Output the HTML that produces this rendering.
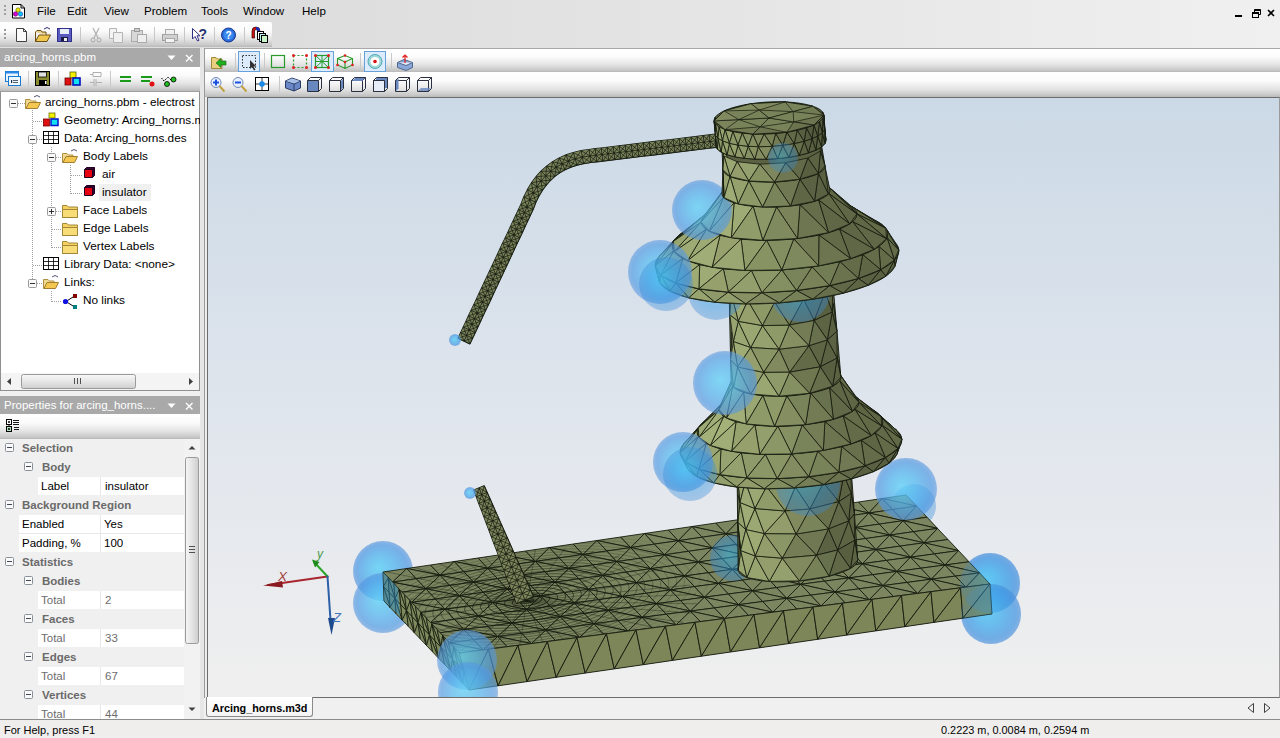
<!DOCTYPE html>
<html><head><meta charset="utf-8">
<style>
*{margin:0;padding:0;box-sizing:border-box}
html,body{width:1280px;height:738px;overflow:hidden;background:#f0f0f0;font-family:"Liberation Sans",sans-serif;font-size:12px;color:#000}
.a{position:absolute}
svg{overflow:visible}
.menu span{position:absolute;top:4px;font-size:11.6px;color:#000}
.tb{background:linear-gradient(#ffffff 0%,#fbfbfb 35%,#e4e4e4 68%,#c8c8c8 92%,#b8b8b8 100%)}
.hdr{background:#a9a9a9;color:#fff;font-size:11.5px}
.tree div{position:absolute;font-size:11.8px;white-space:nowrap;line-height:13px}
.pg div{position:absolute;white-space:nowrap;font-size:11.5px;line-height:14px}
.pg .cat{font-weight:bold;color:#6a6a6a}
.pg .val{color:#000}
.pg .dis{color:#6d6d6d}
.ico{position:absolute}
</style></head><body>
<!-- menu bar -->
<div class="a" style="left:0;top:0;width:1280px;height:48px;background:linear-gradient(90deg,#e2e2e2 0%,#dddddd 22%,#e6e6e6 60%,#f0f0f0 100%)"></div>
<div class="a" style="left:0;top:48px;width:1280px;height:1px;background:#a8a8a8"></div>
<div class="a menu" style="left:0;top:0;width:1280px;height:22px">
 <svg class="ico" style="left:4px;top:5px" width="3" height="12"><rect x="0" y="0" width="2" height="2" fill="#a0a0a0"/><rect x="0" y="4" width="2" height="2" fill="#a0a0a0"/><rect x="0" y="8" width="2" height="2" fill="#a0a0a0"/></svg>
 <svg class="ico" style="left:11px;top:3px" width="15" height="16" viewBox="0 0 15 16"><path d="M1.5 1.5H10L13.5 5V15H1.5Z" fill="#fff" stroke="#000"/><path d="M10 1.5V5H13.5" fill="none" stroke="#000"/><circle cx="7" cy="7" r="2.2" fill="#e8e800" stroke="#5a5a00" stroke-width=".6"/><circle cx="4.5" cy="11" r="2.2" fill="#d000d0" stroke="#600060" stroke-width=".6"/><circle cx="9.5" cy="11" r="2.2" fill="#10c0ff" stroke="#0040a0" stroke-width=".6"/></svg>
 <span style="left:37px">File</span>
 <span style="left:67px">Edit</span>
 <span style="left:104px">View</span>
 <span style="left:144px">Problem</span>
 <span style="left:201px">Tools</span>
 <span style="left:243px">Window</span>
 <span style="left:302px">Help</span>
 <!-- MDI buttons -->
 <svg class="ico" style="left:1234px;top:8px" width="44" height="12" viewBox="0 0 44 12">
  <rect x="1" y="7" width="7" height="2" fill="#000"/>
  <rect x="18.5" y="4.5" width="6" height="5" fill="none" stroke="#000"/><rect x="18.5" y="4.5" width="6" height="1.5" fill="#000"/>
  <path d="M20.5 4.5V1.5H26.5V6.5H24.5" fill="none" stroke="#000"/><rect x="20.5" y="1.5" width="6" height="1.5" fill="#000"/>
  <path d="M34 2L40 8M40 2L34 8" stroke="#000" stroke-width="1.6"/>
 </svg>
</div>

<!-- main toolbar -->
<div class="a tb" style="left:0;top:22px;width:272px;height:25px;border-radius:0 2px 0 0"></div>
<svg class="ico" style="left:0;top:22px" width="272" height="25" viewBox="0 0 272 25">
 <g fill="#9a9a9a"><rect x="4" y="7" width="2" height="2"/><rect x="4" y="11" width="2" height="2"/><rect x="4" y="15" width="2" height="2"/></g>
 <!-- new -->
 <path d="M16.5 6.5H23.5L26.5 9.5V19.5H16.5Z" fill="#fafafa" stroke="#404040"/><path d="M23.5 6.5V9.5H26.5" fill="none" stroke="#404040"/>
 <!-- open -->
 <path d="M35.5 10V19.5H47L50.5 13H39L35.5 19.5" fill="#f0c850" stroke="#705010"/><path d="M35.5 10L37 8.5H41L42 10H46V13" fill="#e8d090" stroke="#705010"/><path d="M44 7Q47 4 50 7" fill="none" stroke="#303070"/>
 <!-- save -->
 <rect x="57.5" y="6.5" width="14" height="13" fill="#5a5ac0" stroke="#30308a"/><rect x="60" y="7" width="9" height="5" fill="#e8eef8"/><rect x="61" y="15" width="7" height="4.5" fill="#1a1a40"/><rect x="64" y="16" width="3" height="3" fill="#eee"/>
 <rect x="80" y="5" width="1" height="16" fill="#c8c8c8"/>
 <!-- cut disabled -->
 <path d="M93 6L98 16M99 6L94 16" stroke="#b0b0b0" stroke-width="1.2"/><circle cx="93" cy="18" r="2" fill="none" stroke="#a8a8a8"/><circle cx="99" cy="18" r="2" fill="none" stroke="#a8a8a8"/>
 <!-- copy disabled -->
 <path d="M109.5 6.5H116.5V16.5H109.5Z" fill="#f4f4f4" stroke="#b4b4b4"/><path d="M113.5 10.5H122.5V20.5H113.5Z" fill="#f0f0f0" stroke="#b4b4b4"/>
 <!-- paste disabled -->
 <rect x="131.5" y="8.5" width="11" height="11" fill="#d8d8d8" stroke="#aaa"/><rect x="134.5" y="6.5" width="5" height="3" fill="#ccc" stroke="#999"/><rect x="137.5" y="12.5" width="9" height="8" fill="#eee" stroke="#aaa"/>
 <rect x="154" y="5" width="1" height="16" fill="#c8c8c8"/>
 <!-- print disabled -->
 <rect x="162.5" y="12.5" width="15" height="6" fill="#d0d0d0" stroke="#a0a0a0"/><rect x="165.5" y="7.5" width="9" height="5" fill="#f0f0f0" stroke="#a8a8a8"/><rect x="165.5" y="16.5" width="9" height="4" fill="#f4f4f4" stroke="#a8a8a8"/>
 <rect x="184" y="5" width="1" height="16" fill="#c8c8c8"/>
 <!-- help arrow -->
 <path d="M192.5 6.5V17L195 14.5L197.5 19L199 18.3L197 13.8H200Z" fill="#fff" stroke="#303080"/><text x="198.5" y="17" font-size="14" font-weight="bold" fill="#2a3470" font-family="Liberation Sans">?</text>
 <rect x="214" y="5" width="1" height="16" fill="#c8c8c8"/>
 <!-- help circle -->
 <circle cx="228.5" cy="13" r="7" fill="#2a6ad8" stroke="#1a3a90"/><circle cx="228.5" cy="13" r="5" fill="#3a8af0"/><text x="225.5" y="17" font-size="10" font-weight="bold" fill="#fff" font-family="Liberation Sans">?</text>
 <rect x="244" y="5" width="1" height="16" fill="#c8c8c8"/>
 <!-- app icon -->
 <path d="M252 16V9Q252 5 256 5Q260 5 260 9V12H257.5V9Q257.5 7.5 256 7.5Q254.5 7.5 254.5 9V16Z" fill="#d01010" stroke="#300" stroke-width=".7"/><path d="M256 5Q260 5 260 9V12H257.5V9Q257.5 7.5 256 7.5Z" fill="#1830c0"/>
 <rect x="257.5" y="9.5" width="6" height="8" fill="#fff" stroke="#000"/><rect x="259.5" y="11.5" width="6" height="8" fill="#b8f0f0" stroke="#000"/><rect x="261.5" y="13.5" width="6" height="7" fill="#c8f4c8" stroke="#000"/>
</svg>

<!-- left panel 1 -->
<div class="a hdr" style="left:0;top:48px;width:200px;height:19px"><span class="a" style="left:4px;top:3px">arcing_horns.pbm</span>
 <svg class="ico" style="left:166px;top:6px" width="30" height="9" viewBox="0 0 30 9"><path d="M1.5 1.5H9.5L5.5 6Z" fill="#fff"/><path d="M20 1L26.5 7.5M26.5 1L20 7.5" stroke="#fff" stroke-width="1.4"/></svg>
</div>
<div class="a tb" style="left:0;top:67px;width:200px;height:24px"></div>
<svg class="ico" style="left:0;top:67px" width="200" height="24" viewBox="0 0 200 24">
 <!-- window icon -->
 <rect x="5.5" y="4.5" width="13" height="10" fill="#e8f4ff" stroke="#1a7ad0"/><rect x="5.5" y="4.5" width="13" height="2" fill="#2a8ae8"/>
 <rect x="8.5" y="9.5" width="12" height="9" fill="#f0f8ff" stroke="#1a7ad0"/><rect x="11" y="13" width="1.2" height="3" fill="#203040"/><rect x="13" y="13" width="5" height="1" fill="#506070"/><rect x="13" y="15" width="5" height="1" fill="#506070"/>
 <rect x="28" y="4" width="1" height="16" fill="#cacaca"/>
 <!-- dark save -->
 <rect x="35.5" y="4.5" width="14" height="14" fill="#8a8a30" stroke="#000"/><rect x="38.5" y="5" width="8" height="5" fill="#e0e0e0" stroke="#000" stroke-width=".8"/><rect x="39" y="13" width="8" height="5.5" fill="#000"/><rect x="45" y="14" width="1.5" height="3" fill="#fff"/>
 <rect x="58" y="4" width="1" height="16" fill="#cacaca"/>
 <!-- cubes -->
 <rect x="70" y="5" width="6" height="6" fill="#f0f000" stroke="#606000" stroke-width=".8"/><rect x="65" y="11" width="6" height="7" fill="#e01010" stroke="#600" stroke-width=".8"/><rect x="73" y="11" width="7" height="7" fill="#10e0f0" stroke="#0010c0" stroke-width="1.6"/>
 <!-- disabled icon -->
 <path d="M90 7.5H93M93 5.5H101V9.5H93Z M90 15.5H94M94 12V19M96 12V19M96 15.5H102" fill="none" stroke="#b0b0b0"/>
 <rect x="110" y="4" width="1" height="16" fill="#cacaca"/>
 <!-- green = -->
 <rect x="120" y="9" width="11" height="2" fill="#1a9a1a"/><rect x="120" y="13" width="11" height="2" fill="#1a9a1a"/>
 <rect x="141" y="9" width="11" height="2" fill="#1a9a1a"/><rect x="141" y="13" width="9" height="2" fill="#1a9a1a"/><circle cx="152" cy="17" r="2.5" fill="#e01010"/>
 <!-- green links -->
 <path d="M161.5 11L164 14L168 10L172 14" fill="none" stroke="#000" stroke-dasharray="1.5 1"/><circle cx="167" cy="17" r="2.5" fill="#20c020" stroke="#000" stroke-width=".8"/><circle cx="173.5" cy="12.5" r="2.5" fill="#20c020" stroke="#000" stroke-width=".8"/>
</svg>
<div class="a" style="left:0;top:91px;width:200px;height:300px;background:#fff;border:1px solid #8e8f8f;border-top-color:#a0a0a0"></div>
<svg class="ico" style="left:0;top:91px" width="200" height="284" viewBox="0 0 200 284">
 <g stroke="#a0a0a0" stroke-dasharray="1 1" fill="none">
  <path d="M18 12.5H25"/>
  <path d="M32.5 19V190"/><path d="M33 30.5H43"/><path d="M37 48.5H43"/><path d="M33 174.5H43"/><path d="M37 192.5H43"/>
  <path d="M51.5 56V157"/><path d="M56 66.5H62"/><path d="M56 120.5H62"/><path d="M52 138.5H62"/><path d="M52 156.5H62"/>
  <path d="M70.5 74V103"/><path d="M71 84.5H83"/><path d="M71 102.5H83"/>
  <path d="M51.5 200V211"/><path d="M52 210.5H62"/>
 </g>
 <!-- expanders -->
 <g fill="#f8f8f8" stroke="#9a9a9a">
  <rect x="9.5" y="8.5" width="8" height="8" rx="1"/><rect x="28.5" y="44.5" width="8" height="8" rx="1"/><rect x="47.5" y="62.5" width="8" height="8" rx="1"/><rect x="47.5" y="116.5" width="8" height="8" rx="1"/><rect x="28.5" y="188.5" width="8" height="8" rx="1"/>
 </g>
 <g fill="#303030"><rect x="11" y="12" width="5" height="1"/><rect x="30" y="48" width="5" height="1"/><rect x="49" y="66" width="5" height="1"/><rect x="49" y="120" width="5" height="1"/><rect x="51" y="118" width="1" height="5"/><rect x="30" y="192" width="5" height="1"/></g>
 <!-- root open folder -->
 <g id="ofold"><path d="M25.5 8.5H30L31.5 10H36V17.5H25.5Z" fill="#f0d890" stroke="#b09040"/><path d="M26 17.5L29 11.5H40.5L37.5 17.5Z" fill="#f4c850" stroke="#a08030"/><path d="M34 6Q37 3 40 6" fill="none" stroke="#404060" stroke-width=".9"/></g>
 <!-- geometry cubes -->
 <rect x="49" y="22" width="6" height="5" fill="#f0f000" stroke="#707000" stroke-width=".8"/><rect x="43.5" y="28" width="6" height="7" fill="#e01010" stroke="#700" stroke-width=".8"/><rect x="51" y="28" width="7" height="6.5" fill="#10e0f0" stroke="#0010d0" stroke-width="1.5"/>
 <!-- data table -->
 <g fill="none" stroke="#000"><rect x="43.5" y="40.5" width="15" height="12"/><path d="M43.5 44.5H58.5M43.5 48.5H58.5M48.5 40.5V52.5M53.5 40.5V52.5" stroke-width=".8"/></g>
 <!-- body labels open folder -->
 <use href="#ofold" x="37" y="54"/>
 <!-- air / insulator cubes -->
 <g><path d="M84.5 78.5L86.5 76.5H94.5V84.5L92.5 86.5H84.5Z" fill="#3a0030" stroke="#200020"/><rect x="85" y="79" width="7" height="7" fill="#e80010"/><path d="M84.5 78.5H92.5V86.5M92.5 78.5L94.5 76.5" fill="none" stroke="#200020"/></g>
 <g><path d="M84.5 96.5L86.5 94.5H94.5V102.5L92.5 104.5H84.5Z" fill="#3a0030" stroke="#200020"/><rect x="85" y="97" width="7" height="7" fill="#e80010"/><path d="M84.5 96.5H92.5V104.5M92.5 96.5L94.5 94.5" fill="none" stroke="#200020"/></g>
 <rect x="99" y="93" width="52" height="17" fill="#ececec" opacity=".8"/>
 <!-- closed folders -->
 <g id="cfold"><path d="M62.5 114.5H67L68.5 116H77.5V126.5H62.5Z" fill="#f6d060" stroke="#a08838"/><path d="M62.5 118.5H77.5V126.5H62.5Z" fill="#f8dc78" stroke="#a08838"/></g>
 <use href="#cfold" x="0" y="18"/>
 <use href="#cfold" x="0" y="36"/>
 <!-- library data table -->
 <g fill="none" stroke="#000"><rect x="43.5" y="166.5" width="15" height="12"/><path d="M43.5 170.5H58.5M43.5 174.5H58.5M48.5 166.5V178.5M53.5 166.5V178.5" stroke-width=".8"/></g>
 <!-- links folder -->
 <use href="#ofold" x="18" y="180"/>
 <!-- no links icon -->
 <path d="M66 210.5L73 206M66 210.5L73 215" stroke="#000" fill="none"/><circle cx="65.5" cy="210.5" r="2.6" fill="#1010e0"/><rect x="73" y="203" width="4" height="4" fill="#800000"/><rect x="73" y="214" width="4" height="4" fill="#008080"/>
</svg>
<div class="a tree" style="left:0;top:91px;width:200px;height:280px;overflow:hidden">
 <div style="left:45px;top:5px">arcing_horns.pbm - electrost</div>
 <div style="left:64px;top:23px">Geometry: Arcing_horns.m</div>
 <div style="left:64px;top:41px">Data: Arcing_horns.des</div>
 <div style="left:83px;top:59px">Body Labels</div>
 <div style="left:102px;top:77px">air</div>
 <div style="left:102px;top:95px">insulator</div>
 <div style="left:83px;top:113px">Face Labels</div>
 <div style="left:83px;top:131px">Edge Labels</div>
 <div style="left:83px;top:149px">Vertex Labels</div>
 <div style="left:64px;top:167px">Library Data: &lt;none&gt;</div>
 <div style="left:64px;top:185px">Links:</div>
 <div style="left:83px;top:203px">No links</div>
</div>
<!-- horizontal scrollbar -->
<div class="a" style="left:1px;top:373px;width:198px;height:17px;background:#f4f4f4"></div>
<svg class="ico" style="left:1px;top:373px" width="198" height="17" viewBox="0 0 198 17">
 <path d="M6 8.5L10 5V12Z" fill="#404040"/>
 <path d="M192 8.5L188 5V12Z" fill="#404040"/>
 <rect x="20.5" y="1.5" width="114" height="14" rx="2" fill="url(#thumbg)" stroke="#9a9a9a"/>
 <defs><linearGradient id="thumbg" x1="0" y1="0" x2="0" y2="1"><stop offset="0" stop-color="#f8f8f8"/><stop offset=".5" stop-color="#e6e6e6"/><stop offset="1" stop-color="#cfcfcf"/></linearGradient>
 <linearGradient id="thumbv" x1="0" y1="0" x2="1" y2="0"><stop offset="0" stop-color="#f6f6f6"/><stop offset=".5" stop-color="#e4e4e4"/><stop offset="1" stop-color="#cdcdcd"/></linearGradient></defs>
 <path d="M73.5 5V11M76.5 5V11M79.5 5V11" stroke="#505050"/>
</svg>

<!-- properties panel -->
<div class="a hdr" style="left:0;top:396px;width:200px;height:18px"><span class="a" style="left:4px;top:3px">Properties for arcing_horns....</span>
 <svg class="ico" style="left:166px;top:6px" width="30" height="9" viewBox="0 0 30 9"><path d="M1.5 1.5H9.5L5.5 6Z" fill="#fff"/><path d="M20 1L26.5 7.5M26.5 1L20 7.5" stroke="#fff" stroke-width="1.4"/></svg>
</div>
<div class="a tb" style="left:0;top:414px;width:200px;height:25px"></div>
<svg class="ico" style="left:0;top:414px" width="30" height="25" viewBox="0 0 30 25">
 <rect x="6.5" y="5.5" width="5" height="5" fill="#fff" stroke="#000"/><path d="M8 8H10M9 7V9" stroke="#000"/>
 <rect x="6.5" y="12.5" width="5" height="5" fill="#b0e0c0" stroke="#000"/><path d="M8 15H10M9 14V16" stroke="#000"/>
 <path d="M9 10.5V12.5" stroke="#000"/>
 <path d="M13 6.5H19M13 8.5H19M13 10.5H19M14 13.5H19M14 15.5H19" stroke="#000" stroke-width=".9"/>
</svg>
<div class="a pg" style="left:0;top:439px;width:184px;height:280px;background:#f0f0f0;overflow:hidden">
 <svg class="ico" style="left:0;top:0" width="184" height="279" viewBox="0 0 184 279">
  <g fill="#fff">
   <rect x="38" y="38" width="146" height="18"/>
   <rect x="19" y="76" width="165" height="18"/><rect x="19" y="95" width="165" height="18"/>
   <rect x="38" y="152" width="146" height="18"/><rect x="38" y="190" width="146" height="18"/><rect x="38" y="228" width="146" height="18"/><rect x="38" y="266" width="146" height="18"/>
  </g>
  <g fill="#e8e8e8"><rect x="100" y="38" width="1" height="18"/><rect x="100" y="76" width="1" height="37"/><rect x="19" y="94" width="165" height="1"/><rect x="100" y="152" width="1" height="18"/><rect x="100" y="190" width="1" height="18"/><rect x="100" y="228" width="1" height="18"/><rect x="100" y="266" width="1" height="18"/></g>
  <g fill="#fafafa" stroke="#8a9098">
   <rect x="5.5" y="4.5" width="8" height="8" rx="1"/><rect x="24.5" y="23.5" width="8" height="8" rx="1"/><rect x="5.5" y="61.5" width="8" height="8" rx="1"/><rect x="5.5" y="118.5" width="8" height="8" rx="1"/>
   <rect x="24.5" y="137.5" width="8" height="8" rx="1"/><rect x="24.5" y="175.5" width="8" height="8" rx="1"/><rect x="24.5" y="213.5" width="8" height="8" rx="1"/><rect x="24.5" y="251.5" width="8" height="8" rx="1"/>
  </g>
  <g fill="#404858"><rect x="7" y="8" width="5" height="1"/><rect x="26" y="27" width="5" height="1"/><rect x="7" y="65" width="5" height="1"/><rect x="7" y="122" width="5" height="1"/><rect x="26" y="141" width="5" height="1"/><rect x="26" y="179" width="5" height="1"/><rect x="26" y="217" width="5" height="1"/><rect x="26" y="255" width="5" height="1"/></g>
 </svg>
 <div class="cat" style="left:22px;top:2px">Selection</div>
 <div class="cat" style="left:42px;top:21px">Body</div>
 <div class="val" style="left:41px;top:40px">Label</div>
 <div class="val" style="left:105px;top:40px">insulator</div>
 <div class="cat" style="left:22px;top:59px">Background Region</div>
 <div class="val" style="left:22px;top:78px">Enabled</div>
 <div class="val" style="left:104px;top:78px">Yes</div>
 <div class="val" style="left:22px;top:97px">Padding, %</div>
 <div class="val" style="left:104px;top:97px">100</div>
 <div class="cat" style="left:22px;top:116px">Statistics</div>
 <div class="cat" style="left:42px;top:135px">Bodies</div>
 <div class="dis" style="left:41px;top:154px">Total</div>
 <div class="dis" style="left:105px;top:154px">2</div>
 <div class="cat" style="left:42px;top:173px">Faces</div>
 <div class="dis" style="left:41px;top:192px">Total</div>
 <div class="dis" style="left:105px;top:192px">33</div>
 <div class="cat" style="left:42px;top:211px">Edges</div>
 <div class="dis" style="left:41px;top:230px">Total</div>
 <div class="dis" style="left:105px;top:230px">67</div>
 <div class="cat" style="left:42px;top:249px">Vertices</div>
 <div class="dis" style="left:41px;top:268px">Total</div>
 <div class="dis" style="left:105px;top:268px">44</div>
</div>
<!-- vertical scrollbar props -->
<div class="a" style="left:184px;top:439px;width:16px;height:280px;background:#f2f2f2"></div>
<svg class="ico" style="left:184px;top:439px" width="16" height="279" viewBox="0 0 16 279">
 <path d="M4.5 10.5L8 7L11.5 10.5Z" fill="#404040"/>
 <rect x="1.5" y="18.5" width="13" height="186" rx="2" fill="url(#thumbv)" stroke="#9a9a9a"/>
 <path d="M5 107.5H11M5 110.5H11M5 113.5H11" stroke="#505050"/>
 <path d="M4.5 268.5L8 272L11.5 268.5Z" fill="#404040"/>
</svg>

<!-- splitter -->
<div class="a" style="left:200px;top:48px;width:4px;height:671px;background:#e6e6e6"></div>
<div class="a" style="left:204px;top:48px;width:1px;height:651px;background:#9a9a9a"></div>

<!-- view frame -->
<div class="a tb" style="left:205px;top:49px;width:1075px;height:23px"></div>
<div class="a tb" style="left:205px;top:72px;width:1075px;height:25px"></div>
<svg class="ico" style="left:205px;top:49px" width="240" height="47" viewBox="205 49 240 47">
 <!-- folder with green arrow -->
 <path d="M211.5 57.5H216L217.5 59H222V68.5H211.5Z" fill="#e8d080" stroke="#a08838"/><path d="M216 63L221 58.5V61H226V65H221V67.5Z" fill="#20b020" stroke="#106010" stroke-width=".6"/>
 <rect x="235" y="53" width="1" height="16" fill="#c8c8c8"/>
 <!-- select (pressed) -->
 <rect x="238.5" y="51.5" width="21" height="20" fill="#dcecfc" stroke="#68a0d8"/>
 <rect x="242.5" y="55.5" width="13" height="12" fill="none" stroke="#303030" stroke-dasharray="1.5 1.5"/><path d="M250 60V69L252 67L254 70.5L255.5 69.7L253.5 66.5H256.5Z" fill="#303030"/>
 <rect x="264" y="53" width="1" height="16" fill="#c8c8c8"/>
 <rect x="271.5" y="55.5" width="13" height="12" fill="none" stroke="#2a9a2a" stroke-width="1.2"/>
 <rect x="293.5" y="55.5" width="13" height="12" fill="none" stroke="#2a9a2a" stroke-width="1.2" stroke-dasharray="2 2"/>
 <g fill="#e02020"><circle cx="293.5" cy="55.5" r="1.5"/><circle cx="306.5" cy="55.5" r="1.5"/><circle cx="293.5" cy="67.5" r="1.5"/><circle cx="306.5" cy="67.5" r="1.5"/></g>
 <rect x="311.5" y="51.5" width="22" height="20" fill="#dcecfc" stroke="#68a0d8"/>
 <rect x="315.5" y="55.5" width="13" height="12" fill="none" stroke="#2a9a2a" stroke-width="1.2"/><path d="M315.5 55.5L328.5 67.5M328.5 55.5L315.5 67.5M322 55.5V67.5M315.5 61.5H328.5" stroke="#2a9a2a"/>
 <g fill="#e02020"><circle cx="315.5" cy="55.5" r="1.5"/><circle cx="328.5" cy="55.5" r="1.5"/><circle cx="315.5" cy="67.5" r="1.5"/><circle cx="328.5" cy="67.5" r="1.5"/></g>
 <path d="M337.5 58.5L345 55.5L352.5 58.5V65L345 68.5L337.5 65Z M337.5 58.5L345 62L352.5 58.5M345 62V68.5" fill="none" stroke="#2a9a2a" stroke-width="1.1"/>
 <g fill="#e02020"><circle cx="345" cy="55.5" r="1.3"/><circle cx="345" cy="62" r="1.3"/><circle cx="337.5" cy="65" r="1.3"/><circle cx="352.5" cy="65" r="1.3"/></g>
 <rect x="360" y="53" width="1" height="16" fill="#c8c8c8"/>
 <rect x="364.5" y="51.5" width="21" height="20" fill="#dcecfc" stroke="#68a0d8"/>
 <circle cx="375" cy="61.5" r="7" fill="#a0d8d8" stroke="#50a8b8"/><circle cx="375" cy="61.5" r="4.5" fill="#fff"/><circle cx="375" cy="61.5" r="1.8" fill="#e01010"/>
 <rect x="391" y="53" width="1" height="16" fill="#c8c8c8"/>
 <path d="M397.5 62.5L404 59.5L412.5 62.5V67.5L406 70.5L397.5 67.5Z" fill="#8aa8d8" stroke="#506890"/><path d="M397.5 62.5L406 65.5L412.5 62.5" fill="#e8eef8" stroke="#506890"/>
 <path d="M405 63V55M402.5 57.5L405 55L407.5 57.5" stroke="#e02020" fill="none" stroke-width="1.2"/>
 <!-- row 2 -->
 <circle cx="216" cy="82.5" r="5" fill="#e8f0ff" stroke="#7088b0"/><path d="M213 82.5H219M216 79.5V85.5" stroke="#1a50e0" stroke-width="2"/><path d="M219.5 86L224.5 91.5" stroke="#c0a040" stroke-width="2"/>
 <circle cx="238" cy="82.5" r="5" fill="#e8f0ff" stroke="#7088b0"/><path d="M235 82.5H241" stroke="#1a50e0" stroke-width="2"/><path d="M241.5 86L246.5 91.5" stroke="#c0a040" stroke-width="2"/>
 <rect x="255.5" y="77.5" width="13" height="13" fill="#fff" stroke="#000"/><path d="M262 78V90M256 84H268" stroke="#000" stroke-width=".8"/><circle cx="262" cy="84" r="2.8" fill="#1a8ae8"/>
 <rect x="279" y="76" width="1" height="16" fill="#c8c8c8"/>
 <path d="M285.5 81L292 78L300.5 81V88L294 91L285.5 88Z" fill="#6a88c8" stroke="#2a3a60"/><path d="M285.5 81L294 84L300.5 81M294 84V91" fill="none" stroke="#2a3a60"/><path d="M286 81L292 78.5L300 81L294 83.5Z" fill="#a8c0e8"/>
 <g fill="none" stroke="#2a3040">
  <path d="M307.5 80.5H318.5V91.5H307.5Z M307.5 80.5L310.5 77.5H321.5V88.5L318.5 91.5M318.5 80.5L321.5 77.5"/>
  <path d="M329.5 80.5H340.5V91.5H329.5Z M329.5 80.5L332.5 77.5H343.5V88.5L340.5 91.5M340.5 80.5L343.5 77.5"/>
  <path d="M351.5 80.5H362.5V91.5H351.5Z M351.5 80.5L354.5 77.5H365.5V88.5L362.5 91.5M362.5 80.5L365.5 77.5"/>
  <path d="M373.5 80.5H384.5V91.5H373.5Z M373.5 80.5L376.5 77.5H387.5V88.5L384.5 91.5M384.5 80.5L387.5 77.5"/>
  <path d="M395.5 80.5H406.5V91.5H395.5Z M395.5 80.5L398.5 77.5H409.5V88.5L406.5 91.5M406.5 80.5L409.5 77.5"/>
  <path d="M417.5 80.5H428.5V91.5H417.5Z M417.5 80.5L420.5 77.5H431.5V88.5L428.5 91.5M428.5 80.5L431.5 77.5"/>
 </g>
 <rect x="308" y="81" width="10" height="10" fill="#6a88c0"/>
 <path d="M341 81L343 79V88L341 90Z" fill="#6a88c0"/>
 <path d="M352 81L355 78H365L362 81Z" fill="#6a88c0"/>
 <rect x="376" y="78" width="11" height="10" fill="#6a88c0"/><rect x="374" y="81" width="10" height="10" fill="#e8eef8"/><path d="M373.5 80.5H384.5V91.5H373.5Z" fill="none" stroke="#2a3040"/>
 <path d="M396 81V91L398.5 88.5V78Z" fill="#6a88c0"/>
 <path d="M418 91L421 88H431L428 91Z" fill="#6a88c0" opacity=".8"/>
</svg>
<div class="a" style="left:205px;top:97px;width:2px;height:602px;background:#ececec"></div>
<div class="a" style="left:207px;top:97px;width:1073px;height:601px;border:1px solid #6d6d6d;border-right-color:#9a9a9a;background:linear-gradient(#cbd9e6 0%,#dfe5ed 50%,#efefef 98%)"></div>
<svg class="a" style="left:0;top:0" width="1280" height="738" viewBox="0 0 1280 738"><defs>
<radialGradient id="sg" cx="0.5" cy="0.5" r="0.5" fx="0.42" fy="0.45">
<stop offset="0" stop-color="#62d2f7" stop-opacity="0.95"/>
<stop offset="0.45" stop-color="#55b8f0" stop-opacity="0.88"/>
<stop offset="0.85" stop-color="#4e9ae4" stop-opacity="0.82"/>
<stop offset="1" stop-color="#5a98de" stop-opacity="0.72"/>
</radialGradient>
<radialGradient id="sgt" cx="0.5" cy="0.5" r="0.5" fx="0.4" fy="0.42">
<stop offset="0" stop-color="#30b8f2" stop-opacity="0.7"/>
<stop offset="0.6" stop-color="#2a94e2" stop-opacity="0.6"/>
<stop offset="1" stop-color="#3a8ad8" stop-opacity="0.5"/>
</radialGradient>
<radialGradient id="dense"><stop offset="0" stop-color="#1a2010" stop-opacity="0.45"/><stop offset="0.6" stop-color="#1a2010" stop-opacity="0.25"/><stop offset="1" stop-color="#1a2010" stop-opacity="0"/></radialGradient>
<clipPath id="vc"><rect x="208" y="98" width="1071" height="599"/></clipPath>
</defs><g clip-path="url(#vc)"><circle cx="383" cy="571" r="30" fill="url(#sg)" opacity="0.9"/>
<circle cx="383" cy="603" r="30" fill="url(#sg)" opacity="0.85"/>
<circle cx="990" cy="583" r="30" fill="url(#sg)" opacity="0.9"/>
<circle cx="991" cy="614" r="30" fill="url(#sg)" opacity="0.85"/>
<circle cx="914" cy="506" r="22" fill="url(#sgt)" opacity="0.75"/>
<clipPath id="plateclip"><polygon points="383,572 906,495 990,584 459,653"/></clipPath>
<polygon points="383.0,572.0 906.0,495.0 990.0,584.0 459.0,653.0" fill="#7b8560"/>
<polygon points="383.0,572.0 406.8,568.5 392.5,582.1" fill="#7b8560" stroke="#141a0e" stroke-width="0.85" stroke-linejoin="round"/>
<polygon points="406.8,568.5 416.3,578.7 392.5,582.1" fill="#7b8560" stroke="#141a0e" stroke-width="0.85" stroke-linejoin="round"/>
<polygon points="392.5,582.1 416.3,578.7 425.9,588.8" fill="#7b8560" stroke="#141a0e" stroke-width="0.85" stroke-linejoin="round"/>
<polygon points="392.5,582.1 425.9,588.8 402.0,592.2" fill="#7b8560" stroke="#141a0e" stroke-width="0.85" stroke-linejoin="round"/>
<polygon points="402.0,592.2 425.9,588.8 411.5,602.4" fill="#7b8560" stroke="#141a0e" stroke-width="0.85" stroke-linejoin="round"/>
<polygon points="425.9,588.8 435.4,599.0 411.5,602.4" fill="#7b8560" stroke="#141a0e" stroke-width="0.85" stroke-linejoin="round"/>
<polygon points="411.5,602.4 435.4,599.0 445.0,609.2" fill="#7b8560" stroke="#141a0e" stroke-width="0.85" stroke-linejoin="round"/>
<polygon points="411.5,602.4 445.0,609.2 421.0,612.5" fill="#7b8560" stroke="#141a0e" stroke-width="0.85" stroke-linejoin="round"/>
<polygon points="421.0,612.5 445.0,609.2 430.5,622.6" fill="#7b8560" stroke="#141a0e" stroke-width="0.85" stroke-linejoin="round"/>
<polygon points="445.0,609.2 454.5,619.4 430.5,622.6" fill="#7b8560" stroke="#141a0e" stroke-width="0.85" stroke-linejoin="round"/>
<polygon points="430.5,622.6 454.5,619.4 464.0,629.5" fill="#7b8560" stroke="#141a0e" stroke-width="0.85" stroke-linejoin="round"/>
<polygon points="430.5,622.6 464.0,629.5 440.0,632.8" fill="#7b8560" stroke="#141a0e" stroke-width="0.85" stroke-linejoin="round"/>
<polygon points="440.0,632.8 464.0,629.5 449.5,642.9" fill="#7b8560" stroke="#141a0e" stroke-width="0.85" stroke-linejoin="round"/>
<polygon points="464.0,629.5 473.6,639.7 449.5,642.9" fill="#7b8560" stroke="#141a0e" stroke-width="0.85" stroke-linejoin="round"/>
<polygon points="449.5,642.9 473.6,639.7 483.1,649.9" fill="#7b8560" stroke="#141a0e" stroke-width="0.85" stroke-linejoin="round"/>
<polygon points="449.5,642.9 483.1,649.9 459.0,653.0" fill="#7b8560" stroke="#141a0e" stroke-width="0.85" stroke-linejoin="round"/>
<polygon points="406.8,568.5 430.5,565.0 440.1,575.2" fill="#7b8560" stroke="#141a0e" stroke-width="0.85" stroke-linejoin="round"/>
<polygon points="406.8,568.5 440.1,575.2 416.3,578.7" fill="#7b8560" stroke="#141a0e" stroke-width="0.85" stroke-linejoin="round"/>
<polygon points="416.3,578.7 440.1,575.2 425.9,588.8" fill="#7b8560" stroke="#141a0e" stroke-width="0.85" stroke-linejoin="round"/>
<polygon points="440.1,575.2 449.7,585.4 425.9,588.8" fill="#7b8560" stroke="#141a0e" stroke-width="0.85" stroke-linejoin="round"/>
<polygon points="425.9,588.8 449.7,585.4 459.3,595.6" fill="#7b8560" stroke="#141a0e" stroke-width="0.85" stroke-linejoin="round"/>
<polygon points="425.9,588.8 459.3,595.6 435.4,599.0" fill="#7b8560" stroke="#141a0e" stroke-width="0.85" stroke-linejoin="round"/>
<polygon points="435.4,599.0 459.3,595.6 445.0,609.2" fill="#7b8560" stroke="#141a0e" stroke-width="0.85" stroke-linejoin="round"/>
<polygon points="459.3,595.6 468.9,605.9 445.0,609.2" fill="#7b8560" stroke="#141a0e" stroke-width="0.85" stroke-linejoin="round"/>
<polygon points="445.0,609.2 468.9,605.9 478.5,616.1" fill="#7b8560" stroke="#141a0e" stroke-width="0.85" stroke-linejoin="round"/>
<polygon points="445.0,609.2 478.5,616.1 454.5,619.4" fill="#7b8560" stroke="#141a0e" stroke-width="0.85" stroke-linejoin="round"/>
<polygon points="454.5,619.4 478.5,616.1 464.0,629.5" fill="#7b8560" stroke="#141a0e" stroke-width="0.85" stroke-linejoin="round"/>
<polygon points="478.5,616.1 488.1,626.3 464.0,629.5" fill="#7b8560" stroke="#141a0e" stroke-width="0.85" stroke-linejoin="round"/>
<polygon points="464.0,629.5 488.1,626.3 497.7,636.5" fill="#7b8560" stroke="#141a0e" stroke-width="0.85" stroke-linejoin="round"/>
<polygon points="464.0,629.5 497.7,636.5 473.6,639.7" fill="#7b8560" stroke="#141a0e" stroke-width="0.85" stroke-linejoin="round"/>
<polygon points="473.6,639.7 497.7,636.5 483.1,649.9" fill="#7b8560" stroke="#141a0e" stroke-width="0.85" stroke-linejoin="round"/>
<polygon points="497.7,636.5 507.3,646.7 483.1,649.9" fill="#7b8560" stroke="#141a0e" stroke-width="0.85" stroke-linejoin="round"/>
<polygon points="430.5,565.0 454.3,561.5 440.1,575.2" fill="#7b8560" stroke="#141a0e" stroke-width="0.85" stroke-linejoin="round"/>
<polygon points="454.3,561.5 464.0,571.8 440.1,575.2" fill="#7b8560" stroke="#141a0e" stroke-width="0.85" stroke-linejoin="round"/>
<polygon points="440.1,575.2 464.0,571.8 473.6,582.0" fill="#7b8560" stroke="#141a0e" stroke-width="0.85" stroke-linejoin="round"/>
<polygon points="440.1,575.2 473.6,582.0 449.7,585.4" fill="#7b8560" stroke="#141a0e" stroke-width="0.85" stroke-linejoin="round"/>
<polygon points="449.7,585.4 473.6,582.0 459.3,595.6" fill="#7b8560" stroke="#141a0e" stroke-width="0.85" stroke-linejoin="round"/>
<polygon points="473.6,582.0 483.2,592.3 459.3,595.6" fill="#7b8560" stroke="#141a0e" stroke-width="0.85" stroke-linejoin="round"/>
<polygon points="459.3,595.6 483.2,592.3 492.9,602.5" fill="#7b8560" stroke="#141a0e" stroke-width="0.85" stroke-linejoin="round"/>
<polygon points="459.3,595.6 492.9,602.5 468.9,605.9" fill="#7b8560" stroke="#141a0e" stroke-width="0.85" stroke-linejoin="round"/>
<polygon points="468.9,605.9 492.9,602.5 478.5,616.1" fill="#7b8560" stroke="#141a0e" stroke-width="0.85" stroke-linejoin="round"/>
<polygon points="492.9,602.5 502.5,612.8 478.5,616.1" fill="#7b8560" stroke="#141a0e" stroke-width="0.85" stroke-linejoin="round"/>
<polygon points="478.5,616.1 502.5,612.8 512.1,623.1" fill="#7b8560" stroke="#141a0e" stroke-width="0.85" stroke-linejoin="round"/>
<polygon points="478.5,616.1 512.1,623.1 488.1,626.3" fill="#7b8560" stroke="#141a0e" stroke-width="0.85" stroke-linejoin="round"/>
<polygon points="488.1,626.3 512.1,623.1 497.7,636.5" fill="#7b8560" stroke="#141a0e" stroke-width="0.85" stroke-linejoin="round"/>
<polygon points="512.1,623.1 521.8,633.3 497.7,636.5" fill="#7b8560" stroke="#141a0e" stroke-width="0.85" stroke-linejoin="round"/>
<polygon points="497.7,636.5 521.8,633.3 531.4,643.6" fill="#7b8560" stroke="#141a0e" stroke-width="0.85" stroke-linejoin="round"/>
<polygon points="497.7,636.5 531.4,643.6 507.3,646.7" fill="#7b8560" stroke="#141a0e" stroke-width="0.85" stroke-linejoin="round"/>
<polygon points="454.3,561.5 478.1,558.0 487.8,568.3" fill="#7b8560" stroke="#141a0e" stroke-width="0.85" stroke-linejoin="round"/>
<polygon points="454.3,561.5 487.8,568.3 464.0,571.8" fill="#7b8560" stroke="#141a0e" stroke-width="0.85" stroke-linejoin="round"/>
<polygon points="464.0,571.8 487.8,568.3 473.6,582.0" fill="#7b8560" stroke="#141a0e" stroke-width="0.85" stroke-linejoin="round"/>
<polygon points="487.8,568.3 497.5,578.6 473.6,582.0" fill="#7b8560" stroke="#141a0e" stroke-width="0.85" stroke-linejoin="round"/>
<polygon points="473.6,582.0 497.5,578.6 507.1,588.9" fill="#7b8560" stroke="#141a0e" stroke-width="0.85" stroke-linejoin="round"/>
<polygon points="473.6,582.0 507.1,588.9 483.2,592.3" fill="#7b8560" stroke="#141a0e" stroke-width="0.85" stroke-linejoin="round"/>
<polygon points="483.2,592.3 507.1,588.9 492.9,602.5" fill="#7b8560" stroke="#141a0e" stroke-width="0.85" stroke-linejoin="round"/>
<polygon points="507.1,588.9 516.8,599.2 492.9,602.5" fill="#7b8560" stroke="#141a0e" stroke-width="0.85" stroke-linejoin="round"/>
<polygon points="492.9,602.5 516.8,599.2 526.5,609.5" fill="#7b8560" stroke="#141a0e" stroke-width="0.85" stroke-linejoin="round"/>
<polygon points="492.9,602.5 526.5,609.5 502.5,612.8" fill="#7b8560" stroke="#141a0e" stroke-width="0.85" stroke-linejoin="round"/>
<polygon points="502.5,612.8 526.5,609.5 512.1,623.1" fill="#7b8560" stroke="#141a0e" stroke-width="0.85" stroke-linejoin="round"/>
<polygon points="526.5,609.5 536.2,619.8 512.1,623.1" fill="#7b8560" stroke="#141a0e" stroke-width="0.85" stroke-linejoin="round"/>
<polygon points="512.1,623.1 536.2,619.8 545.9,630.1" fill="#7b8560" stroke="#141a0e" stroke-width="0.85" stroke-linejoin="round"/>
<polygon points="512.1,623.1 545.9,630.1 521.8,633.3" fill="#7b8560" stroke="#141a0e" stroke-width="0.85" stroke-linejoin="round"/>
<polygon points="521.8,633.3 545.9,630.1 531.4,643.6" fill="#7b8560" stroke="#141a0e" stroke-width="0.85" stroke-linejoin="round"/>
<polygon points="545.9,630.1 555.5,640.5 531.4,643.6" fill="#7b8560" stroke="#141a0e" stroke-width="0.85" stroke-linejoin="round"/>
<polygon points="478.1,558.0 501.9,554.5 487.8,568.3" fill="#7b8560" stroke="#141a0e" stroke-width="0.85" stroke-linejoin="round"/>
<polygon points="501.9,554.5 511.6,564.9 487.8,568.3" fill="#7b8560" stroke="#141a0e" stroke-width="0.85" stroke-linejoin="round"/>
<polygon points="487.8,568.3 511.6,564.9 521.3,575.2" fill="#7b8560" stroke="#141a0e" stroke-width="0.85" stroke-linejoin="round"/>
<polygon points="487.8,568.3 521.3,575.2 497.5,578.6" fill="#7b8560" stroke="#141a0e" stroke-width="0.85" stroke-linejoin="round"/>
<polygon points="497.5,578.6 521.3,575.2 507.1,588.9" fill="#7b8560" stroke="#141a0e" stroke-width="0.85" stroke-linejoin="round"/>
<polygon points="521.3,575.2 531.0,585.6 507.1,588.9" fill="#7b8560" stroke="#141a0e" stroke-width="0.85" stroke-linejoin="round"/>
<polygon points="507.1,588.9 531.0,585.6 540.8,595.9" fill="#7b8560" stroke="#141a0e" stroke-width="0.85" stroke-linejoin="round"/>
<polygon points="507.1,588.9 540.8,595.9 516.8,599.2" fill="#7b8560" stroke="#141a0e" stroke-width="0.85" stroke-linejoin="round"/>
<polygon points="516.8,599.2 540.8,595.9 526.5,609.5" fill="#7b8560" stroke="#141a0e" stroke-width="0.85" stroke-linejoin="round"/>
<polygon points="540.8,595.9 550.5,606.3 526.5,609.5" fill="#7b8560" stroke="#141a0e" stroke-width="0.85" stroke-linejoin="round"/>
<polygon points="526.5,609.5 550.5,606.3 560.2,616.6" fill="#7b8560" stroke="#141a0e" stroke-width="0.85" stroke-linejoin="round"/>
<polygon points="526.5,609.5 560.2,616.6 536.2,619.8" fill="#7b8560" stroke="#141a0e" stroke-width="0.85" stroke-linejoin="round"/>
<polygon points="536.2,619.8 560.2,616.6 545.9,630.1" fill="#7b8560" stroke="#141a0e" stroke-width="0.85" stroke-linejoin="round"/>
<polygon points="560.2,616.6 570.0,627.0 545.9,630.1" fill="#7b8560" stroke="#141a0e" stroke-width="0.85" stroke-linejoin="round"/>
<polygon points="545.9,630.1 570.0,627.0 579.7,637.3" fill="#7b8560" stroke="#141a0e" stroke-width="0.85" stroke-linejoin="round"/>
<polygon points="545.9,630.1 579.7,637.3 555.5,640.5" fill="#7b8560" stroke="#141a0e" stroke-width="0.85" stroke-linejoin="round"/>
<polygon points="501.9,554.5 525.6,551.0 535.4,561.4" fill="#7b8560" stroke="#141a0e" stroke-width="0.85" stroke-linejoin="round"/>
<polygon points="501.9,554.5 535.4,561.4 511.6,564.9" fill="#7b8560" stroke="#141a0e" stroke-width="0.85" stroke-linejoin="round"/>
<polygon points="511.6,564.9 535.4,561.4 521.3,575.2" fill="#7b8560" stroke="#141a0e" stroke-width="0.85" stroke-linejoin="round"/>
<polygon points="535.4,561.4 545.2,571.8 521.3,575.2" fill="#7b8560" stroke="#141a0e" stroke-width="0.85" stroke-linejoin="round"/>
<polygon points="521.3,575.2 545.2,571.8 555.0,582.2" fill="#7b8560" stroke="#141a0e" stroke-width="0.85" stroke-linejoin="round"/>
<polygon points="521.3,575.2 555.0,582.2 531.0,585.6" fill="#7b8560" stroke="#141a0e" stroke-width="0.85" stroke-linejoin="round"/>
<polygon points="531.0,585.6 555.0,582.2 540.8,595.9" fill="#7b8560" stroke="#141a0e" stroke-width="0.85" stroke-linejoin="round"/>
<polygon points="555.0,582.2 564.7,592.6 540.8,595.9" fill="#7b8560" stroke="#141a0e" stroke-width="0.85" stroke-linejoin="round"/>
<polygon points="540.8,595.9 564.7,592.6 574.5,603.0" fill="#7b8560" stroke="#141a0e" stroke-width="0.85" stroke-linejoin="round"/>
<polygon points="540.8,595.9 574.5,603.0 550.5,606.3" fill="#7b8560" stroke="#141a0e" stroke-width="0.85" stroke-linejoin="round"/>
<polygon points="550.5,606.3 574.5,603.0 560.2,616.6" fill="#7b8560" stroke="#141a0e" stroke-width="0.85" stroke-linejoin="round"/>
<polygon points="574.5,603.0 584.3,613.4 560.2,616.6" fill="#7b8560" stroke="#141a0e" stroke-width="0.85" stroke-linejoin="round"/>
<polygon points="560.2,616.6 584.3,613.4 594.0,623.8" fill="#7b8560" stroke="#141a0e" stroke-width="0.85" stroke-linejoin="round"/>
<polygon points="560.2,616.6 594.0,623.8 570.0,627.0" fill="#7b8560" stroke="#141a0e" stroke-width="0.85" stroke-linejoin="round"/>
<polygon points="570.0,627.0 594.0,623.8 579.7,637.3" fill="#7b8560" stroke="#141a0e" stroke-width="0.85" stroke-linejoin="round"/>
<polygon points="594.0,623.8 603.8,634.2 579.7,637.3" fill="#7b8560" stroke="#141a0e" stroke-width="0.85" stroke-linejoin="round"/>
<polygon points="525.6,551.0 549.4,547.5 535.4,561.4" fill="#7b8560" stroke="#141a0e" stroke-width="0.85" stroke-linejoin="round"/>
<polygon points="549.4,547.5 559.2,557.9 535.4,561.4" fill="#7b8560" stroke="#141a0e" stroke-width="0.85" stroke-linejoin="round"/>
<polygon points="535.4,561.4 559.2,557.9 569.0,568.4" fill="#7b8560" stroke="#141a0e" stroke-width="0.85" stroke-linejoin="round"/>
<polygon points="535.4,561.4 569.0,568.4 545.2,571.8" fill="#7b8560" stroke="#141a0e" stroke-width="0.85" stroke-linejoin="round"/>
<polygon points="545.2,571.8 569.0,568.4 555.0,582.2" fill="#7b8560" stroke="#141a0e" stroke-width="0.85" stroke-linejoin="round"/>
<polygon points="569.0,568.4 578.9,578.8 555.0,582.2" fill="#7b8560" stroke="#141a0e" stroke-width="0.85" stroke-linejoin="round"/>
<polygon points="555.0,582.2 578.9,578.8 588.7,589.3" fill="#7b8560" stroke="#141a0e" stroke-width="0.85" stroke-linejoin="round"/>
<polygon points="555.0,582.2 588.7,589.3 564.7,592.6" fill="#7b8560" stroke="#141a0e" stroke-width="0.85" stroke-linejoin="round"/>
<polygon points="564.7,592.6 588.7,589.3 574.5,603.0" fill="#7b8560" stroke="#141a0e" stroke-width="0.85" stroke-linejoin="round"/>
<polygon points="588.7,589.3 598.5,599.7 574.5,603.0" fill="#7b8560" stroke="#141a0e" stroke-width="0.85" stroke-linejoin="round"/>
<polygon points="574.5,603.0 598.5,599.7 608.3,610.2" fill="#7b8560" stroke="#141a0e" stroke-width="0.85" stroke-linejoin="round"/>
<polygon points="574.5,603.0 608.3,610.2 584.3,613.4" fill="#7b8560" stroke="#141a0e" stroke-width="0.85" stroke-linejoin="round"/>
<polygon points="584.3,613.4 608.3,610.2 594.0,623.8" fill="#7b8560" stroke="#141a0e" stroke-width="0.85" stroke-linejoin="round"/>
<polygon points="608.3,610.2 618.1,620.6 594.0,623.8" fill="#7b8560" stroke="#141a0e" stroke-width="0.85" stroke-linejoin="round"/>
<polygon points="594.0,623.8 618.1,620.6 628.0,631.0" fill="#7b8560" stroke="#141a0e" stroke-width="0.85" stroke-linejoin="round"/>
<polygon points="594.0,623.8 628.0,631.0 603.8,634.2" fill="#7b8560" stroke="#141a0e" stroke-width="0.85" stroke-linejoin="round"/>
<polygon points="549.4,547.5 573.2,544.0 583.0,554.5" fill="#7b8560" stroke="#141a0e" stroke-width="0.85" stroke-linejoin="round"/>
<polygon points="549.4,547.5 583.0,554.5 559.2,557.9" fill="#7b8560" stroke="#141a0e" stroke-width="0.85" stroke-linejoin="round"/>
<polygon points="559.2,557.9 583.0,554.5 569.0,568.4" fill="#7b8560" stroke="#141a0e" stroke-width="0.85" stroke-linejoin="round"/>
<polygon points="583.0,554.5 592.9,565.0 569.0,568.4" fill="#7b8560" stroke="#141a0e" stroke-width="0.85" stroke-linejoin="round"/>
<polygon points="569.0,568.4 592.9,565.0 602.8,575.5" fill="#7b8560" stroke="#141a0e" stroke-width="0.85" stroke-linejoin="round"/>
<polygon points="569.0,568.4 602.8,575.5 578.9,578.8" fill="#7b8560" stroke="#141a0e" stroke-width="0.85" stroke-linejoin="round"/>
<polygon points="578.9,578.8 602.8,575.5 588.7,589.3" fill="#7b8560" stroke="#141a0e" stroke-width="0.85" stroke-linejoin="round"/>
<polygon points="602.8,575.5 612.6,586.0 588.7,589.3" fill="#7b8560" stroke="#141a0e" stroke-width="0.85" stroke-linejoin="round"/>
<polygon points="588.7,589.3 612.6,586.0 622.5,596.4" fill="#7b8560" stroke="#141a0e" stroke-width="0.85" stroke-linejoin="round"/>
<polygon points="588.7,589.3 622.5,596.4 598.5,599.7" fill="#7b8560" stroke="#141a0e" stroke-width="0.85" stroke-linejoin="round"/>
<polygon points="598.5,599.7 622.5,596.4 608.3,610.2" fill="#7b8560" stroke="#141a0e" stroke-width="0.85" stroke-linejoin="round"/>
<polygon points="622.5,596.4 632.4,606.9 608.3,610.2" fill="#7b8560" stroke="#141a0e" stroke-width="0.85" stroke-linejoin="round"/>
<polygon points="608.3,610.2 632.4,606.9 642.2,617.4" fill="#7b8560" stroke="#141a0e" stroke-width="0.85" stroke-linejoin="round"/>
<polygon points="608.3,610.2 642.2,617.4 618.1,620.6" fill="#7b8560" stroke="#141a0e" stroke-width="0.85" stroke-linejoin="round"/>
<polygon points="618.1,620.6 642.2,617.4 628.0,631.0" fill="#7b8560" stroke="#141a0e" stroke-width="0.85" stroke-linejoin="round"/>
<polygon points="642.2,617.4 652.1,627.9 628.0,631.0" fill="#7b8560" stroke="#141a0e" stroke-width="0.85" stroke-linejoin="round"/>
<polygon points="573.2,544.0 597.0,540.5 583.0,554.5" fill="#7b8560" stroke="#141a0e" stroke-width="0.85" stroke-linejoin="round"/>
<polygon points="597.0,540.5 606.9,551.0 583.0,554.5" fill="#7b8560" stroke="#141a0e" stroke-width="0.85" stroke-linejoin="round"/>
<polygon points="583.0,554.5 606.9,551.0 616.8,561.6" fill="#7b8560" stroke="#141a0e" stroke-width="0.85" stroke-linejoin="round"/>
<polygon points="583.0,554.5 616.8,561.6 592.9,565.0" fill="#7b8560" stroke="#141a0e" stroke-width="0.85" stroke-linejoin="round"/>
<polygon points="592.9,565.0 616.8,561.6 602.8,575.5" fill="#7b8560" stroke="#141a0e" stroke-width="0.85" stroke-linejoin="round"/>
<polygon points="616.8,561.6 626.7,572.1 602.8,575.5" fill="#7b8560" stroke="#141a0e" stroke-width="0.85" stroke-linejoin="round"/>
<polygon points="602.8,575.5 626.7,572.1 636.6,582.6" fill="#7b8560" stroke="#141a0e" stroke-width="0.85" stroke-linejoin="round"/>
<polygon points="602.8,575.5 636.6,582.6 612.6,586.0" fill="#7b8560" stroke="#141a0e" stroke-width="0.85" stroke-linejoin="round"/>
<polygon points="612.6,586.0 636.6,582.6 622.5,596.4" fill="#7b8560" stroke="#141a0e" stroke-width="0.85" stroke-linejoin="round"/>
<polygon points="636.6,582.6 646.5,593.2 622.5,596.4" fill="#7b8560" stroke="#141a0e" stroke-width="0.85" stroke-linejoin="round"/>
<polygon points="622.5,596.4 646.5,593.2 656.4,603.7" fill="#7b8560" stroke="#141a0e" stroke-width="0.85" stroke-linejoin="round"/>
<polygon points="622.5,596.4 656.4,603.7 632.4,606.9" fill="#7b8560" stroke="#141a0e" stroke-width="0.85" stroke-linejoin="round"/>
<polygon points="632.4,606.9 656.4,603.7 642.2,617.4" fill="#7b8560" stroke="#141a0e" stroke-width="0.85" stroke-linejoin="round"/>
<polygon points="656.4,603.7 666.3,614.2 642.2,617.4" fill="#7b8560" stroke="#141a0e" stroke-width="0.85" stroke-linejoin="round"/>
<polygon points="642.2,617.4 666.3,614.2 676.2,624.8" fill="#7b8560" stroke="#141a0e" stroke-width="0.85" stroke-linejoin="round"/>
<polygon points="642.2,617.4 676.2,624.8 652.1,627.9" fill="#7b8560" stroke="#141a0e" stroke-width="0.85" stroke-linejoin="round"/>
<polygon points="597.0,540.5 620.7,537.0 630.7,547.6" fill="#7b8560" stroke="#141a0e" stroke-width="0.85" stroke-linejoin="round"/>
<polygon points="597.0,540.5 630.7,547.6 606.9,551.0" fill="#7b8560" stroke="#141a0e" stroke-width="0.85" stroke-linejoin="round"/>
<polygon points="606.9,551.0 630.7,547.6 616.8,561.6" fill="#7b8560" stroke="#141a0e" stroke-width="0.85" stroke-linejoin="round"/>
<polygon points="630.7,547.6 640.6,558.2 616.8,561.6" fill="#7b8560" stroke="#141a0e" stroke-width="0.85" stroke-linejoin="round"/>
<polygon points="616.8,561.6 640.6,558.2 650.6,568.7" fill="#7b8560" stroke="#141a0e" stroke-width="0.85" stroke-linejoin="round"/>
<polygon points="616.8,561.6 650.6,568.7 626.7,572.1" fill="#7b8560" stroke="#141a0e" stroke-width="0.85" stroke-linejoin="round"/>
<polygon points="626.7,572.1 650.6,568.7 636.6,582.6" fill="#7b8560" stroke="#141a0e" stroke-width="0.85" stroke-linejoin="round"/>
<polygon points="650.6,568.7 660.5,579.3 636.6,582.6" fill="#7b8560" stroke="#141a0e" stroke-width="0.85" stroke-linejoin="round"/>
<polygon points="636.6,582.6 660.5,579.3 670.5,589.9" fill="#7b8560" stroke="#141a0e" stroke-width="0.85" stroke-linejoin="round"/>
<polygon points="636.6,582.6 670.5,589.9 646.5,593.2" fill="#7b8560" stroke="#141a0e" stroke-width="0.85" stroke-linejoin="round"/>
<polygon points="646.5,593.2 670.5,589.9 656.4,603.7" fill="#7b8560" stroke="#141a0e" stroke-width="0.85" stroke-linejoin="round"/>
<polygon points="670.5,589.9 680.5,600.5 656.4,603.7" fill="#7b8560" stroke="#141a0e" stroke-width="0.85" stroke-linejoin="round"/>
<polygon points="656.4,603.7 680.5,600.5 690.4,611.1" fill="#7b8560" stroke="#141a0e" stroke-width="0.85" stroke-linejoin="round"/>
<polygon points="656.4,603.7 690.4,611.1 666.3,614.2" fill="#7b8560" stroke="#141a0e" stroke-width="0.85" stroke-linejoin="round"/>
<polygon points="666.3,614.2 690.4,611.1 676.2,624.8" fill="#7b8560" stroke="#141a0e" stroke-width="0.85" stroke-linejoin="round"/>
<polygon points="690.4,611.1 700.4,621.6 676.2,624.8" fill="#7b8560" stroke="#141a0e" stroke-width="0.85" stroke-linejoin="round"/>
<polygon points="620.7,537.0 644.5,533.5 630.7,547.6" fill="#7b8560" stroke="#141a0e" stroke-width="0.85" stroke-linejoin="round"/>
<polygon points="644.5,533.5 654.5,544.1 630.7,547.6" fill="#7b8560" stroke="#141a0e" stroke-width="0.85" stroke-linejoin="round"/>
<polygon points="630.7,547.6 654.5,544.1 664.5,554.8" fill="#7b8560" stroke="#141a0e" stroke-width="0.85" stroke-linejoin="round"/>
<polygon points="630.7,547.6 664.5,554.8 640.6,558.2" fill="#7b8560" stroke="#141a0e" stroke-width="0.85" stroke-linejoin="round"/>
<polygon points="640.6,558.2 664.5,554.8 650.6,568.7" fill="#7b8560" stroke="#141a0e" stroke-width="0.85" stroke-linejoin="round"/>
<polygon points="664.5,554.8 674.5,565.4 650.6,568.7" fill="#7b8560" stroke="#141a0e" stroke-width="0.85" stroke-linejoin="round"/>
<polygon points="650.6,568.7 674.5,565.4 684.5,576.0" fill="#7b8560" stroke="#141a0e" stroke-width="0.85" stroke-linejoin="round"/>
<polygon points="650.6,568.7 684.5,576.0 660.5,579.3" fill="#7b8560" stroke="#141a0e" stroke-width="0.85" stroke-linejoin="round"/>
<polygon points="660.5,579.3 684.5,576.0 670.5,589.9" fill="#7b8560" stroke="#141a0e" stroke-width="0.85" stroke-linejoin="round"/>
<polygon points="684.5,576.0 694.5,586.6 670.5,589.9" fill="#7b8560" stroke="#141a0e" stroke-width="0.85" stroke-linejoin="round"/>
<polygon points="670.5,589.9 694.5,586.6 704.5,597.2" fill="#7b8560" stroke="#141a0e" stroke-width="0.85" stroke-linejoin="round"/>
<polygon points="670.5,589.9 704.5,597.2 680.5,600.5" fill="#7b8560" stroke="#141a0e" stroke-width="0.85" stroke-linejoin="round"/>
<polygon points="680.5,600.5 704.5,597.2 690.4,611.1" fill="#7b8560" stroke="#141a0e" stroke-width="0.85" stroke-linejoin="round"/>
<polygon points="704.5,597.2 714.5,607.9 690.4,611.1" fill="#7b8560" stroke="#141a0e" stroke-width="0.85" stroke-linejoin="round"/>
<polygon points="690.4,611.1 714.5,607.9 724.5,618.5" fill="#7b8560" stroke="#141a0e" stroke-width="0.85" stroke-linejoin="round"/>
<polygon points="690.4,611.1 724.5,618.5 700.4,621.6" fill="#7b8560" stroke="#141a0e" stroke-width="0.85" stroke-linejoin="round"/>
<polygon points="644.5,533.5 668.3,530.0 678.3,540.7" fill="#7b8560" stroke="#141a0e" stroke-width="0.85" stroke-linejoin="round"/>
<polygon points="644.5,533.5 678.3,540.7 654.5,544.1" fill="#7b8560" stroke="#141a0e" stroke-width="0.85" stroke-linejoin="round"/>
<polygon points="654.5,544.1 678.3,540.7 664.5,554.8" fill="#7b8560" stroke="#141a0e" stroke-width="0.85" stroke-linejoin="round"/>
<polygon points="678.3,540.7 688.4,551.3 664.5,554.8" fill="#7b8560" stroke="#141a0e" stroke-width="0.85" stroke-linejoin="round"/>
<polygon points="664.5,554.8 688.4,551.3 698.4,562.0" fill="#7b8560" stroke="#141a0e" stroke-width="0.85" stroke-linejoin="round"/>
<polygon points="664.5,554.8 698.4,562.0 674.5,565.4" fill="#7b8560" stroke="#141a0e" stroke-width="0.85" stroke-linejoin="round"/>
<polygon points="674.5,565.4 698.4,562.0 684.5,576.0" fill="#7b8560" stroke="#141a0e" stroke-width="0.85" stroke-linejoin="round"/>
<polygon points="698.4,562.0 708.5,572.7 684.5,576.0" fill="#7b8560" stroke="#141a0e" stroke-width="0.85" stroke-linejoin="round"/>
<polygon points="684.5,576.0 708.5,572.7 718.5,583.4" fill="#7b8560" stroke="#141a0e" stroke-width="0.85" stroke-linejoin="round"/>
<polygon points="684.5,576.0 718.5,583.4 694.5,586.6" fill="#7b8560" stroke="#141a0e" stroke-width="0.85" stroke-linejoin="round"/>
<polygon points="694.5,586.6 718.5,583.4 704.5,597.2" fill="#7b8560" stroke="#141a0e" stroke-width="0.85" stroke-linejoin="round"/>
<polygon points="718.5,583.4 728.5,594.0 704.5,597.2" fill="#7b8560" stroke="#141a0e" stroke-width="0.85" stroke-linejoin="round"/>
<polygon points="704.5,597.2 728.5,594.0 738.6,604.7" fill="#7b8560" stroke="#141a0e" stroke-width="0.85" stroke-linejoin="round"/>
<polygon points="704.5,597.2 738.6,604.7 714.5,607.9" fill="#7b8560" stroke="#141a0e" stroke-width="0.85" stroke-linejoin="round"/>
<polygon points="714.5,607.9 738.6,604.7 724.5,618.5" fill="#7b8560" stroke="#141a0e" stroke-width="0.85" stroke-linejoin="round"/>
<polygon points="738.6,604.7 748.6,615.4 724.5,618.5" fill="#7b8560" stroke="#141a0e" stroke-width="0.85" stroke-linejoin="round"/>
<polygon points="668.3,530.0 692.0,526.5 678.3,540.7" fill="#7b8560" stroke="#141a0e" stroke-width="0.85" stroke-linejoin="round"/>
<polygon points="692.0,526.5 702.1,537.2 678.3,540.7" fill="#7b8560" stroke="#141a0e" stroke-width="0.85" stroke-linejoin="round"/>
<polygon points="678.3,540.7 702.1,537.2 712.2,547.9" fill="#7b8560" stroke="#141a0e" stroke-width="0.85" stroke-linejoin="round"/>
<polygon points="678.3,540.7 712.2,547.9 688.4,551.3" fill="#7b8560" stroke="#141a0e" stroke-width="0.85" stroke-linejoin="round"/>
<polygon points="688.4,551.3 712.2,547.9 698.4,562.0" fill="#7b8560" stroke="#141a0e" stroke-width="0.85" stroke-linejoin="round"/>
<polygon points="712.2,547.9 722.3,558.6 698.4,562.0" fill="#7b8560" stroke="#141a0e" stroke-width="0.85" stroke-linejoin="round"/>
<polygon points="698.4,562.0 722.3,558.6 732.4,569.4" fill="#7b8560" stroke="#141a0e" stroke-width="0.85" stroke-linejoin="round"/>
<polygon points="698.4,562.0 732.4,569.4 708.5,572.7" fill="#7b8560" stroke="#141a0e" stroke-width="0.85" stroke-linejoin="round"/>
<polygon points="708.5,572.7 732.4,569.4 718.5,583.4" fill="#7b8560" stroke="#141a0e" stroke-width="0.85" stroke-linejoin="round"/>
<polygon points="732.4,569.4 742.5,580.1 718.5,583.4" fill="#7b8560" stroke="#141a0e" stroke-width="0.85" stroke-linejoin="round"/>
<polygon points="718.5,583.4 742.5,580.1 752.6,590.8" fill="#7b8560" stroke="#141a0e" stroke-width="0.85" stroke-linejoin="round"/>
<polygon points="718.5,583.4 752.6,590.8 728.5,594.0" fill="#7b8560" stroke="#141a0e" stroke-width="0.85" stroke-linejoin="round"/>
<polygon points="728.5,594.0 752.6,590.8 738.6,604.7" fill="#7b8560" stroke="#141a0e" stroke-width="0.85" stroke-linejoin="round"/>
<polygon points="752.6,590.8 762.7,601.5 738.6,604.7" fill="#7b8560" stroke="#141a0e" stroke-width="0.85" stroke-linejoin="round"/>
<polygon points="738.6,604.7 762.7,601.5 772.8,612.2" fill="#7b8560" stroke="#141a0e" stroke-width="0.85" stroke-linejoin="round"/>
<polygon points="738.6,604.7 772.8,612.2 748.6,615.4" fill="#7b8560" stroke="#141a0e" stroke-width="0.85" stroke-linejoin="round"/>
<polygon points="692.0,526.5 715.8,523.0 726.0,533.8" fill="#7b8560" stroke="#141a0e" stroke-width="0.85" stroke-linejoin="round"/>
<polygon points="692.0,526.5 726.0,533.8 702.1,537.2" fill="#7b8560" stroke="#141a0e" stroke-width="0.85" stroke-linejoin="round"/>
<polygon points="702.1,537.2 726.0,533.8 712.2,547.9" fill="#7b8560" stroke="#141a0e" stroke-width="0.85" stroke-linejoin="round"/>
<polygon points="726.0,533.8 736.1,544.5 712.2,547.9" fill="#7b8560" stroke="#141a0e" stroke-width="0.85" stroke-linejoin="round"/>
<polygon points="712.2,547.9 736.1,544.5 746.2,555.3" fill="#7b8560" stroke="#141a0e" stroke-width="0.85" stroke-linejoin="round"/>
<polygon points="712.2,547.9 746.2,555.3 722.3,558.6" fill="#7b8560" stroke="#141a0e" stroke-width="0.85" stroke-linejoin="round"/>
<polygon points="722.3,558.6 746.2,555.3 732.4,569.4" fill="#7b8560" stroke="#141a0e" stroke-width="0.85" stroke-linejoin="round"/>
<polygon points="746.2,555.3 756.4,566.0 732.4,569.4" fill="#7b8560" stroke="#141a0e" stroke-width="0.85" stroke-linejoin="round"/>
<polygon points="732.4,569.4 756.4,566.0 766.5,576.8" fill="#7b8560" stroke="#141a0e" stroke-width="0.85" stroke-linejoin="round"/>
<polygon points="732.4,569.4 766.5,576.8 742.5,580.1" fill="#7b8560" stroke="#141a0e" stroke-width="0.85" stroke-linejoin="round"/>
<polygon points="742.5,580.1 766.5,576.8 752.6,590.8" fill="#7b8560" stroke="#141a0e" stroke-width="0.85" stroke-linejoin="round"/>
<polygon points="766.5,576.8 776.6,587.6 752.6,590.8" fill="#7b8560" stroke="#141a0e" stroke-width="0.85" stroke-linejoin="round"/>
<polygon points="752.6,590.8 776.6,587.6 786.8,598.3" fill="#7b8560" stroke="#141a0e" stroke-width="0.85" stroke-linejoin="round"/>
<polygon points="752.6,590.8 786.8,598.3 762.7,601.5" fill="#7b8560" stroke="#141a0e" stroke-width="0.85" stroke-linejoin="round"/>
<polygon points="762.7,601.5 786.8,598.3 772.8,612.2" fill="#7b8560" stroke="#141a0e" stroke-width="0.85" stroke-linejoin="round"/>
<polygon points="786.8,598.3 796.9,609.1 772.8,612.2" fill="#7b8560" stroke="#141a0e" stroke-width="0.85" stroke-linejoin="round"/>
<polygon points="715.8,523.0 739.6,519.5 726.0,533.8" fill="#7b8560" stroke="#141a0e" stroke-width="0.85" stroke-linejoin="round"/>
<polygon points="739.6,519.5 749.8,530.3 726.0,533.8" fill="#7b8560" stroke="#141a0e" stroke-width="0.85" stroke-linejoin="round"/>
<polygon points="726.0,533.8 749.8,530.3 760.0,541.1" fill="#7b8560" stroke="#141a0e" stroke-width="0.85" stroke-linejoin="round"/>
<polygon points="726.0,533.8 760.0,541.1 736.1,544.5" fill="#7b8560" stroke="#141a0e" stroke-width="0.85" stroke-linejoin="round"/>
<polygon points="736.1,544.5 760.0,541.1 746.2,555.3" fill="#7b8560" stroke="#141a0e" stroke-width="0.85" stroke-linejoin="round"/>
<polygon points="760.0,541.1 770.1,551.9 746.2,555.3" fill="#7b8560" stroke="#141a0e" stroke-width="0.85" stroke-linejoin="round"/>
<polygon points="746.2,555.3 770.1,551.9 780.3,562.7" fill="#7b8560" stroke="#141a0e" stroke-width="0.85" stroke-linejoin="round"/>
<polygon points="746.2,555.3 780.3,562.7 756.4,566.0" fill="#7b8560" stroke="#141a0e" stroke-width="0.85" stroke-linejoin="round"/>
<polygon points="756.4,566.0 780.3,562.7 766.5,576.8" fill="#7b8560" stroke="#141a0e" stroke-width="0.85" stroke-linejoin="round"/>
<polygon points="780.3,562.7 790.5,573.5 766.5,576.8" fill="#7b8560" stroke="#141a0e" stroke-width="0.85" stroke-linejoin="round"/>
<polygon points="766.5,576.8 790.5,573.5 800.7,584.3" fill="#7b8560" stroke="#141a0e" stroke-width="0.85" stroke-linejoin="round"/>
<polygon points="766.5,576.8 800.7,584.3 776.6,587.6" fill="#7b8560" stroke="#141a0e" stroke-width="0.85" stroke-linejoin="round"/>
<polygon points="776.6,587.6 800.7,584.3 786.8,598.3" fill="#7b8560" stroke="#141a0e" stroke-width="0.85" stroke-linejoin="round"/>
<polygon points="800.7,584.3 810.9,595.1 786.8,598.3" fill="#7b8560" stroke="#141a0e" stroke-width="0.85" stroke-linejoin="round"/>
<polygon points="786.8,598.3 810.9,595.1 821.0,606.0" fill="#7b8560" stroke="#141a0e" stroke-width="0.85" stroke-linejoin="round"/>
<polygon points="786.8,598.3 821.0,606.0 796.9,609.1" fill="#7b8560" stroke="#141a0e" stroke-width="0.85" stroke-linejoin="round"/>
<polygon points="739.6,519.5 763.4,516.0 773.6,526.9" fill="#7b8560" stroke="#141a0e" stroke-width="0.85" stroke-linejoin="round"/>
<polygon points="739.6,519.5 773.6,526.9 749.8,530.3" fill="#7b8560" stroke="#141a0e" stroke-width="0.85" stroke-linejoin="round"/>
<polygon points="749.8,530.3 773.6,526.9 760.0,541.1" fill="#7b8560" stroke="#141a0e" stroke-width="0.85" stroke-linejoin="round"/>
<polygon points="773.6,526.9 783.8,537.7 760.0,541.1" fill="#7b8560" stroke="#141a0e" stroke-width="0.85" stroke-linejoin="round"/>
<polygon points="760.0,541.1 783.8,537.7 794.0,548.6" fill="#7b8560" stroke="#141a0e" stroke-width="0.85" stroke-linejoin="round"/>
<polygon points="760.0,541.1 794.0,548.6 770.1,551.9" fill="#7b8560" stroke="#141a0e" stroke-width="0.85" stroke-linejoin="round"/>
<polygon points="770.1,551.9 794.0,548.6 780.3,562.7" fill="#7b8560" stroke="#141a0e" stroke-width="0.85" stroke-linejoin="round"/>
<polygon points="794.0,548.6 804.3,559.4 780.3,562.7" fill="#7b8560" stroke="#141a0e" stroke-width="0.85" stroke-linejoin="round"/>
<polygon points="780.3,562.7 804.3,559.4 814.5,570.3" fill="#7b8560" stroke="#141a0e" stroke-width="0.85" stroke-linejoin="round"/>
<polygon points="780.3,562.7 814.5,570.3 790.5,573.5" fill="#7b8560" stroke="#141a0e" stroke-width="0.85" stroke-linejoin="round"/>
<polygon points="790.5,573.5 814.5,570.3 800.7,584.3" fill="#7b8560" stroke="#141a0e" stroke-width="0.85" stroke-linejoin="round"/>
<polygon points="814.5,570.3 824.7,581.1 800.7,584.3" fill="#7b8560" stroke="#141a0e" stroke-width="0.85" stroke-linejoin="round"/>
<polygon points="800.7,584.3 824.7,581.1 835.0,592.0" fill="#7b8560" stroke="#141a0e" stroke-width="0.85" stroke-linejoin="round"/>
<polygon points="800.7,584.3 835.0,592.0 810.9,595.1" fill="#7b8560" stroke="#141a0e" stroke-width="0.85" stroke-linejoin="round"/>
<polygon points="810.9,595.1 835.0,592.0 821.0,606.0" fill="#7b8560" stroke="#141a0e" stroke-width="0.85" stroke-linejoin="round"/>
<polygon points="835.0,592.0 845.2,602.8 821.0,606.0" fill="#7b8560" stroke="#141a0e" stroke-width="0.85" stroke-linejoin="round"/>
<polygon points="763.4,516.0 787.1,512.5 773.6,526.9" fill="#7b8560" stroke="#141a0e" stroke-width="0.85" stroke-linejoin="round"/>
<polygon points="787.1,512.5 797.4,523.4 773.6,526.9" fill="#7b8560" stroke="#141a0e" stroke-width="0.85" stroke-linejoin="round"/>
<polygon points="773.6,526.9 797.4,523.4 807.7,534.3" fill="#7b8560" stroke="#141a0e" stroke-width="0.85" stroke-linejoin="round"/>
<polygon points="773.6,526.9 807.7,534.3 783.8,537.7" fill="#7b8560" stroke="#141a0e" stroke-width="0.85" stroke-linejoin="round"/>
<polygon points="783.8,537.7 807.7,534.3 794.0,548.6" fill="#7b8560" stroke="#141a0e" stroke-width="0.85" stroke-linejoin="round"/>
<polygon points="807.7,534.3 818.0,545.2 794.0,548.6" fill="#7b8560" stroke="#141a0e" stroke-width="0.85" stroke-linejoin="round"/>
<polygon points="794.0,548.6 818.0,545.2 828.2,556.1" fill="#7b8560" stroke="#141a0e" stroke-width="0.85" stroke-linejoin="round"/>
<polygon points="794.0,548.6 828.2,556.1 804.3,559.4" fill="#7b8560" stroke="#141a0e" stroke-width="0.85" stroke-linejoin="round"/>
<polygon points="804.3,559.4 828.2,556.1 814.5,570.3" fill="#7b8560" stroke="#141a0e" stroke-width="0.85" stroke-linejoin="round"/>
<polygon points="828.2,556.1 838.5,567.0 814.5,570.3" fill="#7b8560" stroke="#141a0e" stroke-width="0.85" stroke-linejoin="round"/>
<polygon points="814.5,570.3 838.5,567.0 848.8,577.9" fill="#7b8560" stroke="#141a0e" stroke-width="0.85" stroke-linejoin="round"/>
<polygon points="814.5,570.3 848.8,577.9 824.7,581.1" fill="#7b8560" stroke="#141a0e" stroke-width="0.85" stroke-linejoin="round"/>
<polygon points="824.7,581.1 848.8,577.9 835.0,592.0" fill="#7b8560" stroke="#141a0e" stroke-width="0.85" stroke-linejoin="round"/>
<polygon points="848.8,577.9 859.0,588.8 835.0,592.0" fill="#7b8560" stroke="#141a0e" stroke-width="0.85" stroke-linejoin="round"/>
<polygon points="835.0,592.0 859.0,588.8 869.3,599.7" fill="#7b8560" stroke="#141a0e" stroke-width="0.85" stroke-linejoin="round"/>
<polygon points="835.0,592.0 869.3,599.7 845.2,602.8" fill="#7b8560" stroke="#141a0e" stroke-width="0.85" stroke-linejoin="round"/>
<polygon points="787.1,512.5 810.9,509.0 821.2,519.9" fill="#7b8560" stroke="#141a0e" stroke-width="0.85" stroke-linejoin="round"/>
<polygon points="787.1,512.5 821.2,519.9 797.4,523.4" fill="#7b8560" stroke="#141a0e" stroke-width="0.85" stroke-linejoin="round"/>
<polygon points="797.4,523.4 821.2,519.9 807.7,534.3" fill="#7b8560" stroke="#141a0e" stroke-width="0.85" stroke-linejoin="round"/>
<polygon points="821.2,519.9 831.5,530.9 807.7,534.3" fill="#7b8560" stroke="#141a0e" stroke-width="0.85" stroke-linejoin="round"/>
<polygon points="807.7,534.3 831.5,530.9 841.9,541.8" fill="#7b8560" stroke="#141a0e" stroke-width="0.85" stroke-linejoin="round"/>
<polygon points="807.7,534.3 841.9,541.8 818.0,545.2" fill="#7b8560" stroke="#141a0e" stroke-width="0.85" stroke-linejoin="round"/>
<polygon points="818.0,545.2 841.9,541.8 828.2,556.1" fill="#7b8560" stroke="#141a0e" stroke-width="0.85" stroke-linejoin="round"/>
<polygon points="841.9,541.8 852.2,552.8 828.2,556.1" fill="#7b8560" stroke="#141a0e" stroke-width="0.85" stroke-linejoin="round"/>
<polygon points="828.2,556.1 852.2,552.8 862.5,563.7" fill="#7b8560" stroke="#141a0e" stroke-width="0.85" stroke-linejoin="round"/>
<polygon points="828.2,556.1 862.5,563.7 838.5,567.0" fill="#7b8560" stroke="#141a0e" stroke-width="0.85" stroke-linejoin="round"/>
<polygon points="838.5,567.0 862.5,563.7 848.8,577.9" fill="#7b8560" stroke="#141a0e" stroke-width="0.85" stroke-linejoin="round"/>
<polygon points="862.5,563.7 872.8,574.7 848.8,577.9" fill="#7b8560" stroke="#141a0e" stroke-width="0.85" stroke-linejoin="round"/>
<polygon points="848.8,577.9 872.8,574.7 883.1,585.6" fill="#7b8560" stroke="#141a0e" stroke-width="0.85" stroke-linejoin="round"/>
<polygon points="848.8,577.9 883.1,585.6 859.0,588.8" fill="#7b8560" stroke="#141a0e" stroke-width="0.85" stroke-linejoin="round"/>
<polygon points="859.0,588.8 883.1,585.6 869.3,599.7" fill="#7b8560" stroke="#141a0e" stroke-width="0.85" stroke-linejoin="round"/>
<polygon points="883.1,585.6 893.5,596.5 869.3,599.7" fill="#7b8560" stroke="#141a0e" stroke-width="0.85" stroke-linejoin="round"/>
<polygon points="810.9,509.0 834.7,505.5 821.2,519.9" fill="#7b8560" stroke="#141a0e" stroke-width="0.85" stroke-linejoin="round"/>
<polygon points="834.7,505.5 845.0,516.5 821.2,519.9" fill="#7b8560" stroke="#141a0e" stroke-width="0.85" stroke-linejoin="round"/>
<polygon points="821.2,519.9 845.0,516.5 855.4,527.5" fill="#7b8560" stroke="#141a0e" stroke-width="0.85" stroke-linejoin="round"/>
<polygon points="821.2,519.9 855.4,527.5 831.5,530.9" fill="#7b8560" stroke="#141a0e" stroke-width="0.85" stroke-linejoin="round"/>
<polygon points="831.5,530.9 855.4,527.5 841.9,541.8" fill="#7b8560" stroke="#141a0e" stroke-width="0.85" stroke-linejoin="round"/>
<polygon points="855.4,527.5 865.8,538.5 841.9,541.8" fill="#7b8560" stroke="#141a0e" stroke-width="0.85" stroke-linejoin="round"/>
<polygon points="841.9,541.8 865.8,538.5 876.1,549.5" fill="#7b8560" stroke="#141a0e" stroke-width="0.85" stroke-linejoin="round"/>
<polygon points="841.9,541.8 876.1,549.5 852.2,552.8" fill="#7b8560" stroke="#141a0e" stroke-width="0.85" stroke-linejoin="round"/>
<polygon points="852.2,552.8 876.1,549.5 862.5,563.7" fill="#7b8560" stroke="#141a0e" stroke-width="0.85" stroke-linejoin="round"/>
<polygon points="876.1,549.5 886.5,560.4 862.5,563.7" fill="#7b8560" stroke="#141a0e" stroke-width="0.85" stroke-linejoin="round"/>
<polygon points="862.5,563.7 886.5,560.4 896.9,571.4" fill="#7b8560" stroke="#141a0e" stroke-width="0.85" stroke-linejoin="round"/>
<polygon points="862.5,563.7 896.9,571.4 872.8,574.7" fill="#7b8560" stroke="#141a0e" stroke-width="0.85" stroke-linejoin="round"/>
<polygon points="872.8,574.7 896.9,571.4 883.1,585.6" fill="#7b8560" stroke="#141a0e" stroke-width="0.85" stroke-linejoin="round"/>
<polygon points="896.9,571.4 907.2,582.4 883.1,585.6" fill="#7b8560" stroke="#141a0e" stroke-width="0.85" stroke-linejoin="round"/>
<polygon points="883.1,585.6 907.2,582.4 917.6,593.4" fill="#7b8560" stroke="#141a0e" stroke-width="0.85" stroke-linejoin="round"/>
<polygon points="883.1,585.6 917.6,593.4 893.5,596.5" fill="#7b8560" stroke="#141a0e" stroke-width="0.85" stroke-linejoin="round"/>
<polygon points="834.7,505.5 858.5,502.0 868.9,513.0" fill="#7b8560" stroke="#141a0e" stroke-width="0.85" stroke-linejoin="round"/>
<polygon points="834.7,505.5 868.9,513.0 845.0,516.5" fill="#7b8560" stroke="#141a0e" stroke-width="0.85" stroke-linejoin="round"/>
<polygon points="845.0,516.5 868.9,513.0 855.4,527.5" fill="#7b8560" stroke="#141a0e" stroke-width="0.85" stroke-linejoin="round"/>
<polygon points="868.9,513.0 879.3,524.1 855.4,527.5" fill="#7b8560" stroke="#141a0e" stroke-width="0.85" stroke-linejoin="round"/>
<polygon points="855.4,527.5 879.3,524.1 889.7,535.1" fill="#7b8560" stroke="#141a0e" stroke-width="0.85" stroke-linejoin="round"/>
<polygon points="855.4,527.5 889.7,535.1 865.8,538.5" fill="#7b8560" stroke="#141a0e" stroke-width="0.85" stroke-linejoin="round"/>
<polygon points="865.8,538.5 889.7,535.1 876.1,549.5" fill="#7b8560" stroke="#141a0e" stroke-width="0.85" stroke-linejoin="round"/>
<polygon points="889.7,535.1 900.1,546.1 876.1,549.5" fill="#7b8560" stroke="#141a0e" stroke-width="0.85" stroke-linejoin="round"/>
<polygon points="876.1,549.5 900.1,546.1 910.5,557.2" fill="#7b8560" stroke="#141a0e" stroke-width="0.85" stroke-linejoin="round"/>
<polygon points="876.1,549.5 910.5,557.2 886.5,560.4" fill="#7b8560" stroke="#141a0e" stroke-width="0.85" stroke-linejoin="round"/>
<polygon points="886.5,560.4 910.5,557.2 896.9,571.4" fill="#7b8560" stroke="#141a0e" stroke-width="0.85" stroke-linejoin="round"/>
<polygon points="910.5,557.2 920.9,568.2 896.9,571.4" fill="#7b8560" stroke="#141a0e" stroke-width="0.85" stroke-linejoin="round"/>
<polygon points="896.9,571.4 920.9,568.2 931.3,579.2" fill="#7b8560" stroke="#141a0e" stroke-width="0.85" stroke-linejoin="round"/>
<polygon points="896.9,571.4 931.3,579.2 907.2,582.4" fill="#7b8560" stroke="#141a0e" stroke-width="0.85" stroke-linejoin="round"/>
<polygon points="907.2,582.4 931.3,579.2 917.6,593.4" fill="#7b8560" stroke="#141a0e" stroke-width="0.85" stroke-linejoin="round"/>
<polygon points="931.3,579.2 941.7,590.3 917.6,593.4" fill="#7b8560" stroke="#141a0e" stroke-width="0.85" stroke-linejoin="round"/>
<polygon points="858.5,502.0 882.2,498.5 868.9,513.0" fill="#7b8560" stroke="#141a0e" stroke-width="0.85" stroke-linejoin="round"/>
<polygon points="882.2,498.5 892.7,509.6 868.9,513.0" fill="#7b8560" stroke="#141a0e" stroke-width="0.85" stroke-linejoin="round"/>
<polygon points="868.9,513.0 892.7,509.6 903.1,520.7" fill="#7b8560" stroke="#141a0e" stroke-width="0.85" stroke-linejoin="round"/>
<polygon points="868.9,513.0 903.1,520.7 879.3,524.1" fill="#7b8560" stroke="#141a0e" stroke-width="0.85" stroke-linejoin="round"/>
<polygon points="879.3,524.1 903.1,520.7 889.7,535.1" fill="#7b8560" stroke="#141a0e" stroke-width="0.85" stroke-linejoin="round"/>
<polygon points="903.1,520.7 913.6,531.7 889.7,535.1" fill="#7b8560" stroke="#141a0e" stroke-width="0.85" stroke-linejoin="round"/>
<polygon points="889.7,535.1 913.6,531.7 924.0,542.8" fill="#7b8560" stroke="#141a0e" stroke-width="0.85" stroke-linejoin="round"/>
<polygon points="889.7,535.1 924.0,542.8 900.1,546.1" fill="#7b8560" stroke="#141a0e" stroke-width="0.85" stroke-linejoin="round"/>
<polygon points="900.1,546.1 924.0,542.8 910.5,557.2" fill="#7b8560" stroke="#141a0e" stroke-width="0.85" stroke-linejoin="round"/>
<polygon points="924.0,542.8 934.5,553.9 910.5,557.2" fill="#7b8560" stroke="#141a0e" stroke-width="0.85" stroke-linejoin="round"/>
<polygon points="910.5,557.2 934.5,553.9 945.0,565.0" fill="#7b8560" stroke="#141a0e" stroke-width="0.85" stroke-linejoin="round"/>
<polygon points="910.5,557.2 945.0,565.0 920.9,568.2" fill="#7b8560" stroke="#141a0e" stroke-width="0.85" stroke-linejoin="round"/>
<polygon points="920.9,568.2 945.0,565.0 931.3,579.2" fill="#7b8560" stroke="#141a0e" stroke-width="0.85" stroke-linejoin="round"/>
<polygon points="945.0,565.0 955.4,576.1 931.3,579.2" fill="#7b8560" stroke="#141a0e" stroke-width="0.85" stroke-linejoin="round"/>
<polygon points="931.3,579.2 955.4,576.1 965.9,587.1" fill="#7b8560" stroke="#141a0e" stroke-width="0.85" stroke-linejoin="round"/>
<polygon points="931.3,579.2 965.9,587.1 941.7,590.3" fill="#7b8560" stroke="#141a0e" stroke-width="0.85" stroke-linejoin="round"/>
<polygon points="882.2,498.5 906.0,495.0 916.5,506.1" fill="#7b8560" stroke="#141a0e" stroke-width="0.85" stroke-linejoin="round"/>
<polygon points="882.2,498.5 916.5,506.1 892.7,509.6" fill="#7b8560" stroke="#141a0e" stroke-width="0.85" stroke-linejoin="round"/>
<polygon points="892.7,509.6 916.5,506.1 903.1,520.7" fill="#7b8560" stroke="#141a0e" stroke-width="0.85" stroke-linejoin="round"/>
<polygon points="916.5,506.1 927.0,517.2 903.1,520.7" fill="#7b8560" stroke="#141a0e" stroke-width="0.85" stroke-linejoin="round"/>
<polygon points="903.1,520.7 927.0,517.2 937.5,528.4" fill="#7b8560" stroke="#141a0e" stroke-width="0.85" stroke-linejoin="round"/>
<polygon points="903.1,520.7 937.5,528.4 913.6,531.7" fill="#7b8560" stroke="#141a0e" stroke-width="0.85" stroke-linejoin="round"/>
<polygon points="913.6,531.7 937.5,528.4 924.0,542.8" fill="#7b8560" stroke="#141a0e" stroke-width="0.85" stroke-linejoin="round"/>
<polygon points="937.5,528.4 948.0,539.5 924.0,542.8" fill="#7b8560" stroke="#141a0e" stroke-width="0.85" stroke-linejoin="round"/>
<polygon points="924.0,542.8 948.0,539.5 958.5,550.6" fill="#7b8560" stroke="#141a0e" stroke-width="0.85" stroke-linejoin="round"/>
<polygon points="924.0,542.8 958.5,550.6 934.5,553.9" fill="#7b8560" stroke="#141a0e" stroke-width="0.85" stroke-linejoin="round"/>
<polygon points="934.5,553.9 958.5,550.6 945.0,565.0" fill="#7b8560" stroke="#141a0e" stroke-width="0.85" stroke-linejoin="round"/>
<polygon points="958.5,550.6 969.0,561.8 945.0,565.0" fill="#7b8560" stroke="#141a0e" stroke-width="0.85" stroke-linejoin="round"/>
<polygon points="945.0,565.0 969.0,561.8 979.5,572.9" fill="#7b8560" stroke="#141a0e" stroke-width="0.85" stroke-linejoin="round"/>
<polygon points="945.0,565.0 979.5,572.9 955.4,576.1" fill="#7b8560" stroke="#141a0e" stroke-width="0.85" stroke-linejoin="round"/>
<polygon points="955.4,576.1 979.5,572.9 965.9,587.1" fill="#7b8560" stroke="#141a0e" stroke-width="0.85" stroke-linejoin="round"/>
<polygon points="979.5,572.9 990.0,584.0 965.9,587.1" fill="#7b8560" stroke="#141a0e" stroke-width="0.85" stroke-linejoin="round"/>
<g clip-path="url(#plateclip)" fill="none" stroke="#141a0e"><ellipse cx="527" cy="601" rx="7" ry="2.2" transform="rotate(-8 527 601)" stroke-width="0.8" opacity="0.96"/><ellipse cx="527" cy="601" rx="15" ry="4.8" transform="rotate(-8 527 601)" stroke-width="0.8" opacity="0.93"/><ellipse cx="527" cy="601" rx="23" ry="7.4" transform="rotate(-8 527 601)" stroke-width="0.8" opacity="0.89"/><ellipse cx="527" cy="601" rx="31" ry="9.9" transform="rotate(-8 527 601)" stroke-width="0.8" opacity="0.84"/><ellipse cx="527" cy="601" rx="39" ry="12.5" transform="rotate(-8 527 601)" stroke-width="0.8" opacity="0.80"/><ellipse cx="527" cy="601" rx="47" ry="15.0" transform="rotate(-8 527 601)" stroke-width="0.8" opacity="0.77"/><ellipse cx="527" cy="601" rx="55" ry="17.6" transform="rotate(-8 527 601)" stroke-width="0.8" opacity="0.72"/><ellipse cx="527" cy="601" rx="63" ry="20.2" transform="rotate(-8 527 601)" stroke-width="0.8" opacity="0.69"/><ellipse cx="527" cy="601" rx="71" ry="22.7" transform="rotate(-8 527 601)" stroke-width="0.8" opacity="0.65"/><ellipse cx="527" cy="601" rx="79" ry="25.3" transform="rotate(-8 527 601)" stroke-width="0.8" opacity="0.60"/><ellipse cx="527" cy="601" rx="87" ry="27.8" transform="rotate(-8 527 601)" stroke-width="0.8" opacity="0.56"/><ellipse cx="527" cy="601" rx="95" ry="30.4" transform="rotate(-8 527 601)" stroke-width="0.8" opacity="0.53"/><ellipse cx="527" cy="601" rx="103" ry="33.0" transform="rotate(-8 527 601)" stroke-width="0.8" opacity="0.48"/><ellipse cx="527" cy="601" rx="111" ry="35.5" transform="rotate(-8 527 601)" stroke-width="0.8" opacity="0.44"/><ellipse cx="527" cy="601" rx="119" ry="38.1" transform="rotate(-8 527 601)" stroke-width="0.8" opacity="0.41"/><ellipse cx="527" cy="601" rx="127" ry="40.6" transform="rotate(-8 527 601)" stroke-width="0.8" opacity="0.36"/><ellipse cx="527" cy="601" rx="135" ry="43.2" transform="rotate(-8 527 601)" stroke-width="0.8" opacity="0.32"/><ellipse cx="527" cy="601" rx="143" ry="45.8" transform="rotate(-8 527 601)" stroke-width="0.8" opacity="0.29"/><ellipse cx="527" cy="601" rx="151" ry="48.3" transform="rotate(-8 527 601)" stroke-width="0.8" opacity="0.24"/><ellipse cx="527" cy="601" rx="159" ry="50.9" transform="rotate(-8 527 601)" stroke-width="0.8" opacity="0.20"/><ellipse cx="527" cy="601" rx="167" ry="53.4" transform="rotate(-8 527 601)" stroke-width="0.8" opacity="0.17"/><ellipse cx="527" cy="601" rx="175" ry="56.0" transform="rotate(-8 527 601)" stroke-width="0.8" opacity="0.12"/><ellipse cx="527" cy="601" rx="183" ry="58.6" transform="rotate(-8 527 601)" stroke-width="0.8" opacity="0.08"/><line x1="527" y1="601" x2="696.8" y2="603.8" stroke-width="0.7" opacity="0.5"/><line x1="527" y1="601" x2="692.6" y2="613.2" stroke-width="0.7" opacity="0.5"/><line x1="527" y1="601" x2="683.5" y2="622.3" stroke-width="0.7" opacity="0.5"/><line x1="527" y1="601" x2="669.6" y2="630.6" stroke-width="0.7" opacity="0.5"/><line x1="527" y1="601" x2="651.3" y2="638.1" stroke-width="0.7" opacity="0.5"/><line x1="527" y1="601" x2="629.3" y2="644.4" stroke-width="0.7" opacity="0.5"/><line x1="527" y1="601" x2="604.2" y2="649.5" stroke-width="0.7" opacity="0.5"/><line x1="527" y1="601" x2="576.7" y2="653.0" stroke-width="0.7" opacity="0.5"/><line x1="527" y1="601" x2="547.7" y2="655.0" stroke-width="0.7" opacity="0.5"/><line x1="527" y1="601" x2="518.1" y2="655.3" stroke-width="0.7" opacity="0.5"/><line x1="527" y1="601" x2="488.8" y2="654.0" stroke-width="0.7" opacity="0.5"/><line x1="527" y1="601" x2="460.6" y2="651.1" stroke-width="0.7" opacity="0.5"/><line x1="527" y1="601" x2="434.4" y2="646.6" stroke-width="0.7" opacity="0.5"/><line x1="527" y1="601" x2="411.1" y2="640.8" stroke-width="0.7" opacity="0.5"/><line x1="527" y1="601" x2="391.2" y2="633.7" stroke-width="0.7" opacity="0.5"/><line x1="527" y1="601" x2="375.5" y2="625.7" stroke-width="0.7" opacity="0.5"/><line x1="527" y1="601" x2="364.4" y2="616.9" stroke-width="0.7" opacity="0.5"/><line x1="527" y1="601" x2="358.3" y2="607.6" stroke-width="0.7" opacity="0.5"/><line x1="527" y1="601" x2="357.2" y2="598.2" stroke-width="0.7" opacity="0.5"/><line x1="527" y1="601" x2="361.4" y2="588.8" stroke-width="0.7" opacity="0.5"/><line x1="527" y1="601" x2="370.5" y2="579.7" stroke-width="0.7" opacity="0.5"/><line x1="527" y1="601" x2="384.4" y2="571.4" stroke-width="0.7" opacity="0.5"/><line x1="527" y1="601" x2="402.7" y2="563.9" stroke-width="0.7" opacity="0.5"/><line x1="527" y1="601" x2="424.7" y2="557.6" stroke-width="0.7" opacity="0.5"/><line x1="527" y1="601" x2="449.8" y2="552.5" stroke-width="0.7" opacity="0.5"/><line x1="527" y1="601" x2="477.3" y2="549.0" stroke-width="0.7" opacity="0.5"/><line x1="527" y1="601" x2="506.3" y2="547.0" stroke-width="0.7" opacity="0.5"/><line x1="527" y1="601" x2="535.9" y2="546.7" stroke-width="0.7" opacity="0.5"/><line x1="527" y1="601" x2="565.2" y2="548.0" stroke-width="0.7" opacity="0.5"/><line x1="527" y1="601" x2="593.4" y2="550.9" stroke-width="0.7" opacity="0.5"/><line x1="527" y1="601" x2="619.6" y2="555.4" stroke-width="0.7" opacity="0.5"/><line x1="527" y1="601" x2="642.9" y2="561.2" stroke-width="0.7" opacity="0.5"/><line x1="527" y1="601" x2="662.8" y2="568.3" stroke-width="0.7" opacity="0.5"/><line x1="527" y1="601" x2="678.5" y2="576.3" stroke-width="0.7" opacity="0.5"/><line x1="527" y1="601" x2="689.6" y2="585.1" stroke-width="0.7" opacity="0.5"/><line x1="527" y1="601" x2="695.7" y2="594.4" stroke-width="0.7" opacity="0.5"/></g>
<polygon points="459.0,653.0 990.0,584.0 992.0,614.0 469.0,690.0" fill="#7d8659"/>
<polygon points="459.0,653.0 488.5,649.2 469.0,690.0" fill="#7d8659" stroke="#141a0e" stroke-width="0.9" stroke-linejoin="round"/>
<polygon points="488.5,649.2 498.1,685.8 469.0,690.0" fill="#7d8659" stroke="#141a0e" stroke-width="0.9" stroke-linejoin="round"/>
<polygon points="488.5,649.2 518.0,645.3 498.1,685.8" fill="#7d8659" stroke="#141a0e" stroke-width="0.9" stroke-linejoin="round"/>
<polygon points="518.0,645.3 527.1,681.6 498.1,685.8" fill="#7d8659" stroke="#141a0e" stroke-width="0.9" stroke-linejoin="round"/>
<polygon points="518.0,645.3 547.5,641.5 527.1,681.6" fill="#7d8659" stroke="#141a0e" stroke-width="0.9" stroke-linejoin="round"/>
<polygon points="547.5,641.5 556.2,677.3 527.1,681.6" fill="#7d8659" stroke="#141a0e" stroke-width="0.9" stroke-linejoin="round"/>
<polygon points="547.5,641.5 577.0,637.7 556.2,677.3" fill="#7d8659" stroke="#141a0e" stroke-width="0.9" stroke-linejoin="round"/>
<polygon points="577.0,637.7 585.2,673.1 556.2,677.3" fill="#7d8659" stroke="#141a0e" stroke-width="0.9" stroke-linejoin="round"/>
<polygon points="577.0,637.7 606.5,633.8 585.2,673.1" fill="#7d8659" stroke="#141a0e" stroke-width="0.9" stroke-linejoin="round"/>
<polygon points="606.5,633.8 614.3,668.9 585.2,673.1" fill="#7d8659" stroke="#141a0e" stroke-width="0.9" stroke-linejoin="round"/>
<polygon points="606.5,633.8 636.0,630.0 614.3,668.9" fill="#7d8659" stroke="#141a0e" stroke-width="0.9" stroke-linejoin="round"/>
<polygon points="636.0,630.0 643.3,664.7 614.3,668.9" fill="#7d8659" stroke="#141a0e" stroke-width="0.9" stroke-linejoin="round"/>
<polygon points="636.0,630.0 665.5,626.2 643.3,664.7" fill="#7d8659" stroke="#141a0e" stroke-width="0.9" stroke-linejoin="round"/>
<polygon points="665.5,626.2 672.4,660.4 643.3,664.7" fill="#7d8659" stroke="#141a0e" stroke-width="0.9" stroke-linejoin="round"/>
<polygon points="665.5,626.2 695.0,622.3 672.4,660.4" fill="#7d8659" stroke="#141a0e" stroke-width="0.9" stroke-linejoin="round"/>
<polygon points="695.0,622.3 701.4,656.2 672.4,660.4" fill="#7d8659" stroke="#141a0e" stroke-width="0.9" stroke-linejoin="round"/>
<polygon points="695.0,622.3 724.5,618.5 701.4,656.2" fill="#7d8659" stroke="#141a0e" stroke-width="0.9" stroke-linejoin="round"/>
<polygon points="724.5,618.5 730.5,652.0 701.4,656.2" fill="#7d8659" stroke="#141a0e" stroke-width="0.9" stroke-linejoin="round"/>
<polygon points="724.5,618.5 754.0,614.7 730.5,652.0" fill="#7d8659" stroke="#141a0e" stroke-width="0.9" stroke-linejoin="round"/>
<polygon points="754.0,614.7 759.6,647.8 730.5,652.0" fill="#7d8659" stroke="#141a0e" stroke-width="0.9" stroke-linejoin="round"/>
<polygon points="754.0,614.7 783.5,610.8 759.6,647.8" fill="#7d8659" stroke="#141a0e" stroke-width="0.9" stroke-linejoin="round"/>
<polygon points="783.5,610.8 788.6,643.6 759.6,647.8" fill="#7d8659" stroke="#141a0e" stroke-width="0.9" stroke-linejoin="round"/>
<polygon points="783.5,610.8 813.0,607.0 788.6,643.6" fill="#7d8659" stroke="#141a0e" stroke-width="0.9" stroke-linejoin="round"/>
<polygon points="813.0,607.0 817.7,639.3 788.6,643.6" fill="#7d8659" stroke="#141a0e" stroke-width="0.9" stroke-linejoin="round"/>
<polygon points="813.0,607.0 842.5,603.2 817.7,639.3" fill="#7d8659" stroke="#141a0e" stroke-width="0.9" stroke-linejoin="round"/>
<polygon points="842.5,603.2 846.7,635.1 817.7,639.3" fill="#7d8659" stroke="#141a0e" stroke-width="0.9" stroke-linejoin="round"/>
<polygon points="842.5,603.2 872.0,599.3 846.7,635.1" fill="#7d8659" stroke="#141a0e" stroke-width="0.9" stroke-linejoin="round"/>
<polygon points="872.0,599.3 875.8,630.9 846.7,635.1" fill="#7d8659" stroke="#141a0e" stroke-width="0.9" stroke-linejoin="round"/>
<polygon points="872.0,599.3 901.5,595.5 875.8,630.9" fill="#7d8659" stroke="#141a0e" stroke-width="0.9" stroke-linejoin="round"/>
<polygon points="901.5,595.5 904.8,626.7 875.8,630.9" fill="#7d8659" stroke="#141a0e" stroke-width="0.9" stroke-linejoin="round"/>
<polygon points="901.5,595.5 931.0,591.7 904.8,626.7" fill="#7d8659" stroke="#141a0e" stroke-width="0.9" stroke-linejoin="round"/>
<polygon points="931.0,591.7 933.9,622.4 904.8,626.7" fill="#7d8659" stroke="#141a0e" stroke-width="0.9" stroke-linejoin="round"/>
<polygon points="931.0,591.7 960.5,587.8 933.9,622.4" fill="#7d8659" stroke="#141a0e" stroke-width="0.9" stroke-linejoin="round"/>
<polygon points="960.5,587.8 962.9,618.2 933.9,622.4" fill="#7d8659" stroke="#141a0e" stroke-width="0.9" stroke-linejoin="round"/>
<polygon points="960.5,587.8 990.0,584.0 962.9,618.2" fill="#7d8659" stroke="#141a0e" stroke-width="0.9" stroke-linejoin="round"/>
<polygon points="990.0,584.0 992.0,614.0 962.9,618.2" fill="#7d8659" stroke="#141a0e" stroke-width="0.9" stroke-linejoin="round"/>
<polygon points="383.0,572.0 459.0,653.0 469.0,690.0 384.0,601.0" fill="#7f8b5e"/>
<polygon points="383.0,572.0 388.4,577.8 383.5,586.5" fill="#7f8b5e" stroke="#141a0e" stroke-width="0.8" stroke-linejoin="round"/>
<polygon points="388.4,577.8 389.2,592.6 383.5,586.5" fill="#7f8b5e" stroke="#141a0e" stroke-width="0.8" stroke-linejoin="round"/>
<polygon points="383.5,586.5 389.2,592.6 390.1,607.4" fill="#7f8b5e" stroke="#141a0e" stroke-width="0.8" stroke-linejoin="round"/>
<polygon points="383.5,586.5 390.1,607.4 384.0,601.0" fill="#7f8b5e" stroke="#141a0e" stroke-width="0.8" stroke-linejoin="round"/>
<polygon points="388.4,577.8 393.9,583.6 395.0,598.6" fill="#7f8b5e" stroke="#141a0e" stroke-width="0.8" stroke-linejoin="round"/>
<polygon points="388.4,577.8 395.0,598.6 389.2,592.6" fill="#7f8b5e" stroke="#141a0e" stroke-width="0.8" stroke-linejoin="round"/>
<polygon points="389.2,592.6 395.0,598.6 390.1,607.4" fill="#7f8b5e" stroke="#141a0e" stroke-width="0.8" stroke-linejoin="round"/>
<polygon points="395.0,598.6 396.1,613.7 390.1,607.4" fill="#7f8b5e" stroke="#141a0e" stroke-width="0.8" stroke-linejoin="round"/>
<polygon points="393.9,583.6 399.3,589.4 395.0,598.6" fill="#7f8b5e" stroke="#141a0e" stroke-width="0.8" stroke-linejoin="round"/>
<polygon points="399.3,589.4 400.8,604.7 395.0,598.6" fill="#7f8b5e" stroke="#141a0e" stroke-width="0.8" stroke-linejoin="round"/>
<polygon points="395.0,598.6 400.8,604.7 402.2,620.1" fill="#7f8b5e" stroke="#141a0e" stroke-width="0.8" stroke-linejoin="round"/>
<polygon points="395.0,598.6 402.2,620.1 396.1,613.7" fill="#7f8b5e" stroke="#141a0e" stroke-width="0.8" stroke-linejoin="round"/>
<polygon points="399.3,589.4 404.7,595.1 406.5,610.8" fill="#7f8b5e" stroke="#141a0e" stroke-width="0.8" stroke-linejoin="round"/>
<polygon points="399.3,589.4 406.5,610.8 400.8,604.7" fill="#7f8b5e" stroke="#141a0e" stroke-width="0.8" stroke-linejoin="round"/>
<polygon points="400.8,604.7 406.5,610.8 402.2,620.1" fill="#7f8b5e" stroke="#141a0e" stroke-width="0.8" stroke-linejoin="round"/>
<polygon points="406.5,610.8 408.3,626.4 402.2,620.1" fill="#7f8b5e" stroke="#141a0e" stroke-width="0.8" stroke-linejoin="round"/>
<polygon points="404.7,595.1 410.1,600.9 406.5,610.8" fill="#7f8b5e" stroke="#141a0e" stroke-width="0.8" stroke-linejoin="round"/>
<polygon points="410.1,600.9 412.2,616.9 406.5,610.8" fill="#7f8b5e" stroke="#141a0e" stroke-width="0.8" stroke-linejoin="round"/>
<polygon points="406.5,610.8 412.2,616.9 414.4,632.8" fill="#7f8b5e" stroke="#141a0e" stroke-width="0.8" stroke-linejoin="round"/>
<polygon points="406.5,610.8 414.4,632.8 408.3,626.4" fill="#7f8b5e" stroke="#141a0e" stroke-width="0.8" stroke-linejoin="round"/>
<polygon points="410.1,600.9 415.6,606.7 418.0,622.9" fill="#7f8b5e" stroke="#141a0e" stroke-width="0.8" stroke-linejoin="round"/>
<polygon points="410.1,600.9 418.0,622.9 412.2,616.9" fill="#7f8b5e" stroke="#141a0e" stroke-width="0.8" stroke-linejoin="round"/>
<polygon points="412.2,616.9 418.0,622.9 414.4,632.8" fill="#7f8b5e" stroke="#141a0e" stroke-width="0.8" stroke-linejoin="round"/>
<polygon points="418.0,622.9 420.4,639.1 414.4,632.8" fill="#7f8b5e" stroke="#141a0e" stroke-width="0.8" stroke-linejoin="round"/>
<polygon points="415.6,606.7 421.0,612.5 418.0,622.9" fill="#7f8b5e" stroke="#141a0e" stroke-width="0.8" stroke-linejoin="round"/>
<polygon points="421.0,612.5 423.8,629.0 418.0,622.9" fill="#7f8b5e" stroke="#141a0e" stroke-width="0.8" stroke-linejoin="round"/>
<polygon points="418.0,622.9 423.8,629.0 426.5,645.5" fill="#7f8b5e" stroke="#141a0e" stroke-width="0.8" stroke-linejoin="round"/>
<polygon points="418.0,622.9 426.5,645.5 420.4,639.1" fill="#7f8b5e" stroke="#141a0e" stroke-width="0.8" stroke-linejoin="round"/>
<polygon points="421.0,612.5 426.4,618.3 429.5,635.1" fill="#7f8b5e" stroke="#141a0e" stroke-width="0.8" stroke-linejoin="round"/>
<polygon points="421.0,612.5 429.5,635.1 423.8,629.0" fill="#7f8b5e" stroke="#141a0e" stroke-width="0.8" stroke-linejoin="round"/>
<polygon points="423.8,629.0 429.5,635.1 426.5,645.5" fill="#7f8b5e" stroke="#141a0e" stroke-width="0.8" stroke-linejoin="round"/>
<polygon points="429.5,635.1 432.6,651.9 426.5,645.5" fill="#7f8b5e" stroke="#141a0e" stroke-width="0.8" stroke-linejoin="round"/>
<polygon points="426.4,618.3 431.9,624.1 429.5,635.1" fill="#7f8b5e" stroke="#141a0e" stroke-width="0.8" stroke-linejoin="round"/>
<polygon points="431.9,624.1 435.2,641.1 429.5,635.1" fill="#7f8b5e" stroke="#141a0e" stroke-width="0.8" stroke-linejoin="round"/>
<polygon points="429.5,635.1 435.2,641.1 438.6,658.2" fill="#7f8b5e" stroke="#141a0e" stroke-width="0.8" stroke-linejoin="round"/>
<polygon points="429.5,635.1 438.6,658.2 432.6,651.9" fill="#7f8b5e" stroke="#141a0e" stroke-width="0.8" stroke-linejoin="round"/>
<polygon points="431.9,624.1 437.3,629.9 441.0,647.2" fill="#7f8b5e" stroke="#141a0e" stroke-width="0.8" stroke-linejoin="round"/>
<polygon points="431.9,624.1 441.0,647.2 435.2,641.1" fill="#7f8b5e" stroke="#141a0e" stroke-width="0.8" stroke-linejoin="round"/>
<polygon points="435.2,641.1 441.0,647.2 438.6,658.2" fill="#7f8b5e" stroke="#141a0e" stroke-width="0.8" stroke-linejoin="round"/>
<polygon points="441.0,647.2 444.7,664.6 438.6,658.2" fill="#7f8b5e" stroke="#141a0e" stroke-width="0.8" stroke-linejoin="round"/>
<polygon points="437.3,629.9 442.7,635.6 441.0,647.2" fill="#7f8b5e" stroke="#141a0e" stroke-width="0.8" stroke-linejoin="round"/>
<polygon points="442.7,635.6 446.8,653.3 441.0,647.2" fill="#7f8b5e" stroke="#141a0e" stroke-width="0.8" stroke-linejoin="round"/>
<polygon points="441.0,647.2 446.8,653.3 450.8,670.9" fill="#7f8b5e" stroke="#141a0e" stroke-width="0.8" stroke-linejoin="round"/>
<polygon points="441.0,647.2 450.8,670.9 444.7,664.6" fill="#7f8b5e" stroke="#141a0e" stroke-width="0.8" stroke-linejoin="round"/>
<polygon points="442.7,635.6 448.1,641.4 452.5,659.4" fill="#7f8b5e" stroke="#141a0e" stroke-width="0.8" stroke-linejoin="round"/>
<polygon points="442.7,635.6 452.5,659.4 446.8,653.3" fill="#7f8b5e" stroke="#141a0e" stroke-width="0.8" stroke-linejoin="round"/>
<polygon points="446.8,653.3 452.5,659.4 450.8,670.9" fill="#7f8b5e" stroke="#141a0e" stroke-width="0.8" stroke-linejoin="round"/>
<polygon points="452.5,659.4 456.9,677.3 450.8,670.9" fill="#7f8b5e" stroke="#141a0e" stroke-width="0.8" stroke-linejoin="round"/>
<polygon points="448.1,641.4 453.6,647.2 452.5,659.4" fill="#7f8b5e" stroke="#141a0e" stroke-width="0.8" stroke-linejoin="round"/>
<polygon points="453.6,647.2 458.2,665.4 452.5,659.4" fill="#7f8b5e" stroke="#141a0e" stroke-width="0.8" stroke-linejoin="round"/>
<polygon points="452.5,659.4 458.2,665.4 462.9,683.6" fill="#7f8b5e" stroke="#141a0e" stroke-width="0.8" stroke-linejoin="round"/>
<polygon points="452.5,659.4 462.9,683.6 456.9,677.3" fill="#7f8b5e" stroke="#141a0e" stroke-width="0.8" stroke-linejoin="round"/>
<polygon points="453.6,647.2 459.0,653.0 464.0,671.5" fill="#7f8b5e" stroke="#141a0e" stroke-width="0.8" stroke-linejoin="round"/>
<polygon points="453.6,647.2 464.0,671.5 458.2,665.4" fill="#7f8b5e" stroke="#141a0e" stroke-width="0.8" stroke-linejoin="round"/>
<polygon points="458.2,665.4 464.0,671.5 462.9,683.6" fill="#7f8b5e" stroke="#141a0e" stroke-width="0.8" stroke-linejoin="round"/>
<polygon points="464.0,671.5 469.0,690.0 462.9,683.6" fill="#7f8b5e" stroke="#141a0e" stroke-width="0.8" stroke-linejoin="round"/>
<polygon points="383,572 398,588 400,616 384,601" fill="#2a90d8" opacity="0.45"/>
<circle cx="990" cy="583" r="30" fill="url(#sgt)" opacity="0.45"/>
<circle cx="991" cy="614" r="30" fill="url(#sgt)" opacity="0.35"/>
<circle cx="906" cy="489" r="31" fill="url(#sg)" opacity="0.85"/>
<polygon points="484.1,485.9 487.0,492.4 489.9,498.9 492.8,505.4 495.7,512.0 498.6,518.5 501.5,525.0 504.4,531.5 507.3,538.0 510.2,544.5 513.1,551.0 515.9,557.5 518.8,564.0 521.7,570.5 524.6,577.1 527.5,583.6 530.4,590.1 533.3,596.6 516.7,603.4 514.2,596.8 511.6,590.1 509.1,583.4 506.6,576.8 504.1,570.1 501.6,563.4 499.1,556.8 496.6,550.1 494.0,543.4 491.5,536.8 489.0,530.1 486.5,523.4 484.0,516.8 481.5,510.1 478.9,503.4 476.4,496.8 473.9,490.1" fill="#1a2012" stroke="#141a0e" stroke-width="1.4" stroke-linejoin="round"/>
<polygon points="484.1,485.9 479.0,488.0 481.7,494.6 487.0,492.4" fill="#7d875c"/>
<polygon points="479.0,488.0 473.9,490.1 476.4,496.8 481.7,494.6" fill="#7a835b"/>
<polygon points="487.0,492.4 481.7,494.6 484.4,501.2 489.9,498.9" fill="#7a835b"/>
<polygon points="481.7,494.6 476.4,496.8 478.9,503.4 484.4,501.2" fill="#7d875c"/>
<polygon points="489.9,498.9 484.4,501.2 487.1,507.8 492.8,505.4" fill="#7d875c"/>
<polygon points="484.4,501.2 478.9,503.4 481.5,510.1 487.1,507.8" fill="#7a835b"/>
<polygon points="492.8,505.4 487.1,507.8 489.8,514.4 495.7,512.0" fill="#7a835b"/>
<polygon points="487.1,507.8 481.5,510.1 484.0,516.8 489.8,514.4" fill="#7d875c"/>
<polygon points="495.7,512.0 489.8,514.4 492.5,520.9 498.6,518.5" fill="#7d875c"/>
<polygon points="489.8,514.4 484.0,516.8 486.5,523.4 492.5,520.9" fill="#7a835b"/>
<polygon points="498.6,518.5 492.5,520.9 495.2,527.5 501.5,525.0" fill="#7a835b"/>
<polygon points="492.5,520.9 486.5,523.4 489.0,530.1 495.2,527.5" fill="#7d875c"/>
<polygon points="501.5,525.0 495.2,527.5 497.9,534.1 504.4,531.5" fill="#7d875c"/>
<polygon points="495.2,527.5 489.0,530.1 491.5,536.8 497.9,534.1" fill="#7a835b"/>
<polygon points="504.4,531.5 497.9,534.1 500.6,540.7 507.3,538.0" fill="#7a835b"/>
<polygon points="497.9,534.1 491.5,536.8 494.0,543.4 500.6,540.7" fill="#7d875c"/>
<polygon points="507.3,538.0 500.6,540.7 503.4,547.3 510.2,544.5" fill="#7d875c"/>
<polygon points="500.6,540.7 494.0,543.4 496.6,550.1 503.4,547.3" fill="#7a835b"/>
<polygon points="510.2,544.5 503.4,547.3 506.1,553.9 513.1,551.0" fill="#7a835b"/>
<polygon points="503.4,547.3 496.6,550.1 499.1,556.8 506.1,553.9" fill="#7d875c"/>
<polygon points="513.1,551.0 506.1,553.9 508.8,560.5 515.9,557.5" fill="#7d875c"/>
<polygon points="506.1,553.9 499.1,556.8 501.6,563.4 508.8,560.5" fill="#7a835b"/>
<polygon points="515.9,557.5 508.8,560.5 511.5,567.1 518.8,564.0" fill="#7a835b"/>
<polygon points="508.8,560.5 501.6,563.4 504.1,570.1 511.5,567.1" fill="#7d875c"/>
<polygon points="518.8,564.0 511.5,567.1 514.2,573.6 521.7,570.5" fill="#7d875c"/>
<polygon points="511.5,567.1 504.1,570.1 506.6,576.8 514.2,573.6" fill="#7a835b"/>
<polygon points="521.7,570.5 514.2,573.6 516.9,580.2 524.6,577.1" fill="#7a835b"/>
<polygon points="514.2,573.6 506.6,576.8 509.1,583.4 516.9,580.2" fill="#7d875c"/>
<polygon points="524.6,577.1 516.9,580.2 519.6,586.8 527.5,583.6" fill="#7d875c"/>
<polygon points="516.9,580.2 509.1,583.4 511.6,590.1 519.6,586.8" fill="#7a835b"/>
<polygon points="527.5,583.6 519.6,586.8 522.3,593.4 530.4,590.1" fill="#7a835b"/>
<polygon points="519.6,586.8 511.6,590.1 514.2,596.8 522.3,593.4" fill="#7d875c"/>
<polygon points="530.4,590.1 522.3,593.4 525.0,600.0 533.3,596.6" fill="#7d875c"/>
<polygon points="522.3,593.4 514.2,596.8 516.7,603.4 525.0,600.0" fill="#7a835b"/>
<path d="M484.1,485.9L487.0,492.4L481.7,494.6M484.1,485.9L481.7,494.6M479.0,488.0L487.0,492.4M479.0,488.0L481.7,494.6L476.4,496.8M479.0,488.0L476.4,496.8M473.9,490.1L481.7,494.6M487.0,492.4L489.9,498.9L484.4,501.2M487.0,492.4L484.4,501.2M481.7,494.6L489.9,498.9M481.7,494.6L484.4,501.2L478.9,503.4M481.7,494.6L478.9,503.4M476.4,496.8L484.4,501.2M489.9,498.9L492.8,505.4L487.1,507.8M489.9,498.9L487.1,507.8M484.4,501.2L492.8,505.4M484.4,501.2L487.1,507.8L481.5,510.1M484.4,501.2L481.5,510.1M478.9,503.4L487.1,507.8M492.8,505.4L495.7,512.0L489.8,514.4M492.8,505.4L489.8,514.4M487.1,507.8L495.7,512.0M487.1,507.8L489.8,514.4L484.0,516.8M487.1,507.8L484.0,516.8M481.5,510.1L489.8,514.4M495.7,512.0L498.6,518.5L492.5,520.9M495.7,512.0L492.5,520.9M489.8,514.4L498.6,518.5M489.8,514.4L492.5,520.9L486.5,523.4M489.8,514.4L486.5,523.4M484.0,516.8L492.5,520.9M498.6,518.5L501.5,525.0L495.2,527.5M498.6,518.5L495.2,527.5M492.5,520.9L501.5,525.0M492.5,520.9L495.2,527.5L489.0,530.1M492.5,520.9L489.0,530.1M486.5,523.4L495.2,527.5M501.5,525.0L504.4,531.5L497.9,534.1M501.5,525.0L497.9,534.1M495.2,527.5L504.4,531.5M495.2,527.5L497.9,534.1L491.5,536.8M495.2,527.5L491.5,536.8M489.0,530.1L497.9,534.1M504.4,531.5L507.3,538.0L500.6,540.7M504.4,531.5L500.6,540.7M497.9,534.1L507.3,538.0M497.9,534.1L500.6,540.7L494.0,543.4M497.9,534.1L494.0,543.4M491.5,536.8L500.6,540.7M507.3,538.0L510.2,544.5L503.4,547.3M507.3,538.0L503.4,547.3M500.6,540.7L510.2,544.5M500.6,540.7L503.4,547.3L496.6,550.1M500.6,540.7L496.6,550.1M494.0,543.4L503.4,547.3M510.2,544.5L513.1,551.0L506.1,553.9M510.2,544.5L506.1,553.9M503.4,547.3L513.1,551.0M503.4,547.3L506.1,553.9L499.1,556.8M503.4,547.3L499.1,556.8M496.6,550.1L506.1,553.9M513.1,551.0L515.9,557.5L508.8,560.5M513.1,551.0L508.8,560.5M506.1,553.9L515.9,557.5M506.1,553.9L508.8,560.5L501.6,563.4M506.1,553.9L501.6,563.4M499.1,556.8L508.8,560.5M515.9,557.5L518.8,564.0L511.5,567.1M515.9,557.5L511.5,567.1M508.8,560.5L518.8,564.0M508.8,560.5L511.5,567.1L504.1,570.1M508.8,560.5L504.1,570.1M501.6,563.4L511.5,567.1M518.8,564.0L521.7,570.5L514.2,573.6M518.8,564.0L514.2,573.6M511.5,567.1L521.7,570.5M511.5,567.1L514.2,573.6L506.6,576.8M511.5,567.1L506.6,576.8M504.1,570.1L514.2,573.6M521.7,570.5L524.6,577.1L516.9,580.2M521.7,570.5L516.9,580.2M514.2,573.6L524.6,577.1M514.2,573.6L516.9,580.2L509.1,583.4M514.2,573.6L509.1,583.4M506.6,576.8L516.9,580.2M524.6,577.1L527.5,583.6L519.6,586.8M524.6,577.1L519.6,586.8M516.9,580.2L527.5,583.6M516.9,580.2L519.6,586.8L511.6,590.1M516.9,580.2L511.6,590.1M509.1,583.4L519.6,586.8M527.5,583.6L530.4,590.1L522.3,593.4M527.5,583.6L522.3,593.4M519.6,586.8L530.4,590.1M519.6,586.8L522.3,593.4L514.2,596.8M519.6,586.8L514.2,596.8M511.6,590.1L522.3,593.4M530.4,590.1L533.3,596.6L525.0,600.0M530.4,590.1L525.0,600.0M522.3,593.4L533.3,596.6M522.3,593.4L525.0,600.0L516.7,603.4M522.3,593.4L516.7,603.4M514.2,596.8L525.0,600.0" fill="none" stroke="#141a0e" stroke-width="0.7"/>
<circle cx="733" cy="558" r="23" fill="url(#sgt)" opacity="0.75"/>
<polygon points="737.1,474.0 737.2,472.5 737.8,471.0 738.8,469.4 740.2,467.9 742.0,466.4 744.2,465.0 746.7,463.5 749.7,462.1 753.0,460.8 756.5,459.6 760.4,458.4 764.5,457.3 768.9,456.3 773.4,455.4 778.1,454.6 783.0,454.0 787.9,453.4 792.8,453.0 797.8,452.8 802.7,452.6 807.6,452.6 812.3,452.7 817.0,452.9 821.4,453.3 825.6,453.8 829.6,454.4 833.4,455.2 836.8,456.1 839.9,457.0 842.6,458.1 845.0,459.2 847.0,460.5 848.6,461.8 849.8,463.1 850.5,464.6 850.9,466.0 857.8,559.8 857.7,561.2 857.1,562.6 856.1,564.1 854.6,565.5 852.8,567.0 850.5,568.4 847.8,569.9 844.7,571.2 841.2,572.6 837.5,573.9 833.4,575.1 829.1,576.2 824.5,577.2 819.8,578.2 814.8,579.0 809.8,579.8 804.6,580.4 799.4,580.9 794.2,581.3 789.0,581.6 783.9,581.8 778.9,581.8 774.0,581.7 769.3,581.4 764.9,581.1 760.6,580.6 756.7,580.0 753.1,579.2 749.8,578.4 746.9,577.5 744.4,576.5 742.3,575.4 740.6,574.2 739.4,572.9 738.6,571.6 738.2,570.2" fill="#5b6243" stroke="#141a0e" stroke-width="0.9" stroke-linejoin="round"/>
<polygon points="849.2,484.3 854.3,513.8 844.1,504.7" fill="#5b6343" stroke="#141a0e" stroke-width="0.8" stroke-linejoin="round"/>
<polygon points="849.2,484.3 851.3,493.5 854.3,513.8" fill="#5b6243" stroke="#141a0e" stroke-width="0.8" stroke-linejoin="round"/>
<polygon points="853.5,532.2 857.8,559.8 849.1,552.5" fill="#5a6242" stroke="#141a0e" stroke-width="0.8" stroke-linejoin="round"/>
<polygon points="853.5,532.2 854.8,540.2 857.8,559.8" fill="#5b6243" stroke="#141a0e" stroke-width="0.8" stroke-linejoin="round"/>
<polygon points="740.7,550.5 738.2,570.2 746.9,577.5" fill="#9ba772" stroke="#141a0e" stroke-width="0.8" stroke-linejoin="round"/>
<polygon points="740.7,550.5 739.7,541.7 738.2,570.2" fill="#8e9968" stroke="#141a0e" stroke-width="0.8" stroke-linejoin="round"/>
<polygon points="740.0,502.5 737.7,522.4 745.8,529.6" fill="#96a26e" stroke="#141a0e" stroke-width="0.8" stroke-linejoin="round"/>
<polygon points="740.0,502.5 738.2,494.8 737.7,522.4" fill="#95a16e" stroke="#141a0e" stroke-width="0.8" stroke-linejoin="round"/>
<polygon points="854.3,513.8 848.7,520.8 854.8,540.2" fill="#5a6242" stroke="#141a0e" stroke-width="0.8" stroke-linejoin="round"/>
<polygon points="848.7,520.8 837.6,550.0 854.8,540.2" fill="#5d6444" stroke="#141a0e" stroke-width="0.8" stroke-linejoin="round"/>
<polygon points="745.3,481.9 737.1,474.0 740.0,502.5" fill="#98a470" stroke="#141a0e" stroke-width="0.8" stroke-linejoin="round"/>
<polygon points="737.1,474.0 738.2,494.8 740.0,502.5" fill="#9daa74" stroke="#141a0e" stroke-width="0.8" stroke-linejoin="round"/>
<polygon points="850.9,466.0 843.8,475.0 851.3,493.5" fill="#5b6243" stroke="#141a0e" stroke-width="0.8" stroke-linejoin="round"/>
<polygon points="843.8,475.0 838.7,501.7 851.3,493.5" fill="#5a6242" stroke="#141a0e" stroke-width="0.8" stroke-linejoin="round"/>
<polygon points="745.8,529.6 737.7,522.4 740.7,550.5" fill="#98a470" stroke="#141a0e" stroke-width="0.8" stroke-linejoin="round"/>
<polygon points="737.7,522.4 739.7,541.7 740.7,550.5" fill="#97a36f" stroke="#141a0e" stroke-width="0.8" stroke-linejoin="round"/>
<polygon points="851.3,493.5 848.7,520.8 854.3,513.8" fill="#585f41" stroke="#141a0e" stroke-width="0.8" stroke-linejoin="round"/>
<polygon points="851.3,493.5 838.7,501.7 848.7,520.8" fill="#5a6142" stroke="#141a0e" stroke-width="0.8" stroke-linejoin="round"/>
<polygon points="755.3,556.0 746.9,577.5 769.3,581.4" fill="#98a470" stroke="#141a0e" stroke-width="0.8" stroke-linejoin="round"/>
<polygon points="755.3,556.0 740.7,550.5 746.9,577.5" fill="#9aa671" stroke="#141a0e" stroke-width="0.8" stroke-linejoin="round"/>
<polygon points="754.9,508.5 745.8,529.6 764.4,533.7" fill="#9ca873" stroke="#141a0e" stroke-width="0.8" stroke-linejoin="round"/>
<polygon points="754.9,508.5 740.0,502.5 745.8,529.6" fill="#9fac75" stroke="#141a0e" stroke-width="0.8" stroke-linejoin="round"/>
<polygon points="854.8,540.2 850.5,568.4 857.8,559.8" fill="#5c6343" stroke="#141a0e" stroke-width="0.8" stroke-linejoin="round"/>
<polygon points="854.8,540.2 837.6,550.0 850.5,568.4" fill="#585f40" stroke="#141a0e" stroke-width="0.8" stroke-linejoin="round"/>
<polygon points="848.7,520.8 828.4,528.9 837.6,550.0" fill="#5e6545" stroke="#141a0e" stroke-width="0.8" stroke-linejoin="round"/>
<polygon points="828.4,528.9 816.4,555.2 837.6,550.0" fill="#5b6243" stroke="#141a0e" stroke-width="0.8" stroke-linejoin="round"/>
<polygon points="764.4,533.7 745.8,529.6 755.3,556.0" fill="#9eaa74" stroke="#141a0e" stroke-width="0.8" stroke-linejoin="round"/>
<polygon points="745.8,529.6 740.7,550.5 755.3,556.0" fill="#9eab75" stroke="#141a0e" stroke-width="0.8" stroke-linejoin="round"/>
<polygon points="843.8,475.0 823.5,482.7 838.7,501.7" fill="#596142" stroke="#141a0e" stroke-width="0.8" stroke-linejoin="round"/>
<polygon points="823.5,482.7 809.8,509.0 838.7,501.7" fill="#5f6746" stroke="#141a0e" stroke-width="0.8" stroke-linejoin="round"/>
<polygon points="766.6,486.7 745.3,481.9 754.9,508.5" fill="#9ca873" stroke="#141a0e" stroke-width="0.8" stroke-linejoin="round"/>
<polygon points="745.3,481.9 740.0,502.5 754.9,508.5" fill="#9da974" stroke="#141a0e" stroke-width="0.8" stroke-linejoin="round"/>
<polygon points="782.3,558.2 769.3,581.4 799.4,580.9" fill="#94a06d" stroke="#141a0e" stroke-width="0.8" stroke-linejoin="round"/>
<polygon points="782.3,558.2 755.3,556.0 769.3,581.4" fill="#939e6c" stroke="#141a0e" stroke-width="0.8" stroke-linejoin="round"/>
<polygon points="838.7,501.7 828.4,528.9 848.7,520.8" fill="#616948" stroke="#141a0e" stroke-width="0.8" stroke-linejoin="round"/>
<polygon points="838.7,501.7 809.8,509.0 828.4,528.9" fill="#68704c" stroke="#141a0e" stroke-width="0.8" stroke-linejoin="round"/>
<polygon points="837.6,550.0 829.1,576.2 850.5,568.4" fill="#606847" stroke="#141a0e" stroke-width="0.8" stroke-linejoin="round"/>
<polygon points="837.6,550.0 816.4,555.2 829.1,576.2" fill="#68714d" stroke="#141a0e" stroke-width="0.8" stroke-linejoin="round"/>
<polygon points="785.1,511.0 764.4,533.7 796.1,534.0" fill="#929d6b" stroke="#141a0e" stroke-width="0.8" stroke-linejoin="round"/>
<polygon points="785.1,511.0 754.9,508.5 764.4,533.7" fill="#98a470" stroke="#141a0e" stroke-width="0.8" stroke-linejoin="round"/>
<polygon points="796.1,534.0 764.4,533.7 782.3,558.2" fill="#8b9666" stroke="#141a0e" stroke-width="0.8" stroke-linejoin="round"/>
<polygon points="764.4,533.7 755.3,556.0 782.3,558.2" fill="#929d6b" stroke="#141a0e" stroke-width="0.8" stroke-linejoin="round"/>
<polygon points="828.4,528.9 796.1,534.0 816.4,555.2" fill="#6f7852" stroke="#141a0e" stroke-width="0.8" stroke-linejoin="round"/>
<polygon points="796.1,534.0 782.3,558.2 816.4,555.2" fill="#747d55" stroke="#141a0e" stroke-width="0.8" stroke-linejoin="round"/>
<polygon points="823.5,482.7 795.2,487.0 809.8,509.0" fill="#707952" stroke="#141a0e" stroke-width="0.8" stroke-linejoin="round"/>
<polygon points="795.2,487.0 785.1,511.0 809.8,509.0" fill="#768057" stroke="#141a0e" stroke-width="0.8" stroke-linejoin="round"/>
<polygon points="795.2,487.0 766.6,486.7 785.1,511.0" fill="#889364" stroke="#141a0e" stroke-width="0.8" stroke-linejoin="round"/>
<polygon points="766.6,486.7 754.9,508.5 785.1,511.0" fill="#8f9b69" stroke="#141a0e" stroke-width="0.8" stroke-linejoin="round"/>
<polygon points="809.8,509.0 796.1,534.0 828.4,528.9" fill="#7a845a" stroke="#141a0e" stroke-width="0.8" stroke-linejoin="round"/>
<polygon points="809.8,509.0 785.1,511.0 796.1,534.0" fill="#808a5e" stroke="#141a0e" stroke-width="0.8" stroke-linejoin="round"/>
<polygon points="816.4,555.2 799.4,580.9 829.1,576.2" fill="#778158" stroke="#141a0e" stroke-width="0.8" stroke-linejoin="round"/>
<polygon points="816.4,555.2 782.3,558.2 799.4,580.9" fill="#808a5e" stroke="#141a0e" stroke-width="0.8" stroke-linejoin="round"/>
<circle cx="808" cy="484" r="32" fill="url(#sgt)" opacity="0.7"/>
<polygon points="680.2,452.8 680.5,450.0 681.5,447.1 683.5,444.3 686.2,441.4 689.8,438.6 694.1,435.9 699.1,433.2 704.9,430.7 711.3,428.2 718.3,425.9 725.9,423.7 733.9,421.7 742.4,419.9 751.3,418.3 760.4,416.9 769.8,415.7 779.4,414.8 789.0,414.1 798.7,413.6 808.3,413.4 817.8,413.4 827.1,413.7 836.0,414.2 844.7,414.9 853.0,415.9 860.7,417.2 868.0,418.6 874.6,420.3 880.6,422.1 886.0,424.2 890.6,426.4 894.4,428.7 897.5,431.2 899.8,433.8 901.2,436.5 901.8,439.2 901.5,442.0 900.5,444.9 896.5,455.1 894.7,457.9 892.1,460.6 888.8,463.4 884.7,466.1 879.9,468.7 874.4,471.2 868.3,473.6 861.6,475.9 854.4,478.1 846.7,480.1 838.6,481.9 830.2,483.5 821.5,485.0 812.5,486.2 803.4,487.2 794.2,487.9 784.9,488.4 775.8,488.7 766.7,488.8 757.9,488.6 749.3,488.1 741.0,487.5 733.1,486.6 725.7,485.4 718.8,484.1 712.4,482.5 706.6,480.8 701.5,478.9 697.1,476.8 693.4,474.5 690.4,472.1 688.2,469.6 686.9,467.1 680.8,455.5" fill="#5b6243" stroke="#141a0e" stroke-width="0.9" stroke-linejoin="round"/>
<polygon points="901.8,439.2 897.9,448.5 897.0,454.1" fill="#5d6545" stroke="#141a0e" stroke-width="0.8" stroke-linejoin="round"/>
<polygon points="897.9,448.5 889.1,463.1 897.0,454.1" fill="#5d6444" stroke="#141a0e" stroke-width="0.8" stroke-linejoin="round"/>
<polygon points="685.2,461.5 680.2,452.8 687.6,468.7" fill="#9ba872" stroke="#141a0e" stroke-width="0.8" stroke-linejoin="round"/>
<polygon points="680.2,452.8 687.0,459.9 687.6,468.7" fill="#96a26e" stroke="#141a0e" stroke-width="0.8" stroke-linejoin="round"/>
<polygon points="698.9,469.0 685.2,461.5 696.7,476.6" fill="#9ca873" stroke="#141a0e" stroke-width="0.8" stroke-linejoin="round"/>
<polygon points="685.2,461.5 687.6,468.7 696.7,476.6" fill="#9fac75" stroke="#141a0e" stroke-width="0.8" stroke-linejoin="round"/>
<polygon points="897.9,448.5 885.3,457.6 889.1,463.1" fill="#5d6444" stroke="#141a0e" stroke-width="0.8" stroke-linejoin="round"/>
<polygon points="885.3,457.6 873.3,471.7 889.1,463.1" fill="#596042" stroke="#141a0e" stroke-width="0.8" stroke-linejoin="round"/>
<polygon points="885.3,457.6 865.0,465.7 873.3,471.7" fill="#5a6142" stroke="#141a0e" stroke-width="0.8" stroke-linejoin="round"/>
<polygon points="865.0,465.7 851.0,479.0 873.3,471.7" fill="#5a6142" stroke="#141a0e" stroke-width="0.8" stroke-linejoin="round"/>
<polygon points="719.9,474.6 698.9,469.0 713.5,482.8" fill="#98a470" stroke="#141a0e" stroke-width="0.8" stroke-linejoin="round"/>
<polygon points="698.9,469.0 696.7,476.6 713.5,482.8" fill="#9aa671" stroke="#141a0e" stroke-width="0.8" stroke-linejoin="round"/>
<polygon points="865.0,465.7 838.8,472.2 851.0,479.0" fill="#606847" stroke="#141a0e" stroke-width="0.8" stroke-linejoin="round"/>
<polygon points="838.8,472.2 823.9,484.6 851.0,479.0" fill="#6c744f" stroke="#141a0e" stroke-width="0.8" stroke-linejoin="round"/>
<polygon points="746.8,477.9 719.9,474.6 736.7,487.0" fill="#909b6a" stroke="#141a0e" stroke-width="0.8" stroke-linejoin="round"/>
<polygon points="719.9,474.6 713.5,482.8 736.7,487.0" fill="#929e6c" stroke="#141a0e" stroke-width="0.8" stroke-linejoin="round"/>
<polygon points="838.8,472.2 808.7,476.7 823.9,484.6" fill="#6a734e" stroke="#141a0e" stroke-width="0.8" stroke-linejoin="round"/>
<polygon points="808.7,476.7 794.2,487.9 823.9,484.6" fill="#757e56" stroke="#141a0e" stroke-width="0.8" stroke-linejoin="round"/>
<polygon points="777.2,478.6 746.8,477.9 764.3,488.8" fill="#889364" stroke="#141a0e" stroke-width="0.8" stroke-linejoin="round"/>
<polygon points="746.8,477.9 736.7,487.0 764.3,488.8" fill="#919c6a" stroke="#141a0e" stroke-width="0.8" stroke-linejoin="round"/>
<polygon points="808.7,476.7 777.2,478.6 794.2,487.9" fill="#798359" stroke="#141a0e" stroke-width="0.8" stroke-linejoin="round"/>
<polygon points="777.2,478.6 764.3,488.8 794.2,487.9" fill="#828d60" stroke="#141a0e" stroke-width="0.8" stroke-linejoin="round"/>
<polygon points="680.2,452.8 680.5,450.0 681.5,447.1 683.5,444.3 699.9,425.5 702.2,423.1 705.2,420.8 708.8,418.4 713.0,416.2 717.8,414.0 723.2,412.0 729.1,410.0 735.4,408.2 742.2,406.5 749.3,405.0 756.7,403.6 764.4,402.4 772.3,401.4 780.3,400.6 788.4,400.1 796.5,399.7 804.5,399.5 812.4,399.5 820.2,399.7 827.7,400.2 835.0,400.8 841.9,401.7 848.4,402.7 854.5,403.9 860.0,405.3 865.1,406.9 869.6,408.6 873.4,410.5 876.7,412.4 879.2,414.5 897.5,431.2 899.8,433.8 901.2,436.5 901.8,439.2 901.5,442.0 900.5,444.9 898.5,447.7 895.8,450.6 892.2,453.4 887.9,456.1 882.9,458.8 877.1,461.3 870.7,463.8 863.7,466.1 856.1,468.3 848.1,470.3 839.6,472.1 830.7,473.7 821.6,475.1 812.2,476.3 802.6,477.2 793.0,477.9 783.3,478.4 773.7,478.6 764.2,478.6 754.9,478.3 746.0,477.8 737.3,477.1 729.0,476.1 721.3,474.8 714.0,473.4 707.4,471.7 701.4,469.9 696.0,467.8 691.4,465.6 687.6,463.3 684.5,460.8 682.2,458.2 680.8,455.5" fill="#5b6243" stroke="#141a0e" stroke-width="0.9" stroke-linejoin="round"/>
<polygon points="788.4,400.1 814.6,399.5 804.8,413.4" fill="#616847" stroke="#141a0e" stroke-width="0.8" stroke-linejoin="round"/>
<polygon points="814.6,399.5 835.2,414.1 804.8,413.4" fill="#5e6545" stroke="#141a0e" stroke-width="0.8" stroke-linejoin="round"/>
<polygon points="762.3,402.7 788.4,400.1 773.3,415.3" fill="#6c744f" stroke="#141a0e" stroke-width="0.8" stroke-linejoin="round"/>
<polygon points="788.4,400.1 804.8,413.4 773.3,415.3" fill="#616847" stroke="#141a0e" stroke-width="0.8" stroke-linejoin="round"/>
<polygon points="738.4,407.4 762.3,402.7 743.2,419.8" fill="#717a53" stroke="#141a0e" stroke-width="0.8" stroke-linejoin="round"/>
<polygon points="762.3,402.7 773.3,415.3 743.2,419.8" fill="#6e7751" stroke="#141a0e" stroke-width="0.8" stroke-linejoin="round"/>
<polygon points="814.6,399.5 838.8,401.3 835.2,414.1" fill="#5e6645" stroke="#141a0e" stroke-width="0.8" stroke-linejoin="round"/>
<polygon points="838.8,401.3 862.1,417.4 835.2,414.1" fill="#606746" stroke="#141a0e" stroke-width="0.8" stroke-linejoin="round"/>
<polygon points="718.8,413.6 738.4,407.4 717.0,426.3" fill="#7f8a5e" stroke="#141a0e" stroke-width="0.8" stroke-linejoin="round"/>
<polygon points="738.4,407.4 743.2,419.8 717.0,426.3" fill="#778158" stroke="#141a0e" stroke-width="0.8" stroke-linejoin="round"/>
<polygon points="838.8,401.3 859.1,405.1 862.1,417.4" fill="#5f6746" stroke="#141a0e" stroke-width="0.8" stroke-linejoin="round"/>
<polygon points="859.1,405.1 883.1,423.0 862.1,417.4" fill="#636b49" stroke="#141a0e" stroke-width="0.8" stroke-linejoin="round"/>
<polygon points="859.1,405.1 873.8,410.6 883.1,423.0" fill="#5e6645" stroke="#141a0e" stroke-width="0.8" stroke-linejoin="round"/>
<polygon points="873.8,410.6 896.8,430.5 883.1,423.0" fill="#5e6545" stroke="#141a0e" stroke-width="0.8" stroke-linejoin="round"/>
<polygon points="704.9,421.0 718.8,413.6 696.7,434.4" fill="#899364" stroke="#141a0e" stroke-width="0.8" stroke-linejoin="round"/>
<polygon points="718.8,413.6 717.0,426.3 696.7,434.4" fill="#828c60" stroke="#141a0e" stroke-width="0.8" stroke-linejoin="round"/>
<polygon points="873.8,410.6 881.6,417.5 896.8,430.5" fill="#646c49" stroke="#141a0e" stroke-width="0.8" stroke-linejoin="round"/>
<polygon points="881.6,417.5 901.8,439.2 896.8,430.5" fill="#616947" stroke="#141a0e" stroke-width="0.8" stroke-linejoin="round"/>
<polygon points="697.9,428.8 704.9,421.0 684.1,443.5" fill="#99a571" stroke="#141a0e" stroke-width="0.8" stroke-linejoin="round"/>
<polygon points="704.9,421.0 696.7,434.4 684.1,443.5" fill="#909c6a" stroke="#141a0e" stroke-width="0.8" stroke-linejoin="round"/>
<polygon points="881.6,417.5 882.1,425.2 901.8,439.2" fill="#5e6645" stroke="#141a0e" stroke-width="0.8" stroke-linejoin="round"/>
<polygon points="882.1,425.2 897.9,448.5 901.8,439.2" fill="#616947" stroke="#141a0e" stroke-width="0.8" stroke-linejoin="round"/>
<polygon points="698.4,436.5 697.9,428.8 680.2,452.8" fill="#9aa671" stroke="#141a0e" stroke-width="0.8" stroke-linejoin="round"/>
<polygon points="697.9,428.8 684.1,443.5 680.2,452.8" fill="#929e6c" stroke="#141a0e" stroke-width="0.8" stroke-linejoin="round"/>
<polygon points="882.1,425.2 875.1,433.0 897.9,448.5" fill="#626948" stroke="#141a0e" stroke-width="0.8" stroke-linejoin="round"/>
<polygon points="875.1,433.0 885.3,457.6 897.9,448.5" fill="#626a48" stroke="#141a0e" stroke-width="0.8" stroke-linejoin="round"/>
<polygon points="706.2,443.4 698.4,436.5 685.2,461.5" fill="#9ba772" stroke="#141a0e" stroke-width="0.8" stroke-linejoin="round"/>
<polygon points="698.4,436.5 680.2,452.8 685.2,461.5" fill="#98a470" stroke="#141a0e" stroke-width="0.8" stroke-linejoin="round"/>
<polygon points="875.1,433.0 861.2,440.4 885.3,457.6" fill="#5e6545" stroke="#141a0e" stroke-width="0.8" stroke-linejoin="round"/>
<polygon points="861.2,440.4 865.0,465.7 885.3,457.6" fill="#646c4a" stroke="#141a0e" stroke-width="0.8" stroke-linejoin="round"/>
<polygon points="720.9,448.9 706.2,443.4 698.9,469.0" fill="#99a571" stroke="#141a0e" stroke-width="0.8" stroke-linejoin="round"/>
<polygon points="706.2,443.4 685.2,461.5 698.9,469.0" fill="#99a571" stroke="#141a0e" stroke-width="0.8" stroke-linejoin="round"/>
<polygon points="861.2,440.4 841.6,446.6 865.0,465.7" fill="#676f4c" stroke="#141a0e" stroke-width="0.8" stroke-linejoin="round"/>
<polygon points="841.6,446.6 838.8,472.2 865.0,465.7" fill="#707953" stroke="#141a0e" stroke-width="0.8" stroke-linejoin="round"/>
<polygon points="741.2,452.7 720.9,448.9 719.9,474.6" fill="#96a26f" stroke="#141a0e" stroke-width="0.8" stroke-linejoin="round"/>
<polygon points="720.9,448.9 698.9,469.0 719.9,474.6" fill="#9ba872" stroke="#141a0e" stroke-width="0.8" stroke-linejoin="round"/>
<polygon points="841.6,446.6 817.7,451.3 838.8,472.2" fill="#747d55" stroke="#141a0e" stroke-width="0.8" stroke-linejoin="round"/>
<polygon points="817.7,451.3 808.7,476.7 838.8,472.2" fill="#798359" stroke="#141a0e" stroke-width="0.8" stroke-linejoin="round"/>
<polygon points="765.4,454.5 741.2,452.7 746.8,477.9" fill="#8e9a69" stroke="#141a0e" stroke-width="0.8" stroke-linejoin="round"/>
<polygon points="741.2,452.7 719.9,474.6 746.8,477.9" fill="#95a16e" stroke="#141a0e" stroke-width="0.8" stroke-linejoin="round"/>
<polygon points="817.7,451.3 791.6,453.9 808.7,476.7" fill="#7d875c" stroke="#141a0e" stroke-width="0.8" stroke-linejoin="round"/>
<polygon points="791.6,453.9 777.2,478.6 808.7,476.7" fill="#828c60" stroke="#141a0e" stroke-width="0.8" stroke-linejoin="round"/>
<polygon points="791.6,453.9 765.4,454.5 777.2,478.6" fill="#8a9566" stroke="#141a0e" stroke-width="0.8" stroke-linejoin="round"/>
<polygon points="765.4,454.5 746.8,477.9 777.2,478.6" fill="#8c9767" stroke="#141a0e" stroke-width="0.8" stroke-linejoin="round"/>
<polygon points="697.2,432.7 697.4,430.3 698.3,427.9 699.9,425.5 702.2,423.1 723.0,402.6 725.2,400.9 727.9,399.2 731.1,397.6 734.8,396.0 738.8,394.5 743.3,393.1 748.0,391.7 753.1,390.5 758.5,389.4 764.1,388.5 769.9,387.7 775.8,387.0 781.9,386.4 788.0,386.0 794.0,385.8 800.1,385.7 806.1,385.8 811.9,386.0 817.6,386.4 823.0,386.9 828.2,387.5 833.1,388.4 837.7,389.3 841.9,390.4 845.7,391.5 849.0,392.8 851.9,394.2 854.3,395.7 876.7,412.4 879.2,414.5 881.1,416.7 882.3,419.0 882.8,421.3 882.6,423.7 881.7,426.1 880.1,428.5 877.8,430.9 874.8,433.2 871.2,435.6 867.0,437.8 862.2,440.0 856.8,442.0 850.9,444.0 844.6,445.8 837.8,447.5 830.7,449.0 823.3,450.4 815.6,451.6 807.7,452.6 799.7,453.4 791.6,453.9 783.5,454.3 775.5,454.5 767.6,454.5 759.8,454.3 752.3,453.8 745.0,453.2 738.1,452.3 731.6,451.3 725.5,450.1 720.0,448.7 714.9,447.1 710.4,445.4 706.6,443.5 703.3,441.6 700.8,439.5 698.9,437.3 697.7,435.0" fill="#5b6243" stroke="#141a0e" stroke-width="0.9" stroke-linejoin="round"/>
<polygon points="775.8,387.0 800.1,385.7 788.4,400.1" fill="#636b49" stroke="#141a0e" stroke-width="0.8" stroke-linejoin="round"/>
<polygon points="800.1,385.7 820.2,399.7 788.4,400.1" fill="#646c49" stroke="#141a0e" stroke-width="0.8" stroke-linejoin="round"/>
<polygon points="800.1,385.7 823.0,386.9 820.2,399.7" fill="#606847" stroke="#141a0e" stroke-width="0.8" stroke-linejoin="round"/>
<polygon points="823.0,386.9 848.4,402.7 820.2,399.7" fill="#646c49" stroke="#141a0e" stroke-width="0.8" stroke-linejoin="round"/>
<polygon points="753.1,390.5 775.8,387.0 756.7,403.6" fill="#6f7852" stroke="#141a0e" stroke-width="0.8" stroke-linejoin="round"/>
<polygon points="775.8,387.0 788.4,400.1 756.7,403.6" fill="#676f4b" stroke="#141a0e" stroke-width="0.8" stroke-linejoin="round"/>
<polygon points="823.0,386.9 841.9,390.4 848.4,402.7" fill="#646c4a" stroke="#141a0e" stroke-width="0.8" stroke-linejoin="round"/>
<polygon points="841.9,390.4 869.6,408.6 848.4,402.7" fill="#646c49" stroke="#141a0e" stroke-width="0.8" stroke-linejoin="round"/>
<polygon points="734.8,396.0 753.1,390.5 729.1,410.0" fill="#7c865b" stroke="#141a0e" stroke-width="0.8" stroke-linejoin="round"/>
<polygon points="753.1,390.5 756.7,403.6 729.1,410.0" fill="#747d55" stroke="#141a0e" stroke-width="0.8" stroke-linejoin="round"/>
<polygon points="723.0,402.6 734.8,396.0 708.8,418.4" fill="#8e9968" stroke="#141a0e" stroke-width="0.8" stroke-linejoin="round"/>
<polygon points="734.8,396.0 729.1,410.0 708.8,418.4" fill="#858f62" stroke="#141a0e" stroke-width="0.8" stroke-linejoin="round"/>
<polygon points="841.9,390.4 854.3,395.7 869.6,408.6" fill="#606747" stroke="#141a0e" stroke-width="0.8" stroke-linejoin="round"/>
<polygon points="854.3,395.7 881.1,416.7 869.6,408.6" fill="#5f6646" stroke="#141a0e" stroke-width="0.8" stroke-linejoin="round"/>
<polygon points="854.3,395.7 858.9,402.3 881.1,416.7" fill="#5f6646" stroke="#141a0e" stroke-width="0.8" stroke-linejoin="round"/>
<polygon points="858.9,402.3 881.7,426.1 881.1,416.7" fill="#5f6646" stroke="#141a0e" stroke-width="0.8" stroke-linejoin="round"/>
<polygon points="719.1,409.7 723.0,402.6 698.3,427.9" fill="#9ba772" stroke="#141a0e" stroke-width="0.8" stroke-linejoin="round"/>
<polygon points="723.0,402.6 708.8,418.4 698.3,427.9" fill="#909b6a" stroke="#141a0e" stroke-width="0.8" stroke-linejoin="round"/>
<polygon points="723.7,416.3 719.1,409.7 698.9,437.3" fill="#a1ae77" stroke="#141a0e" stroke-width="0.8" stroke-linejoin="round"/>
<polygon points="719.1,409.7 698.3,427.9 698.9,437.3" fill="#9fab75" stroke="#141a0e" stroke-width="0.8" stroke-linejoin="round"/>
<polygon points="858.9,402.3 855.0,409.4 881.7,426.1" fill="#5e6545" stroke="#141a0e" stroke-width="0.8" stroke-linejoin="round"/>
<polygon points="855.0,409.4 871.2,435.6 881.7,426.1" fill="#616947" stroke="#141a0e" stroke-width="0.8" stroke-linejoin="round"/>
<polygon points="855.0,409.4 843.2,416.0 871.2,435.6" fill="#646c4a" stroke="#141a0e" stroke-width="0.8" stroke-linejoin="round"/>
<polygon points="843.2,416.0 850.9,444.0 871.2,435.6" fill="#636b49" stroke="#141a0e" stroke-width="0.8" stroke-linejoin="round"/>
<polygon points="736.1,421.6 723.7,416.3 710.4,445.4" fill="#a4b179" stroke="#141a0e" stroke-width="0.8" stroke-linejoin="round"/>
<polygon points="723.7,416.3 698.9,437.3 710.4,445.4" fill="#a3b078" stroke="#141a0e" stroke-width="0.8" stroke-linejoin="round"/>
<polygon points="843.2,416.0 824.9,421.5 850.9,444.0" fill="#676f4c" stroke="#141a0e" stroke-width="0.8" stroke-linejoin="round"/>
<polygon points="824.9,421.5 823.3,450.4 850.9,444.0" fill="#6c7550" stroke="#141a0e" stroke-width="0.8" stroke-linejoin="round"/>
<polygon points="755.0,425.1 736.1,421.6 731.6,451.3" fill="#97a36f" stroke="#141a0e" stroke-width="0.8" stroke-linejoin="round"/>
<polygon points="736.1,421.6 710.4,445.4 731.6,451.3" fill="#a0ad76" stroke="#141a0e" stroke-width="0.8" stroke-linejoin="round"/>
<polygon points="824.9,421.5 802.2,425.0 823.3,450.4" fill="#747d55" stroke="#141a0e" stroke-width="0.8" stroke-linejoin="round"/>
<polygon points="802.2,425.0 791.6,453.9 823.3,450.4" fill="#7a845a" stroke="#141a0e" stroke-width="0.8" stroke-linejoin="round"/>
<polygon points="777.9,426.3 755.0,425.1 759.8,454.3" fill="#939f6c" stroke="#141a0e" stroke-width="0.8" stroke-linejoin="round"/>
<polygon points="755.0,425.1 731.6,451.3 759.8,454.3" fill="#95a06d" stroke="#141a0e" stroke-width="0.8" stroke-linejoin="round"/>
<polygon points="802.2,425.0 777.9,426.3 791.6,453.9" fill="#869163" stroke="#141a0e" stroke-width="0.8" stroke-linejoin="round"/>
<polygon points="777.9,426.3 759.8,454.3 791.6,453.9" fill="#8c9767" stroke="#141a0e" stroke-width="0.8" stroke-linejoin="round"/>
<polygon points="719.1,409.7 719.3,407.9 720.0,406.1 731.8,380.1 732.7,378.6 734.1,377.2 735.9,375.9 738.0,374.5 740.5,373.2 743.4,371.9 746.6,370.7 750.0,369.6 753.8,368.6 757.8,367.6 762.0,366.7 766.4,366.0 771.0,365.3 775.6,364.8 780.4,364.3 785.2,364.0 790.0,363.8 794.7,363.8 799.4,363.8 804.0,364.0 808.5,364.3 812.7,364.7 816.8,365.3 820.7,365.9 824.2,366.7 827.5,367.5 830.5,368.5 833.1,369.5 835.4,370.6 837.3,371.8 838.8,373.1 839.9,374.4 857.7,398.9 858.5,400.6 858.9,402.3 858.7,404.1 858.0,405.9 856.8,407.6 855.0,409.4 852.8,411.1 850.1,412.8 846.9,414.4 843.2,416.0 839.2,417.5 834.7,418.9 830.0,420.3 824.9,421.5 819.5,422.6 813.9,423.5 808.1,424.3 802.2,425.0 796.1,425.6 790.0,426.0 784.0,426.2 777.9,426.3 771.9,426.2 766.1,426.0 760.4,425.6 755.0,425.1 749.8,424.5 744.9,423.6 740.3,422.7 736.1,421.6 732.3,420.5 729.0,419.2 726.1,417.8 723.7,416.3 721.8,414.7 720.3,413.1 719.5,411.4" fill="#5b6243" stroke="#141a0e" stroke-width="0.9" stroke-linejoin="round"/>
<polygon points="761.4,366.9 785.2,364.0 772.4,387.3" fill="#6b734f" stroke="#141a0e" stroke-width="0.8" stroke-linejoin="round"/>
<polygon points="785.2,364.0 803.5,385.7 772.4,387.3" fill="#626a48" stroke="#141a0e" stroke-width="0.8" stroke-linejoin="round"/>
<polygon points="785.2,364.0 809.1,364.4 803.5,385.7" fill="#646c49" stroke="#141a0e" stroke-width="0.8" stroke-linejoin="round"/>
<polygon points="809.1,364.4 831.8,388.1 803.5,385.7" fill="#626a48" stroke="#141a0e" stroke-width="0.8" stroke-linejoin="round"/>
<polygon points="809.1,364.4 828.4,367.8 831.8,388.1" fill="#5f6646" stroke="#141a0e" stroke-width="0.8" stroke-linejoin="round"/>
<polygon points="828.4,367.8 851.5,394.0 831.8,388.1" fill="#5e6645" stroke="#141a0e" stroke-width="0.8" stroke-linejoin="round"/>
<polygon points="742.5,372.3 761.4,366.9 744.6,392.7" fill="#828c60" stroke="#141a0e" stroke-width="0.8" stroke-linejoin="round"/>
<polygon points="761.4,366.9 772.4,387.3 744.6,392.7" fill="#7a845a" stroke="#141a0e" stroke-width="0.8" stroke-linejoin="round"/>
<polygon points="828.4,367.8 839.4,373.6 851.5,394.0" fill="#5e6645" stroke="#141a0e" stroke-width="0.8" stroke-linejoin="round"/>
<polygon points="839.4,373.6 858.9,402.3 851.5,394.0" fill="#646b49" stroke="#141a0e" stroke-width="0.8" stroke-linejoin="round"/>
<polygon points="732.3,379.3 742.5,372.3 725.6,400.6" fill="#939f6c" stroke="#141a0e" stroke-width="0.8" stroke-linejoin="round"/>
<polygon points="742.5,372.3 744.6,392.7 725.6,400.6" fill="#889264" stroke="#141a0e" stroke-width="0.8" stroke-linejoin="round"/>
<polygon points="839.4,373.6 839.7,380.7 858.9,402.3" fill="#636b49" stroke="#141a0e" stroke-width="0.8" stroke-linejoin="round"/>
<polygon points="839.7,380.7 852.4,411.4 858.9,402.3" fill="#5e6645" stroke="#141a0e" stroke-width="0.8" stroke-linejoin="round"/>
<polygon points="732.6,386.4 732.3,379.3 719.1,409.7" fill="#9ba872" stroke="#141a0e" stroke-width="0.8" stroke-linejoin="round"/>
<polygon points="732.3,379.3 725.6,400.6 719.1,409.7" fill="#94a06d" stroke="#141a0e" stroke-width="0.8" stroke-linejoin="round"/>
<polygon points="839.7,380.7 829.5,387.7 852.4,411.4" fill="#5f6646" stroke="#141a0e" stroke-width="0.8" stroke-linejoin="round"/>
<polygon points="829.5,387.7 833.4,419.3 852.4,411.4" fill="#626948" stroke="#141a0e" stroke-width="0.8" stroke-linejoin="round"/>
<polygon points="743.6,392.2 732.6,386.4 726.5,418.0" fill="#a2af77" stroke="#141a0e" stroke-width="0.8" stroke-linejoin="round"/>
<polygon points="732.6,386.4 719.1,409.7 726.5,418.0" fill="#a1ae77" stroke="#141a0e" stroke-width="0.8" stroke-linejoin="round"/>
<polygon points="829.5,387.7 810.6,393.1 833.4,419.3" fill="#69724e" stroke="#141a0e" stroke-width="0.8" stroke-linejoin="round"/>
<polygon points="810.6,393.1 805.6,424.7 833.4,419.3" fill="#727b54" stroke="#141a0e" stroke-width="0.8" stroke-linejoin="round"/>
<polygon points="762.9,395.6 743.6,392.2 746.2,423.9" fill="#9ba772" stroke="#141a0e" stroke-width="0.8" stroke-linejoin="round"/>
<polygon points="743.6,392.2 726.5,418.0 746.2,423.9" fill="#a1ae77" stroke="#141a0e" stroke-width="0.8" stroke-linejoin="round"/>
<polygon points="810.6,393.1 786.8,396.0 805.6,424.7" fill="#7a845a" stroke="#141a0e" stroke-width="0.8" stroke-linejoin="round"/>
<polygon points="786.8,396.0 774.5,426.3 805.6,424.7" fill="#848e61" stroke="#141a0e" stroke-width="0.8" stroke-linejoin="round"/>
<polygon points="786.8,396.0 762.9,395.6 774.5,426.3" fill="#8f9a69" stroke="#141a0e" stroke-width="0.8" stroke-linejoin="round"/>
<polygon points="762.9,395.6 746.2,423.9 774.5,426.3" fill="#8f9a69" stroke="#141a0e" stroke-width="0.8" stroke-linejoin="round"/>
<circle cx="683" cy="462" r="30" fill="url(#sg)" opacity="0.8"/>
<circle cx="690" cy="474" r="27" fill="url(#sgt)" opacity="0.75"/>
<polygon points="729.1,290.6 729.2,289.3 729.7,288.0 730.6,286.6 731.9,285.3 733.5,284.0 735.5,282.7 737.9,281.4 740.6,280.2 743.6,279.0 746.9,277.9 750.4,276.8 754.2,275.9 758.1,275.0 762.3,274.2 766.6,273.5 771.0,272.9 775.4,272.4 780.0,272.0 784.5,271.8 789.0,271.6 793.4,271.6 797.8,271.7 802.0,271.9 806.0,272.2 809.9,272.7 813.5,273.2 816.9,273.9 820.1,274.6 822.9,275.4 825.4,276.4 827.6,277.4 829.4,278.5 830.8,279.6 831.9,280.8 832.6,282.1 832.9,283.4 840.9,377.1 840.8,378.5 840.2,379.9 839.3,381.4 837.9,382.8 836.1,384.1 834.0,385.5 831.5,386.8 828.6,388.1 825.4,389.3 822.0,390.4 818.2,391.4 814.2,392.4 810.0,393.3 805.6,394.0 801.0,394.7 796.4,395.2 791.6,395.7 786.8,396.0 782.0,396.2 777.3,396.2 772.6,396.2 768.0,396.0 763.5,395.7 759.3,395.3 755.2,394.7 751.3,394.1 747.8,393.3 744.5,392.5 741.5,391.5 738.9,390.5 736.6,389.4 734.7,388.2 733.2,386.9 732.1,385.6 731.4,384.3 731.1,382.9" fill="#5b6243" stroke="#141a0e" stroke-width="0.9" stroke-linejoin="round"/>
<polygon points="835.5,348.6 840.9,377.1 831.8,368.9" fill="#585f41" stroke="#141a0e" stroke-width="0.8" stroke-linejoin="round"/>
<polygon points="835.5,348.6 837.1,358.1 840.9,377.1" fill="#5d6545" stroke="#141a0e" stroke-width="0.8" stroke-linejoin="round"/>
<polygon points="731.5,294.7 730.9,286.3 729.8,314.7" fill="#97a36f" stroke="#141a0e" stroke-width="0.8" stroke-linejoin="round"/>
<polygon points="730.9,286.3 735.3,306.2 729.8,314.7" fill="#8f9a69" stroke="#141a0e" stroke-width="0.8" stroke-linejoin="round"/>
<polygon points="733.3,341.6 732.2,332.0 730.6,359.8" fill="#939f6c" stroke="#141a0e" stroke-width="0.8" stroke-linejoin="round"/>
<polygon points="732.2,332.0 738.9,350.8 730.6,359.8" fill="#8e9969" stroke="#141a0e" stroke-width="0.8" stroke-linejoin="round"/>
<polygon points="833.5,303.7 836.9,331.2 829.9,323.2" fill="#5c6344" stroke="#141a0e" stroke-width="0.8" stroke-linejoin="round"/>
<polygon points="833.5,303.7 832.2,312.1 836.9,331.2" fill="#5a6242" stroke="#141a0e" stroke-width="0.8" stroke-linejoin="round"/>
<polygon points="737.6,367.0 733.5,387.3 750.7,394.0" fill="#9da973" stroke="#141a0e" stroke-width="0.8" stroke-linejoin="round"/>
<polygon points="737.6,367.0 730.6,359.8 733.5,387.3" fill="#9aa671" stroke="#141a0e" stroke-width="0.8" stroke-linejoin="round"/>
<polygon points="832.9,283.4 825.2,292.0 832.2,312.1" fill="#5d6444" stroke="#141a0e" stroke-width="0.8" stroke-linejoin="round"/>
<polygon points="825.2,292.0 814.1,320.5 832.2,312.1" fill="#596041" stroke="#141a0e" stroke-width="0.8" stroke-linejoin="round"/>
<polygon points="738.3,321.3 733.3,341.6 750.7,347.6" fill="#9ba772" stroke="#141a0e" stroke-width="0.8" stroke-linejoin="round"/>
<polygon points="738.3,321.3 729.8,314.7 733.3,341.6" fill="#99a571" stroke="#141a0e" stroke-width="0.8" stroke-linejoin="round"/>
<polygon points="836.9,331.2 827.3,339.9 837.1,358.1" fill="#5b6243" stroke="#141a0e" stroke-width="0.8" stroke-linejoin="round"/>
<polygon points="827.3,339.9 820.3,366.8 837.1,358.1" fill="#5b6243" stroke="#141a0e" stroke-width="0.8" stroke-linejoin="round"/>
<polygon points="747.8,300.7 731.5,294.7 738.3,321.3" fill="#9eaa74" stroke="#141a0e" stroke-width="0.8" stroke-linejoin="round"/>
<polygon points="731.5,294.7 729.8,314.7 738.3,321.3" fill="#97a36f" stroke="#141a0e" stroke-width="0.8" stroke-linejoin="round"/>
<polygon points="837.1,358.1 832.7,386.2 840.9,377.1" fill="#5a6242" stroke="#141a0e" stroke-width="0.8" stroke-linejoin="round"/>
<polygon points="837.1,358.1 820.3,366.8 832.7,386.2" fill="#585f41" stroke="#141a0e" stroke-width="0.8" stroke-linejoin="round"/>
<polygon points="750.7,347.6 733.3,341.6 737.6,367.0" fill="#9fac75" stroke="#141a0e" stroke-width="0.8" stroke-linejoin="round"/>
<polygon points="733.3,341.6 730.6,359.8 737.6,367.0" fill="#9fac75" stroke="#141a0e" stroke-width="0.8" stroke-linejoin="round"/>
<polygon points="832.2,312.1 827.3,339.9 836.9,331.2" fill="#596042" stroke="#141a0e" stroke-width="0.8" stroke-linejoin="round"/>
<polygon points="832.2,312.1 814.1,320.5 827.3,339.9" fill="#5c6444" stroke="#141a0e" stroke-width="0.8" stroke-linejoin="round"/>
<polygon points="763.7,372.4 750.7,394.0 779.0,396.2" fill="#9ba772" stroke="#141a0e" stroke-width="0.8" stroke-linejoin="round"/>
<polygon points="763.7,372.4 737.6,367.0 750.7,394.0" fill="#96a26f" stroke="#141a0e" stroke-width="0.8" stroke-linejoin="round"/>
<polygon points="825.2,292.0 803.5,299.1 814.1,320.5" fill="#5b6243" stroke="#141a0e" stroke-width="0.8" stroke-linejoin="round"/>
<polygon points="803.5,299.1 789.3,325.0 814.1,320.5" fill="#626a48" stroke="#141a0e" stroke-width="0.8" stroke-linejoin="round"/>
<polygon points="827.3,339.9 808.9,345.7 820.3,366.8" fill="#5e6545" stroke="#141a0e" stroke-width="0.8" stroke-linejoin="round"/>
<polygon points="808.9,345.7 789.6,372.2 820.3,366.8" fill="#626a48" stroke="#141a0e" stroke-width="0.8" stroke-linejoin="round"/>
<polygon points="762.5,325.6 750.7,347.6 779.1,349.2" fill="#95a16e" stroke="#141a0e" stroke-width="0.8" stroke-linejoin="round"/>
<polygon points="762.5,325.6 738.3,321.3 750.7,347.6" fill="#9ba772" stroke="#141a0e" stroke-width="0.8" stroke-linejoin="round"/>
<polygon points="774.7,302.3 747.8,300.7 762.5,325.6" fill="#8e9968" stroke="#141a0e" stroke-width="0.8" stroke-linejoin="round"/>
<polygon points="747.8,300.7 738.3,321.3 762.5,325.6" fill="#95a06d" stroke="#141a0e" stroke-width="0.8" stroke-linejoin="round"/>
<polygon points="779.1,349.2 750.7,347.6 763.7,372.4" fill="#8a9566" stroke="#141a0e" stroke-width="0.8" stroke-linejoin="round"/>
<polygon points="750.7,347.6 737.6,367.0 763.7,372.4" fill="#949f6d" stroke="#141a0e" stroke-width="0.8" stroke-linejoin="round"/>
<polygon points="820.3,366.8 809.6,393.3 832.7,386.2" fill="#666e4b" stroke="#141a0e" stroke-width="0.8" stroke-linejoin="round"/>
<polygon points="820.3,366.8 789.6,372.2 809.6,393.3" fill="#6f7751" stroke="#141a0e" stroke-width="0.8" stroke-linejoin="round"/>
<polygon points="814.1,320.5 808.9,345.7 827.3,339.9" fill="#68714d" stroke="#141a0e" stroke-width="0.8" stroke-linejoin="round"/>
<polygon points="814.1,320.5 789.3,325.0 808.9,345.7" fill="#737c55" stroke="#141a0e" stroke-width="0.8" stroke-linejoin="round"/>
<polygon points="808.9,345.7 779.1,349.2 789.6,372.2" fill="#757e56" stroke="#141a0e" stroke-width="0.8" stroke-linejoin="round"/>
<polygon points="779.1,349.2 763.7,372.4 789.6,372.2" fill="#808a5e" stroke="#141a0e" stroke-width="0.8" stroke-linejoin="round"/>
<polygon points="789.6,372.2 779.0,396.2 809.6,393.3" fill="#859062" stroke="#141a0e" stroke-width="0.8" stroke-linejoin="round"/>
<polygon points="789.6,372.2 763.7,372.4 779.0,396.2" fill="#8e9a69" stroke="#141a0e" stroke-width="0.8" stroke-linejoin="round"/>
<polygon points="789.3,325.0 779.1,349.2 808.9,345.7" fill="#858f62" stroke="#141a0e" stroke-width="0.8" stroke-linejoin="round"/>
<polygon points="789.3,325.0 762.5,325.6 779.1,349.2" fill="#8f9a69" stroke="#141a0e" stroke-width="0.8" stroke-linejoin="round"/>
<polygon points="803.5,299.1 774.7,302.3 789.3,325.0" fill="#757e56" stroke="#141a0e" stroke-width="0.8" stroke-linejoin="round"/>
<polygon points="774.7,302.3 762.5,325.6 789.3,325.0" fill="#7d875c" stroke="#141a0e" stroke-width="0.8" stroke-linejoin="round"/>
<circle cx="725" cy="383" r="32" fill="url(#sg)" opacity="0.8"/>
<circle cx="716" cy="292" r="28" fill="url(#sgt)" opacity="0.75"/>
<circle cx="800" cy="292" r="30" fill="url(#sgt)" opacity="0.75"/>
<polygon points="655.2,265.9 655.5,262.9 656.7,259.9 658.8,256.8 661.9,253.8 665.7,250.8 670.5,247.8 676.0,245.0 682.3,242.2 689.4,239.6 697.1,237.1 705.4,234.7 714.2,232.6 723.6,230.6 733.3,228.8 743.4,227.3 753.7,225.9 764.2,224.9 774.8,224.1 785.4,223.5 796.0,223.2 806.4,223.2 816.6,223.4 826.5,223.9 836.0,224.7 845.0,225.7 853.6,226.9 861.5,228.4 868.9,230.2 875.5,232.1 881.3,234.2 886.4,236.5 890.6,239.0 894.0,241.6 896.5,244.3 898.1,247.2 898.8,250.1 898.5,253.1 895.5,264.6 894.3,267.5 892.3,270.5 889.3,273.5 885.6,276.4 881.0,279.3 875.6,282.1 869.4,284.8 862.6,287.4 855.1,289.9 847.0,292.2 838.4,294.4 829.3,296.3 819.8,298.1 810.0,299.6 799.9,301.0 789.6,302.1 779.3,302.9 769.0,303.5 758.6,303.9 748.5,303.9 738.6,303.8 728.9,303.3 719.6,302.7 710.8,301.7 702.5,300.6 694.7,299.1 687.5,297.5 681.1,295.7 675.4,293.6 670.4,291.4 666.2,289.1 662.9,286.5 660.5,283.9 658.9,281.1 655.9,268.8" fill="#5b6243" stroke="#141a0e" stroke-width="0.9" stroke-linejoin="round"/>
<polygon points="898.7,250.1 894.4,260.0 894.8,266.5" fill="#5e6545" stroke="#141a0e" stroke-width="0.8" stroke-linejoin="round"/>
<polygon points="894.4,260.0 885.9,276.1 894.8,266.5" fill="#596041" stroke="#141a0e" stroke-width="0.8" stroke-linejoin="round"/>
<polygon points="660.8,275.1 655.3,265.9 659.8,282.9" fill="#99a671" stroke="#141a0e" stroke-width="0.8" stroke-linejoin="round"/>
<polygon points="655.3,265.9 659.2,273.5 659.8,282.9" fill="#919c6b" stroke="#141a0e" stroke-width="0.8" stroke-linejoin="round"/>
<polygon points="675.8,283.0 660.8,275.1 670.0,291.2" fill="#99a671" stroke="#141a0e" stroke-width="0.8" stroke-linejoin="round"/>
<polygon points="660.8,275.1 659.8,282.9 670.0,291.2" fill="#9ca873" stroke="#141a0e" stroke-width="0.8" stroke-linejoin="round"/>
<polygon points="894.4,260.0 880.6,269.7 885.9,276.1" fill="#5e6545" stroke="#141a0e" stroke-width="0.8" stroke-linejoin="round"/>
<polygon points="880.6,269.7 868.2,285.3 885.9,276.1" fill="#5a6142" stroke="#141a0e" stroke-width="0.8" stroke-linejoin="round"/>
<polygon points="880.6,269.7 858.4,278.5 868.2,285.3" fill="#5b6243" stroke="#141a0e" stroke-width="0.8" stroke-linejoin="round"/>
<polygon points="858.4,278.5 843.1,293.2 868.2,285.3" fill="#5e6545" stroke="#141a0e" stroke-width="0.8" stroke-linejoin="round"/>
<polygon points="698.9,288.8 675.8,283.0 688.8,297.8" fill="#98a470" stroke="#141a0e" stroke-width="0.8" stroke-linejoin="round"/>
<polygon points="675.8,283.0 670.0,291.2 688.8,297.8" fill="#96a26e" stroke="#141a0e" stroke-width="0.8" stroke-linejoin="round"/>
<polygon points="858.4,278.5 829.6,285.6 843.1,293.2" fill="#606847" stroke="#141a0e" stroke-width="0.8" stroke-linejoin="round"/>
<polygon points="829.6,285.6 812.7,299.2 843.1,293.2" fill="#666e4b" stroke="#141a0e" stroke-width="0.8" stroke-linejoin="round"/>
<polygon points="728.4,292.1 698.9,288.8 714.8,302.2" fill="#8d9968" stroke="#141a0e" stroke-width="0.8" stroke-linejoin="round"/>
<polygon points="698.9,288.8 688.8,297.8 714.8,302.2" fill="#98a470" stroke="#141a0e" stroke-width="0.8" stroke-linejoin="round"/>
<polygon points="829.6,285.6 796.5,290.5 812.7,299.2" fill="#6c7550" stroke="#141a0e" stroke-width="0.8" stroke-linejoin="round"/>
<polygon points="796.5,290.5 779.3,302.9 812.7,299.2" fill="#778158" stroke="#141a0e" stroke-width="0.8" stroke-linejoin="round"/>
<polygon points="761.8,292.7 728.4,292.1 745.8,303.9" fill="#879163" stroke="#141a0e" stroke-width="0.8" stroke-linejoin="round"/>
<polygon points="728.4,292.1 714.8,302.2 745.8,303.9" fill="#929e6b" stroke="#141a0e" stroke-width="0.8" stroke-linejoin="round"/>
<polygon points="796.5,290.5 761.8,292.7 779.3,302.9" fill="#7a845a" stroke="#141a0e" stroke-width="0.8" stroke-linejoin="round"/>
<polygon points="761.8,292.7 745.8,303.9 779.3,302.9" fill="#828c60" stroke="#141a0e" stroke-width="0.8" stroke-linejoin="round"/>
<polygon points="655.2,265.9 655.5,262.9 656.7,259.9 658.8,256.8 675.4,238.6 678.1,235.9 681.5,233.3 685.7,230.7 690.6,228.2 696.2,225.8 702.5,223.5 709.3,221.3 716.7,219.2 724.5,217.4 732.8,215.7 741.4,214.1 750.3,212.8 759.5,211.7 768.8,210.7 778.2,210.1 787.6,209.6 796.9,209.4 806.1,209.4 815.1,209.6 823.9,210.1 832.3,210.8 840.3,211.7 847.9,212.8 854.9,214.2 861.4,215.7 867.2,217.4 872.4,219.3 876.9,221.4 880.7,223.6 883.6,225.9 885.8,228.3 896.5,244.3 898.1,247.2 898.8,250.1 898.5,253.1 897.3,256.1 895.2,259.2 892.1,262.2 888.3,265.2 883.5,268.1 878.0,271.0 871.7,273.8 864.6,276.4 856.9,278.9 848.6,281.3 839.8,283.4 830.4,285.4 820.7,287.2 810.6,288.7 800.3,290.1 789.8,291.1 779.2,291.9 768.6,292.5 758.0,292.8 747.6,292.8 737.4,292.6 727.5,292.1 718.0,291.3 709.0,290.3 700.4,289.1 692.5,287.6 685.1,285.8 678.5,283.9 672.7,281.8 667.6,279.5 663.4,277.0 660.0,274.4 657.5,271.6 655.9,268.8" fill="#5b6243" stroke="#141a0e" stroke-width="0.9" stroke-linejoin="round"/>
<polygon points="778.2,210.1 808.6,209.4 792.2,223.3" fill="#646c49" stroke="#141a0e" stroke-width="0.8" stroke-linejoin="round"/>
<polygon points="808.6,209.4 825.6,223.9 792.2,223.3" fill="#5f6746" stroke="#141a0e" stroke-width="0.8" stroke-linejoin="round"/>
<polygon points="747.9,213.1 778.2,210.1 757.5,225.5" fill="#676f4c" stroke="#141a0e" stroke-width="0.8" stroke-linejoin="round"/>
<polygon points="778.2,210.1 792.2,223.3 757.5,225.5" fill="#616947" stroke="#141a0e" stroke-width="0.8" stroke-linejoin="round"/>
<polygon points="720.2,218.4 747.9,213.1 724.4,230.4" fill="#788158" stroke="#141a0e" stroke-width="0.8" stroke-linejoin="round"/>
<polygon points="747.9,213.1 757.5,225.5 724.4,230.4" fill="#6b744f" stroke="#141a0e" stroke-width="0.8" stroke-linejoin="round"/>
<polygon points="808.6,209.4 836.7,211.2 825.6,223.9" fill="#5e6645" stroke="#141a0e" stroke-width="0.8" stroke-linejoin="round"/>
<polygon points="836.7,211.2 855.1,227.2 825.6,223.9" fill="#616947" stroke="#141a0e" stroke-width="0.8" stroke-linejoin="round"/>
<polygon points="697.3,225.4 720.2,218.4 695.6,237.5" fill="#848f61" stroke="#141a0e" stroke-width="0.8" stroke-linejoin="round"/>
<polygon points="720.2,218.4 724.4,230.4 695.6,237.5" fill="#757e56" stroke="#141a0e" stroke-width="0.8" stroke-linejoin="round"/>
<polygon points="836.7,211.2 860.3,215.4 855.1,227.2" fill="#5f6746" stroke="#141a0e" stroke-width="0.8" stroke-linejoin="round"/>
<polygon points="860.3,215.4 878.2,233.0 855.1,227.2" fill="#5e6645" stroke="#141a0e" stroke-width="0.8" stroke-linejoin="round"/>
<polygon points="860.3,215.4 877.3,221.6 878.2,233.0" fill="#5e6645" stroke="#141a0e" stroke-width="0.8" stroke-linejoin="round"/>
<polygon points="877.3,221.6 893.2,240.9 878.2,233.0" fill="#5e6545" stroke="#141a0e" stroke-width="0.8" stroke-linejoin="round"/>
<polygon points="681.2,233.6 697.3,225.4 673.4,246.3" fill="#8f9a69" stroke="#141a0e" stroke-width="0.8" stroke-linejoin="round"/>
<polygon points="697.3,225.4 695.6,237.5 673.4,246.3" fill="#808b5f" stroke="#141a0e" stroke-width="0.8" stroke-linejoin="round"/>
<polygon points="877.3,221.6 886.4,229.2 893.2,240.9" fill="#5f6646" stroke="#141a0e" stroke-width="0.8" stroke-linejoin="round"/>
<polygon points="886.4,229.2 898.7,250.1 893.2,240.9" fill="#5f6746" stroke="#141a0e" stroke-width="0.8" stroke-linejoin="round"/>
<polygon points="673.0,242.3 681.2,233.6 659.6,256.0" fill="#9aa671" stroke="#141a0e" stroke-width="0.8" stroke-linejoin="round"/>
<polygon points="681.2,233.6 673.4,246.3 659.6,256.0" fill="#909c6a" stroke="#141a0e" stroke-width="0.8" stroke-linejoin="round"/>
<polygon points="886.4,229.2 887.0,237.7 898.7,250.1" fill="#5f6746" stroke="#141a0e" stroke-width="0.8" stroke-linejoin="round"/>
<polygon points="887.0,237.7 894.4,260.0 898.7,250.1" fill="#636a48" stroke="#141a0e" stroke-width="0.8" stroke-linejoin="round"/>
<polygon points="673.6,250.8 673.0,242.3 655.3,265.9" fill="#9ba772" stroke="#141a0e" stroke-width="0.8" stroke-linejoin="round"/>
<polygon points="673.0,242.3 659.6,256.0 655.3,265.9" fill="#939e6c" stroke="#141a0e" stroke-width="0.8" stroke-linejoin="round"/>
<polygon points="887.0,237.7 878.8,246.4 894.4,260.0" fill="#646c4a" stroke="#141a0e" stroke-width="0.8" stroke-linejoin="round"/>
<polygon points="878.8,246.4 880.6,269.7 894.4,260.0" fill="#636b49" stroke="#141a0e" stroke-width="0.8" stroke-linejoin="round"/>
<polygon points="682.7,258.4 673.6,250.8 660.8,275.1" fill="#9aa671" stroke="#141a0e" stroke-width="0.8" stroke-linejoin="round"/>
<polygon points="673.6,250.8 655.3,265.9 660.8,275.1" fill="#9fab75" stroke="#141a0e" stroke-width="0.8" stroke-linejoin="round"/>
<polygon points="878.8,246.4 862.7,254.6 880.6,269.7" fill="#646c4a" stroke="#141a0e" stroke-width="0.8" stroke-linejoin="round"/>
<polygon points="862.7,254.6 858.4,278.5 880.6,269.7" fill="#5f6646" stroke="#141a0e" stroke-width="0.8" stroke-linejoin="round"/>
<polygon points="699.7,264.6 682.7,258.4 675.8,283.0" fill="#a0ad76" stroke="#141a0e" stroke-width="0.8" stroke-linejoin="round"/>
<polygon points="682.7,258.4 660.8,275.1 675.8,283.0" fill="#9aa671" stroke="#141a0e" stroke-width="0.8" stroke-linejoin="round"/>
<polygon points="862.7,254.6 839.8,261.6 858.4,278.5" fill="#636b49" stroke="#141a0e" stroke-width="0.8" stroke-linejoin="round"/>
<polygon points="839.8,261.6 829.6,285.6 858.4,278.5" fill="#6a724e" stroke="#141a0e" stroke-width="0.8" stroke-linejoin="round"/>
<polygon points="723.3,268.8 699.7,264.6 698.9,288.8" fill="#9fab75" stroke="#141a0e" stroke-width="0.8" stroke-linejoin="round"/>
<polygon points="699.7,264.6 675.8,283.0 698.9,288.8" fill="#9eab74" stroke="#141a0e" stroke-width="0.8" stroke-linejoin="round"/>
<polygon points="839.8,261.6 812.1,266.9 829.6,285.6" fill="#737d55" stroke="#141a0e" stroke-width="0.8" stroke-linejoin="round"/>
<polygon points="812.1,266.9 796.5,290.5 829.6,285.6" fill="#788158" stroke="#141a0e" stroke-width="0.8" stroke-linejoin="round"/>
<polygon points="751.4,270.6 723.3,268.8 728.4,292.1" fill="#909c6a" stroke="#141a0e" stroke-width="0.8" stroke-linejoin="round"/>
<polygon points="723.3,268.8 698.9,288.8 728.4,292.1" fill="#95a06d" stroke="#141a0e" stroke-width="0.8" stroke-linejoin="round"/>
<polygon points="812.1,266.9 781.8,269.9 796.5,290.5" fill="#7a845a" stroke="#141a0e" stroke-width="0.8" stroke-linejoin="round"/>
<polygon points="781.8,269.9 761.8,292.7 796.5,290.5" fill="#859062" stroke="#141a0e" stroke-width="0.8" stroke-linejoin="round"/>
<polygon points="781.8,269.9 751.4,270.6 761.8,292.7" fill="#8d9868" stroke="#141a0e" stroke-width="0.8" stroke-linejoin="round"/>
<polygon points="751.4,270.6 728.4,292.1 761.8,292.7" fill="#939f6d" stroke="#141a0e" stroke-width="0.8" stroke-linejoin="round"/>
<polygon points="672.2,246.6 672.5,244.0 673.5,241.3 675.4,238.6 678.1,235.9 705.4,214.3 707.9,212.4 711.0,210.6 714.5,208.7 718.6,207.0 723.1,205.3 728.0,203.8 733.4,202.3 739.1,201.0 745.0,199.8 751.3,198.8 757.7,197.8 764.3,197.1 771.1,196.5 777.9,196.0 784.6,195.8 791.4,195.7 798.0,195.7 804.6,196.0 810.9,196.4 817.0,196.9 822.7,197.7 828.2,198.6 833.3,199.6 837.9,200.8 842.1,202.1 845.9,203.5 849.1,205.0 880.7,223.6 883.6,225.9 885.8,228.3 887.2,230.8 887.8,233.4 887.5,236.0 886.5,238.7 884.6,241.4 881.9,244.1 878.5,246.7 874.3,249.3 869.4,251.8 863.8,254.2 857.5,256.5 850.7,258.7 843.3,260.8 835.5,262.6 827.2,264.4 818.6,265.9 809.7,267.2 800.5,268.3 791.2,269.3 781.8,269.9 772.4,270.4 763.1,270.6 753.9,270.6 744.9,270.4 736.1,269.9 727.7,269.2 719.7,268.3 712.1,267.2 705.1,265.8 698.6,264.3 692.8,262.6 687.6,260.7 683.1,258.6 679.3,256.4 676.4,254.1 674.2,251.7 672.8,249.2" fill="#5b6243" stroke="#141a0e" stroke-width="0.9" stroke-linejoin="round"/>
<polygon points="764.3,197.1 791.4,195.7 778.2,210.1" fill="#616947" stroke="#141a0e" stroke-width="0.8" stroke-linejoin="round"/>
<polygon points="791.4,195.7 815.1,209.6 778.2,210.1" fill="#5e6545" stroke="#141a0e" stroke-width="0.8" stroke-linejoin="round"/>
<polygon points="791.4,195.7 816.9,196.9 815.1,209.6" fill="#5e6645" stroke="#141a0e" stroke-width="0.8" stroke-linejoin="round"/>
<polygon points="816.9,196.9 847.9,212.8 815.1,209.6" fill="#5e6545" stroke="#141a0e" stroke-width="0.8" stroke-linejoin="round"/>
<polygon points="739.1,201.0 764.3,197.1 741.4,214.1" fill="#727b54" stroke="#141a0e" stroke-width="0.8" stroke-linejoin="round"/>
<polygon points="764.3,197.1 778.2,210.1 741.4,214.1" fill="#68704c" stroke="#141a0e" stroke-width="0.8" stroke-linejoin="round"/>
<polygon points="816.9,196.9 837.9,200.8 847.9,212.8" fill="#626a48" stroke="#141a0e" stroke-width="0.8" stroke-linejoin="round"/>
<polygon points="837.9,200.8 872.4,219.3 847.9,212.8" fill="#5f6746" stroke="#141a0e" stroke-width="0.8" stroke-linejoin="round"/>
<polygon points="718.6,207.0 739.1,201.0 709.3,221.3" fill="#838e61" stroke="#141a0e" stroke-width="0.8" stroke-linejoin="round"/>
<polygon points="739.1,201.0 741.4,214.1 709.3,221.3" fill="#798359" stroke="#141a0e" stroke-width="0.8" stroke-linejoin="round"/>
<polygon points="705.4,214.3 718.6,207.0 685.7,230.7" fill="#939e6c" stroke="#141a0e" stroke-width="0.8" stroke-linejoin="round"/>
<polygon points="718.6,207.0 709.3,221.3 685.7,230.7" fill="#858f62" stroke="#141a0e" stroke-width="0.8" stroke-linejoin="round"/>
<polygon points="837.9,200.8 851.8,206.6 872.4,219.3" fill="#5e6645" stroke="#141a0e" stroke-width="0.8" stroke-linejoin="round"/>
<polygon points="851.8,206.6 885.8,228.3 872.4,219.3" fill="#5e6545" stroke="#141a0e" stroke-width="0.8" stroke-linejoin="round"/>
<polygon points="851.8,206.6 856.9,213.9 885.8,228.3" fill="#636b49" stroke="#141a0e" stroke-width="0.8" stroke-linejoin="round"/>
<polygon points="856.9,213.9 886.5,238.7 885.8,228.3" fill="#636b49" stroke="#141a0e" stroke-width="0.8" stroke-linejoin="round"/>
<polygon points="701.1,222.1 705.4,214.3 673.5,241.3" fill="#98a470" stroke="#141a0e" stroke-width="0.8" stroke-linejoin="round"/>
<polygon points="705.4,214.3 685.7,230.7 673.5,241.3" fill="#95a06d" stroke="#141a0e" stroke-width="0.8" stroke-linejoin="round"/>
<polygon points="706.2,229.4 701.1,222.1 674.2,251.7" fill="#a1ae77" stroke="#141a0e" stroke-width="0.8" stroke-linejoin="round"/>
<polygon points="701.1,222.1 673.5,241.3 674.2,251.7" fill="#9aa671" stroke="#141a0e" stroke-width="0.8" stroke-linejoin="round"/>
<polygon points="856.9,213.9 852.6,221.7 886.5,238.7" fill="#5f6746" stroke="#141a0e" stroke-width="0.8" stroke-linejoin="round"/>
<polygon points="852.6,221.7 874.3,249.3 886.5,238.7" fill="#616847" stroke="#141a0e" stroke-width="0.8" stroke-linejoin="round"/>
<polygon points="852.6,221.7 839.4,229.0 874.3,249.3" fill="#5f6646" stroke="#141a0e" stroke-width="0.8" stroke-linejoin="round"/>
<polygon points="839.4,229.0 850.7,258.7 874.3,249.3" fill="#606746" stroke="#141a0e" stroke-width="0.8" stroke-linejoin="round"/>
<polygon points="720.1,235.2 706.2,229.4 687.6,260.7" fill="#9eaa74" stroke="#141a0e" stroke-width="0.8" stroke-linejoin="round"/>
<polygon points="706.2,229.4 674.2,251.7 687.6,260.7" fill="#9fab75" stroke="#141a0e" stroke-width="0.8" stroke-linejoin="round"/>
<polygon points="839.4,229.0 818.9,235.0 850.7,258.7" fill="#626a48" stroke="#141a0e" stroke-width="0.8" stroke-linejoin="round"/>
<polygon points="818.9,235.0 818.6,265.9 850.7,258.7" fill="#6c7550" stroke="#141a0e" stroke-width="0.8" stroke-linejoin="round"/>
<polygon points="741.1,239.1 720.1,235.2 712.1,267.2" fill="#96a16e" stroke="#141a0e" stroke-width="0.8" stroke-linejoin="round"/>
<polygon points="720.1,235.2 687.6,260.7 712.1,267.2" fill="#a1ad76" stroke="#141a0e" stroke-width="0.8" stroke-linejoin="round"/>
<polygon points="818.9,235.0 793.7,238.9 818.6,265.9" fill="#717a53" stroke="#141a0e" stroke-width="0.8" stroke-linejoin="round"/>
<polygon points="793.7,238.9 781.8,269.9 818.6,265.9" fill="#7f895e" stroke="#141a0e" stroke-width="0.8" stroke-linejoin="round"/>
<polygon points="766.6,240.3 741.1,239.1 744.9,270.4" fill="#909c6a" stroke="#141a0e" stroke-width="0.8" stroke-linejoin="round"/>
<polygon points="741.1,239.1 712.1,267.2 744.9,270.4" fill="#9ba772" stroke="#141a0e" stroke-width="0.8" stroke-linejoin="round"/>
<polygon points="793.7,238.9 766.6,240.3 781.8,269.9" fill="#848f61" stroke="#141a0e" stroke-width="0.8" stroke-linejoin="round"/>
<polygon points="766.6,240.3 744.9,270.4 781.8,269.9" fill="#889364" stroke="#141a0e" stroke-width="0.8" stroke-linejoin="round"/>
<polygon points="701.1,222.1 701.3,220.2 702.1,218.2 703.5,216.3 723.7,189.9 725.1,188.6 726.9,187.4 729.0,186.1 731.5,184.9 734.3,183.8 737.5,182.7 740.9,181.7 744.6,180.8 748.6,180.0 752.7,179.2 757.0,178.6 761.5,178.0 766.1,177.6 770.8,177.2 775.5,177.0 780.2,176.9 784.9,176.9 789.5,177.0 794.0,177.3 798.3,177.6 802.5,178.1 806.5,178.6 810.3,179.3 813.8,180.1 817.0,180.9 819.9,181.9 822.5,182.9 824.7,184.0 826.5,185.1 828.0,186.3 853.9,208.4 855.5,210.2 856.5,212.0 856.9,213.9 856.7,215.8 855.9,217.8 854.5,219.7 852.6,221.7 850.1,223.6 847.0,225.4 843.5,227.3 839.4,229.0 834.9,230.7 830.0,232.2 824.6,233.7 818.9,235.0 813.0,236.2 806.7,237.2 800.3,238.2 793.7,238.9 786.9,239.5 780.1,240.0 773.4,240.2 766.6,240.3 760.0,240.3 753.4,240.0 747.1,239.6 741.0,239.1 735.3,238.3 729.8,237.4 724.7,236.4 720.1,235.2 715.9,233.9 712.1,232.5 708.9,231.0 706.2,229.3 704.1,227.6 702.5,225.8 701.5,224.0" fill="#5b6243" stroke="#141a0e" stroke-width="0.9" stroke-linejoin="round"/>
<polygon points="752.1,179.3 775.5,177.0 760.5,197.5" fill="#6c744f" stroke="#141a0e" stroke-width="0.8" stroke-linejoin="round"/>
<polygon points="775.5,177.0 795.2,195.7 760.5,197.5" fill="#616947" stroke="#141a0e" stroke-width="0.8" stroke-linejoin="round"/>
<polygon points="775.5,177.0 798.9,177.7 795.2,195.7" fill="#616847" stroke="#141a0e" stroke-width="0.8" stroke-linejoin="round"/>
<polygon points="798.9,177.7 826.7,198.3 795.2,195.7" fill="#5d6545" stroke="#141a0e" stroke-width="0.8" stroke-linejoin="round"/>
<polygon points="798.9,177.7 817.9,181.2 826.7,198.3" fill="#5f6746" stroke="#141a0e" stroke-width="0.8" stroke-linejoin="round"/>
<polygon points="817.9,181.2 848.7,204.8 826.7,198.3" fill="#5e6545" stroke="#141a0e" stroke-width="0.8" stroke-linejoin="round"/>
<polygon points="733.5,184.1 752.1,179.3 729.5,203.4" fill="#7e885d" stroke="#141a0e" stroke-width="0.8" stroke-linejoin="round"/>
<polygon points="752.1,179.3 760.5,197.5 729.5,203.4" fill="#768057" stroke="#141a0e" stroke-width="0.8" stroke-linejoin="round"/>
<polygon points="817.9,181.2 828.5,186.8 848.7,204.8" fill="#606847" stroke="#141a0e" stroke-width="0.8" stroke-linejoin="round"/>
<polygon points="828.5,186.8 856.9,213.9 848.7,204.8" fill="#5e6545" stroke="#141a0e" stroke-width="0.8" stroke-linejoin="round"/>
<polygon points="723.3,190.5 733.5,184.1 708.3,212.1" fill="#8f9a69" stroke="#141a0e" stroke-width="0.8" stroke-linejoin="round"/>
<polygon points="733.5,184.1 729.5,203.4 708.3,212.1" fill="#848f61" stroke="#141a0e" stroke-width="0.8" stroke-linejoin="round"/>
<polygon points="828.5,186.8 828.7,193.5 856.9,213.9" fill="#5e6545" stroke="#141a0e" stroke-width="0.8" stroke-linejoin="round"/>
<polygon points="828.7,193.5 849.7,223.9 856.9,213.9" fill="#5f6746" stroke="#141a0e" stroke-width="0.8" stroke-linejoin="round"/>
<polygon points="723.5,197.2 723.3,190.5 701.1,222.1" fill="#a1ad76" stroke="#141a0e" stroke-width="0.8" stroke-linejoin="round"/>
<polygon points="723.3,190.5 708.3,212.1 701.1,222.1" fill="#95a16e" stroke="#141a0e" stroke-width="0.8" stroke-linejoin="round"/>
<polygon points="828.7,193.5 818.5,199.9 849.7,223.9" fill="#626a48" stroke="#141a0e" stroke-width="0.8" stroke-linejoin="round"/>
<polygon points="818.5,199.9 828.5,232.6 849.7,223.9" fill="#5f6746" stroke="#141a0e" stroke-width="0.8" stroke-linejoin="round"/>
<polygon points="734.1,202.8 723.5,197.2 709.3,231.2" fill="#9fac75" stroke="#141a0e" stroke-width="0.8" stroke-linejoin="round"/>
<polygon points="723.5,197.2 701.1,222.1 709.3,231.2" fill="#9ca872" stroke="#141a0e" stroke-width="0.8" stroke-linejoin="round"/>
<polygon points="818.5,199.9 799.9,204.7 828.5,232.6" fill="#656d4a" stroke="#141a0e" stroke-width="0.8" stroke-linejoin="round"/>
<polygon points="799.9,204.7 797.5,238.5 828.5,232.6" fill="#6e7651" stroke="#141a0e" stroke-width="0.8" stroke-linejoin="round"/>
<polygon points="753.1,206.3 734.1,202.8 731.3,237.7" fill="#9eab74" stroke="#141a0e" stroke-width="0.8" stroke-linejoin="round"/>
<polygon points="734.1,202.8 709.3,231.2 731.3,237.7" fill="#a2af77" stroke="#141a0e" stroke-width="0.8" stroke-linejoin="round"/>
<polygon points="799.9,204.7 776.5,207.0 797.5,238.5" fill="#7a835a" stroke="#141a0e" stroke-width="0.8" stroke-linejoin="round"/>
<polygon points="776.5,207.0 762.8,240.3 797.5,238.5" fill="#7f8a5e" stroke="#141a0e" stroke-width="0.8" stroke-linejoin="round"/>
<polygon points="776.5,207.0 753.1,206.3 762.8,240.3" fill="#8c9767" stroke="#141a0e" stroke-width="0.8" stroke-linejoin="round"/>
<polygon points="753.1,206.3 731.3,237.7 762.8,240.3" fill="#909c6a" stroke="#141a0e" stroke-width="0.8" stroke-linejoin="round"/>
<circle cx="702" cy="210" r="30" fill="url(#sg)" opacity="0.8"/>
<circle cx="660" cy="272" r="32" fill="url(#sg)" opacity="0.8"/>
<circle cx="666" cy="284" r="27" fill="url(#sgt)" opacity="0.75"/>
<polygon points="722.8,146.5 716.8,147.2 710.8,147.9 704.8,148.6 698.8,149.4 692.8,150.1 686.8,150.8 680.8,151.5 674.8,152.3 668.8,153.0 662.8,153.7 656.8,154.5 650.8,155.2 644.8,155.9 638.8,156.6 632.8,157.4 626.8,158.1 620.8,158.8 614.8,159.5 608.8,160.3 602.8,161.0 596.8,161.7 590.9,162.4 583.6,163.5 577.0,165.1 570.8,167.1 565.1,169.7 559.7,172.7 554.8,176.3 550.3,180.4 546.2,185.0 542.4,190.2 538.9,195.9 535.8,202.2 533.0,209.5 530.3,215.3 527.6,220.9 525.0,226.5 522.4,232.1 519.8,237.7 517.1,243.3 514.5,248.8 511.9,254.4 509.3,260.0 506.6,265.6 504.0,271.2 501.4,276.8 498.8,282.3 496.1,287.9 493.5,293.5 490.9,299.1 488.3,304.7 485.6,310.3 483.0,315.8 480.4,321.4 477.8,327.0 475.1,332.6 472.5,338.2 469.9,343.8 458.1,338.2 460.7,332.7 463.4,327.1 466.0,321.5 468.6,315.9 471.2,310.3 473.9,304.7 476.5,299.2 479.1,293.6 481.7,288.0 484.4,282.4 487.0,276.8 489.6,271.2 492.2,265.7 494.9,260.1 497.5,254.5 500.1,248.9 502.7,243.3 505.4,237.7 508.0,232.2 510.6,226.6 513.2,221.0 515.9,215.4 518.5,209.8 521.0,204.5 523.9,197.0 527.5,189.7 531.5,183.0 536.1,176.8 541.1,171.2 546.7,166.2 552.7,161.8 559.2,158.1 566.1,155.0 573.4,152.6 581.2,150.7 589.1,149.6 595.2,148.8 601.2,148.1 607.2,147.4 613.2,146.6 619.2,145.9 625.2,145.2 631.2,144.5 637.2,143.7 643.2,143.0 649.2,142.3 655.2,141.5 661.2,140.8 667.2,140.1 673.2,139.4 679.2,138.6 685.2,137.9 691.2,137.2 697.2,136.5 703.2,135.7 709.2,135.0 715.2,134.3 721.2,133.5" fill="#1a2012" stroke="#141a0e" stroke-width="1.4" stroke-linejoin="round"/>
<polygon points="722.8,146.5 722.0,140.0 716.0,140.7 716.8,147.2" fill="#7a845a"/>
<polygon points="722.0,140.0 721.2,133.5 715.2,134.3 716.0,140.7" fill="#767f5a"/>
<polygon points="716.8,147.2 716.0,140.7 710.0,141.5 710.8,147.9" fill="#767f5a"/>
<polygon points="716.0,140.7 715.2,134.3 709.2,135.0 710.0,141.5" fill="#7a845a"/>
<polygon points="710.8,147.9 710.0,141.5 704.0,142.2 704.8,148.6" fill="#7a845a"/>
<polygon points="710.0,141.5 709.2,135.0 703.2,135.7 704.0,142.2" fill="#767f5a"/>
<polygon points="704.8,148.6 704.0,142.2 698.0,142.9 698.8,149.4" fill="#767f5a"/>
<polygon points="704.0,142.2 703.2,135.7 697.2,136.5 698.0,142.9" fill="#7a845a"/>
<polygon points="698.8,149.4 698.0,142.9 692.0,143.6 692.8,150.1" fill="#7a845a"/>
<polygon points="698.0,142.9 697.2,136.5 691.2,137.2 692.0,143.6" fill="#767f5a"/>
<polygon points="692.8,150.1 692.0,143.6 686.0,144.4 686.8,150.8" fill="#767f5a"/>
<polygon points="692.0,143.6 691.2,137.2 685.2,137.9 686.0,144.4" fill="#7a845a"/>
<polygon points="686.8,150.8 686.0,144.4 680.0,145.1 680.8,151.5" fill="#7a845a"/>
<polygon points="686.0,144.4 685.2,137.9 679.2,138.6 680.0,145.1" fill="#767f5a"/>
<polygon points="680.8,151.5 680.0,145.1 674.0,145.8 674.8,152.3" fill="#767f5a"/>
<polygon points="680.0,145.1 679.2,138.6 673.2,139.4 674.0,145.8" fill="#7a845a"/>
<polygon points="674.8,152.3 674.0,145.8 668.0,146.5 668.8,153.0" fill="#7a845a"/>
<polygon points="674.0,145.8 673.2,139.4 667.2,140.1 668.0,146.5" fill="#767f5a"/>
<polygon points="668.8,153.0 668.0,146.5 662.0,147.3 662.8,153.7" fill="#767f5a"/>
<polygon points="668.0,146.5 667.2,140.1 661.2,140.8 662.0,147.3" fill="#7a845a"/>
<polygon points="662.8,153.7 662.0,147.3 656.0,148.0 656.8,154.5" fill="#7a845a"/>
<polygon points="662.0,147.3 661.2,140.8 655.2,141.5 656.0,148.0" fill="#767f5a"/>
<polygon points="656.8,154.5 656.0,148.0 650.0,148.7 650.8,155.2" fill="#767f5a"/>
<polygon points="656.0,148.0 655.2,141.5 649.2,142.3 650.0,148.7" fill="#7a845a"/>
<polygon points="650.8,155.2 650.0,148.7 644.0,149.5 644.8,155.9" fill="#7a845a"/>
<polygon points="650.0,148.7 649.2,142.3 643.2,143.0 644.0,149.5" fill="#767f5a"/>
<polygon points="644.8,155.9 644.0,149.5 638.0,150.2 638.8,156.6" fill="#767f5a"/>
<polygon points="644.0,149.5 643.2,143.0 637.2,143.7 638.0,150.2" fill="#7a845a"/>
<polygon points="638.8,156.6 638.0,150.2 632.0,150.9 632.8,157.4" fill="#7a845a"/>
<polygon points="638.0,150.2 637.2,143.7 631.2,144.5 632.0,150.9" fill="#767f5a"/>
<polygon points="632.8,157.4 632.0,150.9 626.0,151.6 626.8,158.1" fill="#767f5a"/>
<polygon points="632.0,150.9 631.2,144.5 625.2,145.2 626.0,151.6" fill="#7a845a"/>
<polygon points="626.8,158.1 626.0,151.6 620.0,152.4 620.8,158.8" fill="#7a845a"/>
<polygon points="626.0,151.6 625.2,145.2 619.2,145.9 620.0,152.4" fill="#767f5a"/>
<polygon points="620.8,158.8 620.0,152.4 614.0,153.1 614.8,159.5" fill="#767f5a"/>
<polygon points="620.0,152.4 619.2,145.9 613.2,146.6 614.0,153.1" fill="#7a845a"/>
<polygon points="614.8,159.5 614.0,153.1 608.0,153.8 608.8,160.3" fill="#7a845a"/>
<polygon points="614.0,153.1 613.2,146.6 607.2,147.4 608.0,153.8" fill="#767f5a"/>
<polygon points="608.8,160.3 608.0,153.8 602.0,154.5 602.8,161.0" fill="#767f5a"/>
<polygon points="608.0,153.8 607.2,147.4 601.2,148.1 602.0,154.5" fill="#7a845a"/>
<polygon points="602.8,161.0 602.0,154.5 596.0,155.3 596.8,161.7" fill="#7a845a"/>
<polygon points="602.0,154.5 601.2,148.1 595.2,148.8 596.0,155.3" fill="#767f5a"/>
<polygon points="596.8,161.7 596.0,155.3 590.0,156.0 590.9,162.4" fill="#767f5a"/>
<polygon points="596.0,155.3 595.2,148.8 589.1,149.6 590.0,156.0" fill="#7a845a"/>
<polygon points="590.9,162.4 590.0,156.0 582.4,157.1 583.6,163.5" fill="#7a845a"/>
<polygon points="590.0,156.0 589.1,149.6 581.2,150.7 582.4,157.1" fill="#767f5a"/>
<polygon points="583.6,163.5 582.4,157.1 575.2,158.8 577.0,165.1" fill="#767f5a"/>
<polygon points="582.4,157.1 581.2,150.7 573.4,152.6 575.2,158.8" fill="#7a845a"/>
<polygon points="577.0,165.1 575.2,158.8 568.4,161.1 570.8,167.1" fill="#7a845a"/>
<polygon points="575.2,158.8 573.4,152.6 566.1,155.0 568.4,161.1" fill="#767f5a"/>
<polygon points="570.8,167.1 568.4,161.1 562.1,163.9 565.1,169.7" fill="#767f5a"/>
<polygon points="568.4,161.1 566.1,155.0 559.2,158.1 562.1,163.9" fill="#7a845a"/>
<polygon points="565.1,169.7 562.1,163.9 556.2,167.3 559.7,172.7" fill="#7a845a"/>
<polygon points="562.1,163.9 559.2,158.1 552.7,161.8 556.2,167.3" fill="#767f5a"/>
<polygon points="559.7,172.7 556.2,167.3 550.8,171.2 554.8,176.3" fill="#767f5a"/>
<polygon points="556.2,167.3 552.7,161.8 546.7,166.2 550.8,171.2" fill="#7a845a"/>
<polygon points="554.8,176.3 550.8,171.2 545.7,175.8 550.3,180.4" fill="#7a845a"/>
<polygon points="550.8,171.2 546.7,166.2 541.1,171.2 545.7,175.8" fill="#767f5a"/>
<polygon points="550.3,180.4 545.7,175.8 541.1,180.9 546.2,185.0" fill="#767f5a"/>
<polygon points="545.7,175.8 541.1,171.2 536.1,176.8 541.1,180.9" fill="#7a845a"/>
<polygon points="546.2,185.0 541.1,180.9 536.9,186.6 542.4,190.2" fill="#7a845a"/>
<polygon points="541.1,180.9 536.1,176.8 531.5,183.0 536.9,186.6" fill="#767f5a"/>
<polygon points="542.4,190.2 536.9,186.6 533.2,192.8 538.9,195.9" fill="#767f5a"/>
<polygon points="536.9,186.6 531.5,183.0 527.5,189.7 533.2,192.8" fill="#7a845a"/>
<polygon points="538.9,195.9 533.2,192.8 529.9,199.6 535.8,202.2" fill="#7a845a"/>
<polygon points="533.2,192.8 527.5,189.7 523.9,197.0 529.9,199.6" fill="#767f5a"/>
<polygon points="535.8,202.2 529.9,199.6 527.0,207.0 533.0,209.5" fill="#767f5a"/>
<polygon points="529.9,199.6 523.9,197.0 521.0,204.5 527.0,207.0" fill="#7a845a"/>
<polygon points="533.0,209.5 527.0,207.0 524.4,212.6 530.3,215.3" fill="#7a845a"/>
<polygon points="527.0,207.0 521.0,204.5 518.5,209.8 524.4,212.6" fill="#767f5a"/>
<polygon points="530.3,215.3 524.4,212.6 521.8,218.2 527.6,220.9" fill="#767f5a"/>
<polygon points="524.4,212.6 518.5,209.8 515.9,215.4 521.8,218.2" fill="#7a845a"/>
<polygon points="527.6,220.9 521.8,218.2 519.1,223.8 525.0,226.5" fill="#7a845a"/>
<polygon points="521.8,218.2 515.9,215.4 513.2,221.0 519.1,223.8" fill="#767f5a"/>
<polygon points="525.0,226.5 519.1,223.8 516.5,229.3 522.4,232.1" fill="#767f5a"/>
<polygon points="519.1,223.8 513.2,221.0 510.6,226.6 516.5,229.3" fill="#7a845a"/>
<polygon points="522.4,232.1 516.5,229.3 513.9,234.9 519.8,237.7" fill="#7a845a"/>
<polygon points="516.5,229.3 510.6,226.6 508.0,232.2 513.9,234.9" fill="#767f5a"/>
<polygon points="519.8,237.7 513.9,234.9 511.2,240.5 517.1,243.3" fill="#767f5a"/>
<polygon points="513.9,234.9 508.0,232.2 505.4,237.7 511.2,240.5" fill="#7a845a"/>
<polygon points="517.1,243.3 511.2,240.5 508.6,246.1 514.5,248.8" fill="#7a845a"/>
<polygon points="511.2,240.5 505.4,237.7 502.7,243.3 508.6,246.1" fill="#767f5a"/>
<polygon points="514.5,248.8 508.6,246.1 506.0,251.7 511.9,254.4" fill="#767f5a"/>
<polygon points="508.6,246.1 502.7,243.3 500.1,248.9 506.0,251.7" fill="#7a845a"/>
<polygon points="511.9,254.4 506.0,251.7 503.4,257.2 509.3,260.0" fill="#7a845a"/>
<polygon points="506.0,251.7 500.1,248.9 497.5,254.5 503.4,257.2" fill="#767f5a"/>
<polygon points="509.3,260.0 503.4,257.2 500.8,262.8 506.6,265.6" fill="#767f5a"/>
<polygon points="503.4,257.2 497.5,254.5 494.9,260.1 500.8,262.8" fill="#7a845a"/>
<polygon points="506.6,265.6 500.8,262.8 498.1,268.4 504.0,271.2" fill="#7a845a"/>
<polygon points="500.8,262.8 494.9,260.1 492.2,265.7 498.1,268.4" fill="#767f5a"/>
<polygon points="504.0,271.2 498.1,268.4 495.5,274.0 501.4,276.8" fill="#767f5a"/>
<polygon points="498.1,268.4 492.2,265.7 489.6,271.2 495.5,274.0" fill="#7a845a"/>
<polygon points="501.4,276.8 495.5,274.0 492.9,279.6 498.8,282.3" fill="#7a845a"/>
<polygon points="495.5,274.0 489.6,271.2 487.0,276.8 492.9,279.6" fill="#767f5a"/>
<polygon points="498.8,282.3 492.9,279.6 490.2,285.2 496.1,287.9" fill="#767f5a"/>
<polygon points="492.9,279.6 487.0,276.8 484.4,282.4 490.2,285.2" fill="#7a845a"/>
<polygon points="496.1,287.9 490.2,285.2 487.6,290.8 493.5,293.5" fill="#7a845a"/>
<polygon points="490.2,285.2 484.4,282.4 481.7,288.0 487.6,290.8" fill="#767f5a"/>
<polygon points="493.5,293.5 487.6,290.8 485.0,296.3 490.9,299.1" fill="#767f5a"/>
<polygon points="487.6,290.8 481.7,288.0 479.1,293.6 485.0,296.3" fill="#7a845a"/>
<polygon points="490.9,299.1 485.0,296.3 482.4,301.9 488.3,304.7" fill="#7a845a"/>
<polygon points="485.0,296.3 479.1,293.6 476.5,299.2 482.4,301.9" fill="#767f5a"/>
<polygon points="488.3,304.7 482.4,301.9 479.8,307.5 485.6,310.3" fill="#767f5a"/>
<polygon points="482.4,301.9 476.5,299.2 473.9,304.7 479.8,307.5" fill="#7a845a"/>
<polygon points="485.6,310.3 479.8,307.5 477.1,313.1 483.0,315.8" fill="#7a845a"/>
<polygon points="479.8,307.5 473.9,304.7 471.2,310.3 477.1,313.1" fill="#767f5a"/>
<polygon points="483.0,315.8 477.1,313.1 474.5,318.7 480.4,321.4" fill="#767f5a"/>
<polygon points="477.1,313.1 471.2,310.3 468.6,315.9 474.5,318.7" fill="#7a845a"/>
<polygon points="480.4,321.4 474.5,318.7 471.9,324.2 477.8,327.0" fill="#7a845a"/>
<polygon points="474.5,318.7 468.6,315.9 466.0,321.5 471.9,324.2" fill="#767f5a"/>
<polygon points="477.8,327.0 471.9,324.2 469.2,329.8 475.1,332.6" fill="#767f5a"/>
<polygon points="471.9,324.2 466.0,321.5 463.4,327.1 469.2,329.8" fill="#7a845a"/>
<polygon points="475.1,332.6 469.2,329.8 466.6,335.4 472.5,338.2" fill="#7a845a"/>
<polygon points="469.2,329.8 463.4,327.1 460.7,332.7 466.6,335.4" fill="#767f5a"/>
<polygon points="472.5,338.2 466.6,335.4 464.0,341.0 469.9,343.8" fill="#767f5a"/>
<polygon points="466.6,335.4 460.7,332.7 458.1,338.2 464.0,341.0" fill="#7a845a"/>
<path d="M722.8,146.5L716.8,147.2L716.0,140.7M722.8,146.5L716.0,140.7M722.0,140.0L716.8,147.2M722.0,140.0L716.0,140.7L715.2,134.3M722.0,140.0L715.2,134.3M721.2,133.5L716.0,140.7M716.8,147.2L710.8,147.9L710.0,141.5M716.8,147.2L710.0,141.5M716.0,140.7L710.8,147.9M716.0,140.7L710.0,141.5L709.2,135.0M716.0,140.7L709.2,135.0M715.2,134.3L710.0,141.5M710.8,147.9L704.8,148.6L704.0,142.2M710.8,147.9L704.0,142.2M710.0,141.5L704.8,148.6M710.0,141.5L704.0,142.2L703.2,135.7M710.0,141.5L703.2,135.7M709.2,135.0L704.0,142.2M704.8,148.6L698.8,149.4L698.0,142.9M704.8,148.6L698.0,142.9M704.0,142.2L698.8,149.4M704.0,142.2L698.0,142.9L697.2,136.5M704.0,142.2L697.2,136.5M703.2,135.7L698.0,142.9M698.8,149.4L692.8,150.1L692.0,143.6M698.8,149.4L692.0,143.6M698.0,142.9L692.8,150.1M698.0,142.9L692.0,143.6L691.2,137.2M698.0,142.9L691.2,137.2M697.2,136.5L692.0,143.6M692.8,150.1L686.8,150.8L686.0,144.4M692.8,150.1L686.0,144.4M692.0,143.6L686.8,150.8M692.0,143.6L686.0,144.4L685.2,137.9M692.0,143.6L685.2,137.9M691.2,137.2L686.0,144.4M686.8,150.8L680.8,151.5L680.0,145.1M686.8,150.8L680.0,145.1M686.0,144.4L680.8,151.5M686.0,144.4L680.0,145.1L679.2,138.6M686.0,144.4L679.2,138.6M685.2,137.9L680.0,145.1M680.8,151.5L674.8,152.3L674.0,145.8M680.8,151.5L674.0,145.8M680.0,145.1L674.8,152.3M680.0,145.1L674.0,145.8L673.2,139.4M680.0,145.1L673.2,139.4M679.2,138.6L674.0,145.8M674.8,152.3L668.8,153.0L668.0,146.5M674.8,152.3L668.0,146.5M674.0,145.8L668.8,153.0M674.0,145.8L668.0,146.5L667.2,140.1M674.0,145.8L667.2,140.1M673.2,139.4L668.0,146.5M668.8,153.0L662.8,153.7L662.0,147.3M668.8,153.0L662.0,147.3M668.0,146.5L662.8,153.7M668.0,146.5L662.0,147.3L661.2,140.8M668.0,146.5L661.2,140.8M667.2,140.1L662.0,147.3M662.8,153.7L656.8,154.5L656.0,148.0M662.8,153.7L656.0,148.0M662.0,147.3L656.8,154.5M662.0,147.3L656.0,148.0L655.2,141.5M662.0,147.3L655.2,141.5M661.2,140.8L656.0,148.0M656.8,154.5L650.8,155.2L650.0,148.7M656.8,154.5L650.0,148.7M656.0,148.0L650.8,155.2M656.0,148.0L650.0,148.7L649.2,142.3M656.0,148.0L649.2,142.3M655.2,141.5L650.0,148.7M650.8,155.2L644.8,155.9L644.0,149.5M650.8,155.2L644.0,149.5M650.0,148.7L644.8,155.9M650.0,148.7L644.0,149.5L643.2,143.0M650.0,148.7L643.2,143.0M649.2,142.3L644.0,149.5M644.8,155.9L638.8,156.6L638.0,150.2M644.8,155.9L638.0,150.2M644.0,149.5L638.8,156.6M644.0,149.5L638.0,150.2L637.2,143.7M644.0,149.5L637.2,143.7M643.2,143.0L638.0,150.2M638.8,156.6L632.8,157.4L632.0,150.9M638.8,156.6L632.0,150.9M638.0,150.2L632.8,157.4M638.0,150.2L632.0,150.9L631.2,144.5M638.0,150.2L631.2,144.5M637.2,143.7L632.0,150.9M632.8,157.4L626.8,158.1L626.0,151.6M632.8,157.4L626.0,151.6M632.0,150.9L626.8,158.1M632.0,150.9L626.0,151.6L625.2,145.2M632.0,150.9L625.2,145.2M631.2,144.5L626.0,151.6M626.8,158.1L620.8,158.8L620.0,152.4M626.8,158.1L620.0,152.4M626.0,151.6L620.8,158.8M626.0,151.6L620.0,152.4L619.2,145.9M626.0,151.6L619.2,145.9M625.2,145.2L620.0,152.4M620.8,158.8L614.8,159.5L614.0,153.1M620.8,158.8L614.0,153.1M620.0,152.4L614.8,159.5M620.0,152.4L614.0,153.1L613.2,146.6M620.0,152.4L613.2,146.6M619.2,145.9L614.0,153.1M614.8,159.5L608.8,160.3L608.0,153.8M614.8,159.5L608.0,153.8M614.0,153.1L608.8,160.3M614.0,153.1L608.0,153.8L607.2,147.4M614.0,153.1L607.2,147.4M613.2,146.6L608.0,153.8M608.8,160.3L602.8,161.0L602.0,154.5M608.8,160.3L602.0,154.5M608.0,153.8L602.8,161.0M608.0,153.8L602.0,154.5L601.2,148.1M608.0,153.8L601.2,148.1M607.2,147.4L602.0,154.5M602.8,161.0L596.8,161.7L596.0,155.3M602.8,161.0L596.0,155.3M602.0,154.5L596.8,161.7M602.0,154.5L596.0,155.3L595.2,148.8M602.0,154.5L595.2,148.8M601.2,148.1L596.0,155.3M596.8,161.7L590.9,162.4L590.0,156.0M596.8,161.7L590.0,156.0M596.0,155.3L590.9,162.4M596.0,155.3L590.0,156.0L589.1,149.6M596.0,155.3L589.1,149.6M595.2,148.8L590.0,156.0M590.9,162.4L583.6,163.5L582.4,157.1M590.9,162.4L582.4,157.1M590.0,156.0L583.6,163.5M590.0,156.0L582.4,157.1L581.2,150.7M590.0,156.0L581.2,150.7M589.1,149.6L582.4,157.1M583.6,163.5L577.0,165.1L575.2,158.8M583.6,163.5L575.2,158.8M582.4,157.1L577.0,165.1M582.4,157.1L575.2,158.8L573.4,152.6M582.4,157.1L573.4,152.6M581.2,150.7L575.2,158.8M577.0,165.1L570.8,167.1L568.4,161.1M577.0,165.1L568.4,161.1M575.2,158.8L570.8,167.1M575.2,158.8L568.4,161.1L566.1,155.0M575.2,158.8L566.1,155.0M573.4,152.6L568.4,161.1M570.8,167.1L565.1,169.7L562.1,163.9M570.8,167.1L562.1,163.9M568.4,161.1L565.1,169.7M568.4,161.1L562.1,163.9L559.2,158.1M568.4,161.1L559.2,158.1M566.1,155.0L562.1,163.9M565.1,169.7L559.7,172.7L556.2,167.3M565.1,169.7L556.2,167.3M562.1,163.9L559.7,172.7M562.1,163.9L556.2,167.3L552.7,161.8M562.1,163.9L552.7,161.8M559.2,158.1L556.2,167.3M559.7,172.7L554.8,176.3L550.8,171.2M559.7,172.7L550.8,171.2M556.2,167.3L554.8,176.3M556.2,167.3L550.8,171.2L546.7,166.2M556.2,167.3L546.7,166.2M552.7,161.8L550.8,171.2M554.8,176.3L550.3,180.4L545.7,175.8M554.8,176.3L545.7,175.8M550.8,171.2L550.3,180.4M550.8,171.2L545.7,175.8L541.1,171.2M550.8,171.2L541.1,171.2M546.7,166.2L545.7,175.8M550.3,180.4L546.2,185.0L541.1,180.9M550.3,180.4L541.1,180.9M545.7,175.8L546.2,185.0M545.7,175.8L541.1,180.9L536.1,176.8M545.7,175.8L536.1,176.8M541.1,171.2L541.1,180.9M546.2,185.0L542.4,190.2L536.9,186.6M546.2,185.0L536.9,186.6M541.1,180.9L542.4,190.2M541.1,180.9L536.9,186.6L531.5,183.0M541.1,180.9L531.5,183.0M536.1,176.8L536.9,186.6M542.4,190.2L538.9,195.9L533.2,192.8M542.4,190.2L533.2,192.8M536.9,186.6L538.9,195.9M536.9,186.6L533.2,192.8L527.5,189.7M536.9,186.6L527.5,189.7M531.5,183.0L533.2,192.8M538.9,195.9L535.8,202.2L529.9,199.6M538.9,195.9L529.9,199.6M533.2,192.8L535.8,202.2M533.2,192.8L529.9,199.6L523.9,197.0M533.2,192.8L523.9,197.0M527.5,189.7L529.9,199.6M535.8,202.2L533.0,209.5L527.0,207.0M535.8,202.2L527.0,207.0M529.9,199.6L533.0,209.5M529.9,199.6L527.0,207.0L521.0,204.5M529.9,199.6L521.0,204.5M523.9,197.0L527.0,207.0M533.0,209.5L530.3,215.3L524.4,212.6M533.0,209.5L524.4,212.6M527.0,207.0L530.3,215.3M527.0,207.0L524.4,212.6L518.5,209.8M527.0,207.0L518.5,209.8M521.0,204.5L524.4,212.6M530.3,215.3L527.6,220.9L521.8,218.2M530.3,215.3L521.8,218.2M524.4,212.6L527.6,220.9M524.4,212.6L521.8,218.2L515.9,215.4M524.4,212.6L515.9,215.4M518.5,209.8L521.8,218.2M527.6,220.9L525.0,226.5L519.1,223.8M527.6,220.9L519.1,223.8M521.8,218.2L525.0,226.5M521.8,218.2L519.1,223.8L513.2,221.0M521.8,218.2L513.2,221.0M515.9,215.4L519.1,223.8M525.0,226.5L522.4,232.1L516.5,229.3M525.0,226.5L516.5,229.3M519.1,223.8L522.4,232.1M519.1,223.8L516.5,229.3L510.6,226.6M519.1,223.8L510.6,226.6M513.2,221.0L516.5,229.3M522.4,232.1L519.8,237.7L513.9,234.9M522.4,232.1L513.9,234.9M516.5,229.3L519.8,237.7M516.5,229.3L513.9,234.9L508.0,232.2M516.5,229.3L508.0,232.2M510.6,226.6L513.9,234.9M519.8,237.7L517.1,243.3L511.2,240.5M519.8,237.7L511.2,240.5M513.9,234.9L517.1,243.3M513.9,234.9L511.2,240.5L505.4,237.7M513.9,234.9L505.4,237.7M508.0,232.2L511.2,240.5M517.1,243.3L514.5,248.8L508.6,246.1M517.1,243.3L508.6,246.1M511.2,240.5L514.5,248.8M511.2,240.5L508.6,246.1L502.7,243.3M511.2,240.5L502.7,243.3M505.4,237.7L508.6,246.1M514.5,248.8L511.9,254.4L506.0,251.7M514.5,248.8L506.0,251.7M508.6,246.1L511.9,254.4M508.6,246.1L506.0,251.7L500.1,248.9M508.6,246.1L500.1,248.9M502.7,243.3L506.0,251.7M511.9,254.4L509.3,260.0L503.4,257.2M511.9,254.4L503.4,257.2M506.0,251.7L509.3,260.0M506.0,251.7L503.4,257.2L497.5,254.5M506.0,251.7L497.5,254.5M500.1,248.9L503.4,257.2M509.3,260.0L506.6,265.6L500.8,262.8M509.3,260.0L500.8,262.8M503.4,257.2L506.6,265.6M503.4,257.2L500.8,262.8L494.9,260.1M503.4,257.2L494.9,260.1M497.5,254.5L500.8,262.8M506.6,265.6L504.0,271.2L498.1,268.4M506.6,265.6L498.1,268.4M500.8,262.8L504.0,271.2M500.8,262.8L498.1,268.4L492.2,265.7M500.8,262.8L492.2,265.7M494.9,260.1L498.1,268.4M504.0,271.2L501.4,276.8L495.5,274.0M504.0,271.2L495.5,274.0M498.1,268.4L501.4,276.8M498.1,268.4L495.5,274.0L489.6,271.2M498.1,268.4L489.6,271.2M492.2,265.7L495.5,274.0M501.4,276.8L498.8,282.3L492.9,279.6M501.4,276.8L492.9,279.6M495.5,274.0L498.8,282.3M495.5,274.0L492.9,279.6L487.0,276.8M495.5,274.0L487.0,276.8M489.6,271.2L492.9,279.6M498.8,282.3L496.1,287.9L490.2,285.2M498.8,282.3L490.2,285.2M492.9,279.6L496.1,287.9M492.9,279.6L490.2,285.2L484.4,282.4M492.9,279.6L484.4,282.4M487.0,276.8L490.2,285.2M496.1,287.9L493.5,293.5L487.6,290.8M496.1,287.9L487.6,290.8M490.2,285.2L493.5,293.5M490.2,285.2L487.6,290.8L481.7,288.0M490.2,285.2L481.7,288.0M484.4,282.4L487.6,290.8M493.5,293.5L490.9,299.1L485.0,296.3M493.5,293.5L485.0,296.3M487.6,290.8L490.9,299.1M487.6,290.8L485.0,296.3L479.1,293.6M487.6,290.8L479.1,293.6M481.7,288.0L485.0,296.3M490.9,299.1L488.3,304.7L482.4,301.9M490.9,299.1L482.4,301.9M485.0,296.3L488.3,304.7M485.0,296.3L482.4,301.9L476.5,299.2M485.0,296.3L476.5,299.2M479.1,293.6L482.4,301.9M488.3,304.7L485.6,310.3L479.8,307.5M488.3,304.7L479.8,307.5M482.4,301.9L485.6,310.3M482.4,301.9L479.8,307.5L473.9,304.7M482.4,301.9L473.9,304.7M476.5,299.2L479.8,307.5M485.6,310.3L483.0,315.8L477.1,313.1M485.6,310.3L477.1,313.1M479.8,307.5L483.0,315.8M479.8,307.5L477.1,313.1L471.2,310.3M479.8,307.5L471.2,310.3M473.9,304.7L477.1,313.1M483.0,315.8L480.4,321.4L474.5,318.7M483.0,315.8L474.5,318.7M477.1,313.1L480.4,321.4M477.1,313.1L474.5,318.7L468.6,315.9M477.1,313.1L468.6,315.9M471.2,310.3L474.5,318.7M480.4,321.4L477.8,327.0L471.9,324.2M480.4,321.4L471.9,324.2M474.5,318.7L477.8,327.0M474.5,318.7L471.9,324.2L466.0,321.5M474.5,318.7L466.0,321.5M468.6,315.9L471.9,324.2M477.8,327.0L475.1,332.6L469.2,329.8M477.8,327.0L469.2,329.8M471.9,324.2L475.1,332.6M471.9,324.2L469.2,329.8L463.4,327.1M471.9,324.2L463.4,327.1M466.0,321.5L469.2,329.8M475.1,332.6L472.5,338.2L466.6,335.4M475.1,332.6L466.6,335.4M469.2,329.8L472.5,338.2M469.2,329.8L466.6,335.4L460.7,332.7M469.2,329.8L460.7,332.7M463.4,327.1L466.6,335.4M472.5,338.2L469.9,343.8L464.0,341.0M472.5,338.2L464.0,341.0M466.6,335.4L469.9,343.8M466.6,335.4L464.0,341.0L458.1,338.2M466.6,335.4L458.1,338.2M460.7,332.7L464.0,341.0" fill="none" stroke="#141a0e" stroke-width="0.7"/>
<polygon points="722.0,193.9 723.0,169.8 723.2,168.6 723.7,167.3 724.6,166.1 725.9,164.9 727.6,163.7 729.6,162.6 732.0,161.4 734.6,160.4 737.6,159.4 740.9,158.4 744.4,157.6 748.1,156.8 752.0,156.1 756.1,155.5 760.3,154.9 764.7,154.5 769.1,154.2 773.5,154.0 778.0,153.9 782.4,153.9 786.7,154.0 791.0,154.2 795.1,154.6 799.1,155.0 802.8,155.5 806.4,156.1 809.7,156.8 812.7,157.6 815.5,158.5 817.9,159.5 820.0,160.5 821.7,161.5 823.1,162.7 824.1,163.8 824.7,165.0 829.7,188.8 830.0,190.1 829.8,191.4 829.2,192.8 828.3,194.1 826.9,195.4 825.1,196.6 823.0,197.9 820.5,199.1 817.7,200.2 814.5,201.3 811.1,202.3 807.4,203.2 803.4,204.0 799.3,204.8 795.0,205.4 790.5,206.0 785.9,206.4 781.2,206.8 776.5,207.0 771.8,207.1 767.1,207.1 762.5,207.0 758.0,206.7 753.7,206.4 749.5,205.9 745.5,205.4 741.7,204.7 738.2,203.9 735.0,203.1 732.1,202.1 729.5,201.1 727.3,200.0 725.5,198.9 724.0,197.7 722.9,196.5 722.3,195.2" fill="#5b6243" stroke="#141a0e" stroke-width="0.9" stroke-linejoin="round"/>
<polygon points="730.1,176.5 723.0,169.8 724.0,197.7" fill="#97a36f" stroke="#141a0e" stroke-width="0.8" stroke-linejoin="round"/>
<polygon points="723.0,169.8 723.7,189.9 724.0,197.7" fill="#9aa772" stroke="#141a0e" stroke-width="0.8" stroke-linejoin="round"/>
<polygon points="825.0,166.2 818.4,173.5 828.3,194.1" fill="#596041" stroke="#141a0e" stroke-width="0.8" stroke-linejoin="round"/>
<polygon points="818.4,173.5 814.5,201.3 828.3,194.1" fill="#5b6243" stroke="#141a0e" stroke-width="0.8" stroke-linejoin="round"/>
<polygon points="818.4,173.5 799.9,179.2 814.5,201.3" fill="#5b6243" stroke="#141a0e" stroke-width="0.8" stroke-linejoin="round"/>
<polygon points="799.9,179.2 790.5,206.0 814.5,201.3" fill="#5f6646" stroke="#141a0e" stroke-width="0.8" stroke-linejoin="round"/>
<polygon points="748.9,181.0 730.1,176.5 738.2,203.9" fill="#96a26e" stroke="#141a0e" stroke-width="0.8" stroke-linejoin="round"/>
<polygon points="730.1,176.5 724.0,197.7 738.2,203.9" fill="#a0ac76" stroke="#141a0e" stroke-width="0.8" stroke-linejoin="round"/>
<polygon points="799.9,179.2 774.5,182.0 790.5,206.0" fill="#6f7852" stroke="#141a0e" stroke-width="0.8" stroke-linejoin="round"/>
<polygon points="774.5,182.0 762.5,207.0 790.5,206.0" fill="#7a845a" stroke="#141a0e" stroke-width="0.8" stroke-linejoin="round"/>
<polygon points="774.5,182.0 748.9,181.0 762.5,207.0" fill="#8b9666" stroke="#141a0e" stroke-width="0.8" stroke-linejoin="round"/>
<polygon points="748.9,181.0 738.2,203.9 762.5,207.0" fill="#8e9968" stroke="#141a0e" stroke-width="0.8" stroke-linejoin="round"/>
<polygon points="722.1,152.6 722.2,151.4 722.7,150.2 723.6,148.9 724.8,147.7 726.4,146.5 728.4,145.3 730.7,144.1 733.3,143.0 736.2,142.0 739.3,141.0 742.8,140.1 746.4,139.2 750.2,138.4 754.2,137.8 758.4,137.2 762.6,136.7 766.9,136.3 771.3,136.0 775.6,135.8 780.0,135.8 784.2,135.8 788.4,136.0 792.4,136.2 796.3,136.6 800.0,137.1 803.5,137.6 806.8,138.3 809.8,139.0 812.5,139.8 814.9,140.7 816.9,141.7 818.7,142.8 820.0,143.8 821.0,145.0 821.7,146.2 821.9,147.4 825.0,166.2 824.8,167.4 824.3,168.7 823.4,169.9 822.1,171.1 820.4,172.3 818.4,173.4 816.0,174.6 813.4,175.6 810.4,176.6 807.1,177.6 803.6,178.4 799.9,179.2 796.0,179.9 791.9,180.5 787.7,181.1 783.3,181.5 778.9,181.8 774.5,182.0 770.0,182.1 765.6,182.1 761.3,182.0 757.0,181.8 752.9,181.4 748.9,181.0 745.2,180.5 741.6,179.9 738.3,179.2 735.3,178.4 732.5,177.5 730.1,176.5 728.0,175.5 726.3,174.5 724.9,173.3 723.9,172.2 723.3,171.0 723.0,169.8" fill="#5b6243" stroke="#141a0e" stroke-width="0.9" stroke-linejoin="round"/>
<polygon points="820.0,143.9 820.4,151.1 825.0,166.2" fill="#5d6444" stroke="#141a0e" stroke-width="0.8" stroke-linejoin="round"/>
<polygon points="820.4,151.1 818.4,173.5 825.0,166.2" fill="#5b6243" stroke="#141a0e" stroke-width="0.8" stroke-linejoin="round"/>
<polygon points="724.0,156.1 723.6,148.9 723.0,169.8" fill="#9aa772" stroke="#141a0e" stroke-width="0.8" stroke-linejoin="round"/>
<polygon points="723.6,148.9 729.6,162.5 723.0,169.8" fill="#95a16d" stroke="#141a0e" stroke-width="0.8" stroke-linejoin="round"/>
<polygon points="820.4,151.1 807.8,158.0 818.4,173.5" fill="#5c6343" stroke="#141a0e" stroke-width="0.8" stroke-linejoin="round"/>
<polygon points="807.8,158.0 799.9,179.2 818.4,173.5" fill="#585f41" stroke="#141a0e" stroke-width="0.8" stroke-linejoin="round"/>
<polygon points="737.2,161.7 724.0,156.1 730.1,176.5" fill="#9ba772" stroke="#141a0e" stroke-width="0.8" stroke-linejoin="round"/>
<polygon points="724.0,156.1 723.0,169.8 730.1,176.5" fill="#9ba772" stroke="#141a0e" stroke-width="0.8" stroke-linejoin="round"/>
<polygon points="807.8,158.0 785.6,162.8 799.9,179.2" fill="#636a49" stroke="#141a0e" stroke-width="0.8" stroke-linejoin="round"/>
<polygon points="785.6,162.8 774.5,182.0 799.9,179.2" fill="#6e7751" stroke="#141a0e" stroke-width="0.8" stroke-linejoin="round"/>
<polygon points="759.8,164.2 737.2,161.7 748.9,181.0" fill="#94a06d" stroke="#141a0e" stroke-width="0.8" stroke-linejoin="round"/>
<polygon points="737.2,161.7 730.1,176.5 748.9,181.0" fill="#939e6c" stroke="#141a0e" stroke-width="0.8" stroke-linejoin="round"/>
<polygon points="785.6,162.8 759.8,164.2 774.5,182.0" fill="#7d865c" stroke="#141a0e" stroke-width="0.8" stroke-linejoin="round"/>
<polygon points="759.8,164.2 748.9,181.0 774.5,182.0" fill="#879263" stroke="#141a0e" stroke-width="0.8" stroke-linejoin="round"/>
<polygon points="714.1,120.9 714.2,119.5 714.8,118.1 715.7,116.6 717.1,115.2 718.9,113.9 721.0,112.5 723.5,111.2 726.4,109.9 729.6,108.7 733.0,107.6 736.8,106.6 740.8,105.6 745.0,104.7 749.4,104.0 754.0,103.3 758.6,102.8 763.4,102.3 768.2,102.0 773.0,101.8 777.7,101.8 782.4,101.8 787.0,102.0 791.5,102.3 795.7,102.7 799.8,103.3 803.7,103.9 807.2,104.7 810.5,105.5 813.5,106.5 816.1,107.5 818.4,108.6 820.3,109.8 821.8,111.1 822.9,112.4 823.6,113.7 823.9,115.1 825.9,140.1 825.8,141.5 825.2,142.9 824.3,144.4 822.9,145.8 821.1,147.1 819.0,148.5 816.5,149.8 813.6,151.1 810.4,152.3 807.0,153.4 803.2,154.4 799.2,155.4 795.0,156.3 790.6,157.0 786.0,157.7 781.4,158.2 776.6,158.7 771.8,159.0 767.0,159.2 762.3,159.2 757.6,159.2 753.0,159.0 748.5,158.7 744.3,158.3 740.2,157.7 736.3,157.1 732.8,156.3 729.5,155.5 726.5,154.5 723.9,153.5 721.6,152.4 719.7,151.2 718.2,149.9 717.1,148.6 716.4,147.3 716.1,145.9" fill="#565d3f" stroke="#141a0e" stroke-width="0.9" stroke-linejoin="round"/>
<polygon points="822.6,111.9 823.9,115.1 824.5,126.0" fill="#545b3e" stroke="#141a0e" stroke-width="0.8" stroke-linejoin="round"/>
<polygon points="823.9,115.1 824.6,129.7 824.5,126.0" fill="#596041" stroke="#141a0e" stroke-width="0.8" stroke-linejoin="round"/>
<polygon points="714.1,120.9 715.1,117.5 715.4,131.4" fill="#8c9867" stroke="#141a0e" stroke-width="0.8" stroke-linejoin="round"/>
<polygon points="715.1,117.5 717.8,128.0 715.4,131.4" fill="#858f62" stroke="#141a0e" stroke-width="0.8" stroke-linejoin="round"/>
<polygon points="715.7,135.5 716.1,145.9 717.4,149.1" fill="#939f6c" stroke="#141a0e" stroke-width="0.8" stroke-linejoin="round"/>
<polygon points="715.7,135.5 715.4,131.4 716.1,145.9" fill="#889364" stroke="#141a0e" stroke-width="0.8" stroke-linejoin="round"/>
<polygon points="824.5,126.0 825.9,140.1 824.6,136.9" fill="#555c3f" stroke="#141a0e" stroke-width="0.8" stroke-linejoin="round"/>
<polygon points="824.5,126.0 824.6,129.7 825.9,140.1" fill="#555c3f" stroke="#141a0e" stroke-width="0.8" stroke-linejoin="round"/>
<polygon points="823.9,115.1 822.9,118.5 824.6,129.7" fill="#565d3f" stroke="#141a0e" stroke-width="0.8" stroke-linejoin="round"/>
<polygon points="822.9,118.5 822.3,132.9 824.6,129.7" fill="#575e40" stroke="#141a0e" stroke-width="0.8" stroke-linejoin="round"/>
<polygon points="715.4,124.1 714.1,120.9 715.7,135.5" fill="#94a06d" stroke="#141a0e" stroke-width="0.8" stroke-linejoin="round"/>
<polygon points="714.1,120.9 715.4,131.4 715.7,135.5" fill="#929d6b" stroke="#141a0e" stroke-width="0.8" stroke-linejoin="round"/>
<polygon points="718.0,138.2 717.4,149.1 721.2,152.1" fill="#97a36f" stroke="#141a0e" stroke-width="0.8" stroke-linejoin="round"/>
<polygon points="718.0,138.2 715.7,135.5 717.4,149.1" fill="#929d6b" stroke="#141a0e" stroke-width="0.8" stroke-linejoin="round"/>
<polygon points="824.6,129.7 824.9,143.5 825.9,140.1" fill="#545b3e" stroke="#141a0e" stroke-width="0.8" stroke-linejoin="round"/>
<polygon points="824.6,129.7 822.3,132.9 824.9,143.5" fill="#575e40" stroke="#141a0e" stroke-width="0.8" stroke-linejoin="round"/>
<polygon points="822.9,118.5 819.5,121.9 822.3,132.9" fill="#585f41" stroke="#141a0e" stroke-width="0.8" stroke-linejoin="round"/>
<polygon points="819.5,121.9 817.7,136.2 822.3,132.9" fill="#575e40" stroke="#141a0e" stroke-width="0.8" stroke-linejoin="round"/>
<polygon points="719.2,127.1 715.4,124.1 718.0,138.2" fill="#8e9a69" stroke="#141a0e" stroke-width="0.8" stroke-linejoin="round"/>
<polygon points="715.4,124.1 715.7,135.5 718.0,138.2" fill="#919c6b" stroke="#141a0e" stroke-width="0.8" stroke-linejoin="round"/>
<polygon points="722.5,140.8 721.2,152.1 727.1,154.7" fill="#97a36f" stroke="#141a0e" stroke-width="0.8" stroke-linejoin="round"/>
<polygon points="722.5,140.8 718.0,138.2 721.2,152.1" fill="#8f9a69" stroke="#141a0e" stroke-width="0.8" stroke-linejoin="round"/>
<polygon points="822.3,132.9 821.5,146.9 824.9,143.5" fill="#545b3e" stroke="#141a0e" stroke-width="0.8" stroke-linejoin="round"/>
<polygon points="822.3,132.9 817.7,136.2 821.5,146.9" fill="#565d3f" stroke="#141a0e" stroke-width="0.8" stroke-linejoin="round"/>
<polygon points="819.5,121.9 813.9,125.1 817.7,136.2" fill="#575e40" stroke="#141a0e" stroke-width="0.8" stroke-linejoin="round"/>
<polygon points="813.9,125.1 812.0,138.8 817.7,136.2" fill="#545a3d" stroke="#141a0e" stroke-width="0.8" stroke-linejoin="round"/>
<polygon points="725.1,129.7 719.2,127.1 722.5,140.8" fill="#98a470" stroke="#141a0e" stroke-width="0.8" stroke-linejoin="round"/>
<polygon points="719.2,127.1 718.0,138.2 722.5,140.8" fill="#98a470" stroke="#141a0e" stroke-width="0.8" stroke-linejoin="round"/>
<polygon points="729.4,143.3 727.1,154.7 734.9,156.8" fill="#8d9868" stroke="#141a0e" stroke-width="0.8" stroke-linejoin="round"/>
<polygon points="729.4,143.3 722.5,140.8 727.1,154.7" fill="#96a26e" stroke="#141a0e" stroke-width="0.8" stroke-linejoin="round"/>
<polygon points="817.7,136.2 815.9,150.1 821.5,146.9" fill="#596041" stroke="#141a0e" stroke-width="0.8" stroke-linejoin="round"/>
<polygon points="817.7,136.2 812.0,138.8 815.9,150.1" fill="#545b3e" stroke="#141a0e" stroke-width="0.8" stroke-linejoin="round"/>
<polygon points="813.9,125.1 806.4,127.9 812.0,138.8" fill="#545b3e" stroke="#141a0e" stroke-width="0.8" stroke-linejoin="round"/>
<polygon points="806.4,127.9 804.2,141.4 812.0,138.8" fill="#555b3e" stroke="#141a0e" stroke-width="0.8" stroke-linejoin="round"/>
<polygon points="732.9,131.8 725.1,129.7 729.4,143.3" fill="#95a16e" stroke="#141a0e" stroke-width="0.8" stroke-linejoin="round"/>
<polygon points="725.1,129.7 722.5,140.8 729.4,143.3" fill="#909b6a" stroke="#141a0e" stroke-width="0.8" stroke-linejoin="round"/>
<polygon points="812.0,138.8 808.4,152.9 815.9,150.1" fill="#585f41" stroke="#141a0e" stroke-width="0.8" stroke-linejoin="round"/>
<polygon points="812.0,138.8 804.2,141.4 808.4,152.9" fill="#5a6142" stroke="#141a0e" stroke-width="0.8" stroke-linejoin="round"/>
<polygon points="738.0,145.1 734.9,156.8 744.3,158.3" fill="#8d9968" stroke="#141a0e" stroke-width="0.8" stroke-linejoin="round"/>
<polygon points="738.0,145.1 729.4,143.3 734.9,156.8" fill="#96a26e" stroke="#141a0e" stroke-width="0.8" stroke-linejoin="round"/>
<polygon points="806.4,127.9 797.2,130.4 804.2,141.4" fill="#585f41" stroke="#141a0e" stroke-width="0.8" stroke-linejoin="round"/>
<polygon points="797.2,130.4 794.2,143.7 804.2,141.4" fill="#5f6746" stroke="#141a0e" stroke-width="0.8" stroke-linejoin="round"/>
<polygon points="742.3,133.3 732.9,131.8 738.0,145.1" fill="#8c9767" stroke="#141a0e" stroke-width="0.8" stroke-linejoin="round"/>
<polygon points="732.9,131.8 729.4,143.3 738.0,145.1" fill="#8d9868" stroke="#141a0e" stroke-width="0.8" stroke-linejoin="round"/>
<polygon points="804.2,141.4 799.2,155.4 808.4,152.9" fill="#5d6444" stroke="#141a0e" stroke-width="0.8" stroke-linejoin="round"/>
<polygon points="804.2,141.4 794.2,143.7 799.2,155.4" fill="#666e4b" stroke="#141a0e" stroke-width="0.8" stroke-linejoin="round"/>
<polygon points="748.2,146.3 744.3,158.3 754.8,159.1" fill="#869163" stroke="#141a0e" stroke-width="0.8" stroke-linejoin="round"/>
<polygon points="748.2,146.3 738.0,145.1 744.3,158.3" fill="#8d9968" stroke="#141a0e" stroke-width="0.8" stroke-linejoin="round"/>
<polygon points="797.2,130.4 786.8,132.3 794.2,143.7" fill="#616948" stroke="#141a0e" stroke-width="0.8" stroke-linejoin="round"/>
<polygon points="786.8,132.3 782.7,145.5 794.2,143.7" fill="#676f4c" stroke="#141a0e" stroke-width="0.8" stroke-linejoin="round"/>
<polygon points="752.8,134.1 742.3,133.3 748.2,146.3" fill="#869163" stroke="#141a0e" stroke-width="0.8" stroke-linejoin="round"/>
<polygon points="742.3,133.3 738.0,145.1 748.2,146.3" fill="#8c9767" stroke="#141a0e" stroke-width="0.8" stroke-linejoin="round"/>
<polygon points="794.2,143.7 788.8,157.3 799.2,155.4" fill="#636b49" stroke="#141a0e" stroke-width="0.8" stroke-linejoin="round"/>
<polygon points="794.2,143.7 782.7,145.5 788.8,157.3" fill="#727b54" stroke="#141a0e" stroke-width="0.8" stroke-linejoin="round"/>
<polygon points="758.3,146.7 754.8,159.1 766.1,159.2" fill="#838d60" stroke="#141a0e" stroke-width="0.8" stroke-linejoin="round"/>
<polygon points="758.3,146.7 748.2,146.3 754.8,159.1" fill="#889364" stroke="#141a0e" stroke-width="0.8" stroke-linejoin="round"/>
<polygon points="786.8,132.3 775.6,133.6 782.7,145.5" fill="#68704c" stroke="#141a0e" stroke-width="0.8" stroke-linejoin="round"/>
<polygon points="775.6,133.6 772.2,146.4 782.7,145.5" fill="#737c55" stroke="#141a0e" stroke-width="0.8" stroke-linejoin="round"/>
<polygon points="764.1,134.2 752.8,134.1 758.3,146.7" fill="#808a5e" stroke="#141a0e" stroke-width="0.8" stroke-linejoin="round"/>
<polygon points="752.8,134.1 748.2,146.3 758.3,146.7" fill="#848e61" stroke="#141a0e" stroke-width="0.8" stroke-linejoin="round"/>
<polygon points="782.7,145.5 777.6,158.6 788.8,157.3" fill="#6f7852" stroke="#141a0e" stroke-width="0.8" stroke-linejoin="round"/>
<polygon points="782.7,145.5 772.2,146.4 777.6,158.6" fill="#757e56" stroke="#141a0e" stroke-width="0.8" stroke-linejoin="round"/>
<polygon points="772.2,146.4 766.1,159.2 777.6,158.6" fill="#767f57" stroke="#141a0e" stroke-width="0.8" stroke-linejoin="round"/>
<polygon points="772.2,146.4 758.3,146.7 766.1,159.2" fill="#828c60" stroke="#141a0e" stroke-width="0.8" stroke-linejoin="round"/>
<polygon points="775.6,133.6 764.1,134.2 772.2,146.4" fill="#778057" stroke="#141a0e" stroke-width="0.8" stroke-linejoin="round"/>
<polygon points="764.1,134.2 758.3,146.7 772.2,146.4" fill="#808a5e" stroke="#141a0e" stroke-width="0.8" stroke-linejoin="round"/>
<polygon points="823.9,115.1 813.9,125.1 786.8,132.3 752.8,134.1 725.1,129.7 714.1,120.9 724.1,110.9 751.2,103.7 785.2,101.9 812.9,106.3" fill="#798359" stroke="#141a0e" stroke-width="1.0" stroke-linejoin="round"/>
<polygon points="823.9,115.1 813.9,125.1 793.7,121.9" fill="#6c7550" stroke="#141a0e" stroke-width="0.7" stroke-linejoin="round"/>
<polygon points="813.9,125.1 786.8,132.3 793.7,121.9" fill="#6a724e" stroke="#141a0e" stroke-width="0.7" stroke-linejoin="round"/>
<polygon points="786.8,132.3 752.8,134.1 760.1,126.8" fill="#6c7550" stroke="#141a0e" stroke-width="0.7" stroke-linejoin="round"/>
<polygon points="752.8,134.1 725.1,129.7 760.1,126.8" fill="#727b54" stroke="#141a0e" stroke-width="0.7" stroke-linejoin="round"/>
<polygon points="725.1,129.7 714.1,120.9 738.8,119.6" fill="#7a835a" stroke="#141a0e" stroke-width="0.7" stroke-linejoin="round"/>
<polygon points="714.1,120.9 724.1,110.9 738.8,119.6" fill="#808a5e" stroke="#141a0e" stroke-width="0.7" stroke-linejoin="round"/>
<polygon points="724.1,110.9 751.2,103.7 759.2,110.1" fill="#828d60" stroke="#141a0e" stroke-width="0.7" stroke-linejoin="round"/>
<polygon points="751.2,103.7 785.2,101.9 759.2,110.1" fill="#808a5e" stroke="#141a0e" stroke-width="0.7" stroke-linejoin="round"/>
<polygon points="785.2,101.9 812.9,106.3 793.2,111.6" fill="#7a845a" stroke="#141a0e" stroke-width="0.7" stroke-linejoin="round"/>
<polygon points="812.9,106.3 823.9,115.1 793.2,111.6" fill="#727c54" stroke="#141a0e" stroke-width="0.7" stroke-linejoin="round"/>
<polygon points="793.7,121.9 760.1,126.8 769.0,118.0" fill="#798359" stroke="#141a0e" stroke-width="0.7" stroke-linejoin="round"/>
<polygon points="760.1,126.8 738.8,119.6 769.0,118.0" fill="#798359" stroke="#141a0e" stroke-width="0.7" stroke-linejoin="round"/>
<polygon points="738.8,119.6 759.2,110.1 769.0,118.0" fill="#798359" stroke="#141a0e" stroke-width="0.7" stroke-linejoin="round"/>
<polygon points="759.2,110.1 793.2,111.6 769.0,118.0" fill="#798359" stroke="#141a0e" stroke-width="0.7" stroke-linejoin="round"/>
<polygon points="793.2,111.6 793.7,121.9 769.0,118.0" fill="#798359" stroke="#141a0e" stroke-width="0.7" stroke-linejoin="round"/>
<circle cx="783" cy="158" r="15" fill="url(#sgt)" opacity="0.6"/>
<circle cx="467" cy="660" r="30" fill="url(#sg)" opacity="0.8"/>
<circle cx="468" cy="692" r="30" fill="url(#sg)" opacity="0.8"/>
<circle cx="455" cy="340" r="6" fill="url(#sg)" opacity="0.9"/>
<circle cx="470" cy="493" r="6" fill="url(#sg)" opacity="0.9"/>
<g fill="none" stroke-linecap="round"><line x1="327.5" y1="576.5" x2="268" y2="585" stroke="#a8262f" stroke-width="2"/><polygon points="263,585.5 282,581 283,587.5" fill="#8b1a20" stroke="none"/><line x1="327.5" y1="576.5" x2="314" y2="562" stroke="#2aa52a" stroke-width="2"/><polygon points="312,559.5 319.5,562 315,567.5" fill="#1e8a1e" stroke="none"/><line x1="327.5" y1="576.5" x2="330.5" y2="620" stroke="#2c5fa8" stroke-width="2"/><polygon points="331.5,635 328,618 335,618" fill="#1d4a8c" stroke="none"/></g><text x="278" y="581" font-family="Liberation Sans" font-style="italic" font-size="13.5" fill="#a84444">X</text><text x="317" y="558" font-family="Liberation Sans" font-style="italic" font-size="12" fill="#4c9a4c">y</text><text x="333" y="622" font-family="Liberation Sans" font-style="italic" font-size="13" fill="#4272b8">Z</text></g></svg>

<!-- tabs row -->
<div class="a" style="left:204px;top:698px;width:1076px;height:21px;background:#f0f0f0"></div>
<div class="a" style="left:206px;top:697px;width:107px;height:20px;background:#fff;border:1px solid #8a8a8a;border-top:none;border-radius:0 0 3px 3px;background:linear-gradient(#ffffff,#f4f4f4)"></div>
<div class="a" style="left:212px;top:702px;font-size:10.8px;font-weight:bold;white-space:nowrap">Arcing_horns.m3d</div>
<svg class="ico" style="left:1244px;top:702px" width="30" height="12" viewBox="0 0 30 12"><path d="M9.5 1.5L4 6L9.5 10.5Z" fill="none" stroke="#404040"/><path d="M20.5 1.5L26 6L20.5 10.5Z" fill="none" stroke="#404040"/></svg>

<!-- status bar -->
<div class="a" style="left:0;top:719px;width:1280px;height:19px;background:#f0eeed;border-top:1px solid #8c8c8c"></div>
<div class="a" style="left:4px;top:724px;font-size:11px;white-space:nowrap">For Help, press F1</div>
<div class="a" style="left:941px;top:724px;font-size:10.9px;white-space:nowrap">0.2223 m, 0.0084 m, 0.2594 m</div>
</body></html>
